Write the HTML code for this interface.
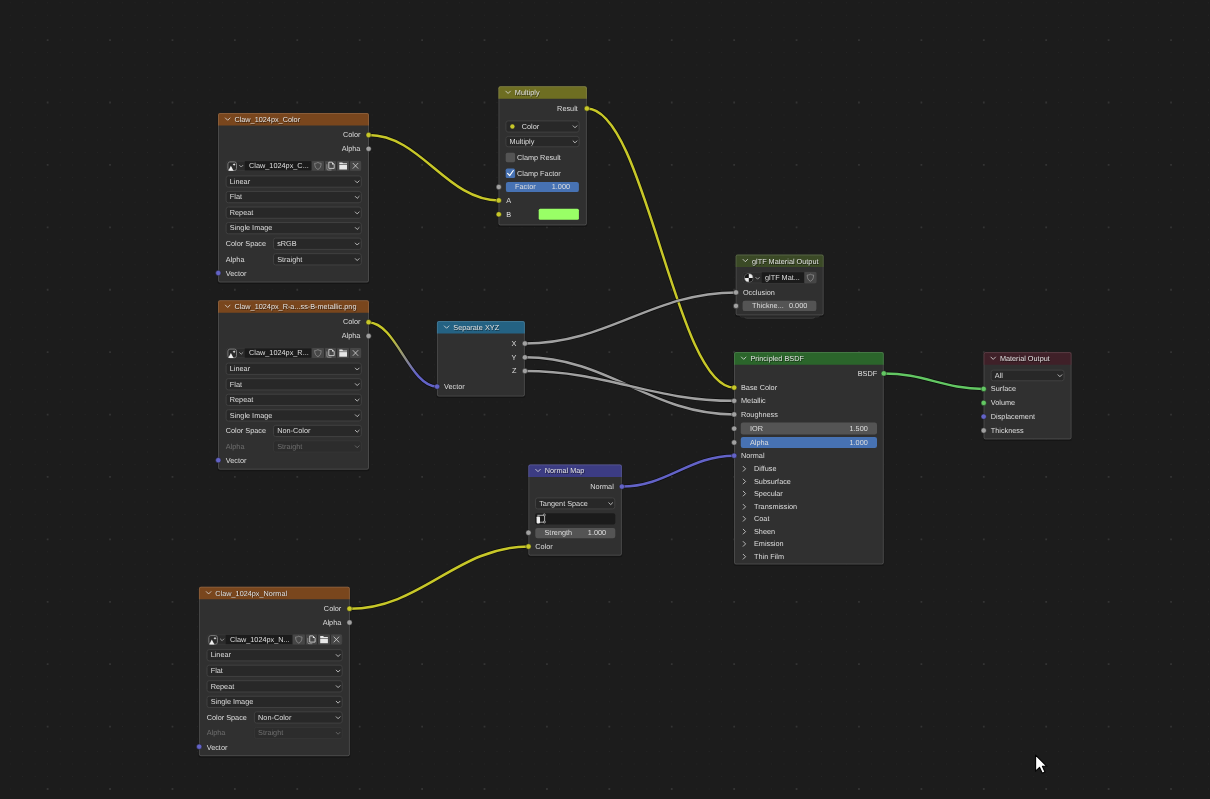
<!DOCTYPE html>
<html><head><meta charset="utf-8"><title>Blender Node Editor</title>
<style>
html,body{margin:0;padding:0;background:#1c1c1c;overflow:hidden;}
body{width:1210px;height:799px;font-family:"Liberation Sans", sans-serif;}
svg{display:block;text-rendering:geometricPrecision;will-change:transform;}
</style></head><body>
<svg width="1210" height="799" viewBox="0 0 1210 799" font-family='"Liberation Sans", sans-serif'>
<defs><linearGradient id="lg4" gradientUnits="userSpaceOnUse" x1="368.6" y1="322.5" x2="437.1" y2="386.6"><stop offset="0.25" stop-color="#c7c729"/><stop offset="0.75" stop-color="#6363c7"/></linearGradient></defs>
<rect width="1210" height="799" fill="#1c1c1c"/>
<path d="M9.70,2.15h1v1h-1zM22.18,2.15h1v1h-1zM34.66,2.15h1v1h-1zM47.15,2.15h1v1h-1zM59.63,2.15h1v1h-1zM72.11,2.15h1v1h-1zM84.59,2.15h1v1h-1zM97.07,2.15h1v1h-1zM109.56,2.15h1v1h-1zM122.04,2.15h1v1h-1zM134.52,2.15h1v1h-1zM147.00,2.15h1v1h-1zM159.48,2.15h1v1h-1zM171.97,2.15h1v1h-1zM184.45,2.15h1v1h-1zM196.93,2.15h1v1h-1zM209.41,2.15h1v1h-1zM221.89,2.15h1v1h-1zM234.38,2.15h1v1h-1zM246.86,2.15h1v1h-1zM259.34,2.15h1v1h-1zM271.82,2.15h1v1h-1zM284.30,2.15h1v1h-1zM296.79,2.15h1v1h-1zM309.27,2.15h1v1h-1zM321.75,2.15h1v1h-1zM334.23,2.15h1v1h-1zM346.71,2.15h1v1h-1zM359.20,2.15h1v1h-1zM371.68,2.15h1v1h-1zM384.16,2.15h1v1h-1zM396.64,2.15h1v1h-1zM409.12,2.15h1v1h-1zM421.61,2.15h1v1h-1zM434.09,2.15h1v1h-1zM446.57,2.15h1v1h-1zM459.05,2.15h1v1h-1zM471.53,2.15h1v1h-1zM484.02,2.15h1v1h-1zM496.50,2.15h1v1h-1zM508.98,2.15h1v1h-1zM521.46,2.15h1v1h-1zM533.94,2.15h1v1h-1zM546.43,2.15h1v1h-1zM558.91,2.15h1v1h-1zM571.39,2.15h1v1h-1zM583.87,2.15h1v1h-1zM596.35,2.15h1v1h-1zM608.84,2.15h1v1h-1zM621.32,2.15h1v1h-1zM633.80,2.15h1v1h-1zM646.28,2.15h1v1h-1zM658.76,2.15h1v1h-1zM671.25,2.15h1v1h-1zM683.73,2.15h1v1h-1zM696.21,2.15h1v1h-1zM708.69,2.15h1v1h-1zM721.17,2.15h1v1h-1zM733.66,2.15h1v1h-1zM746.14,2.15h1v1h-1zM758.62,2.15h1v1h-1zM771.10,2.15h1v1h-1zM783.58,2.15h1v1h-1zM796.07,2.15h1v1h-1zM808.55,2.15h1v1h-1zM821.03,2.15h1v1h-1zM833.51,2.15h1v1h-1zM845.99,2.15h1v1h-1zM858.48,2.15h1v1h-1zM870.96,2.15h1v1h-1zM883.44,2.15h1v1h-1zM895.92,2.15h1v1h-1zM908.40,2.15h1v1h-1zM920.89,2.15h1v1h-1zM933.37,2.15h1v1h-1zM945.85,2.15h1v1h-1zM958.33,2.15h1v1h-1zM970.81,2.15h1v1h-1zM983.30,2.15h1v1h-1zM995.78,2.15h1v1h-1zM1008.26,2.15h1v1h-1zM1020.74,2.15h1v1h-1zM1033.22,2.15h1v1h-1zM1045.71,2.15h1v1h-1zM1058.19,2.15h1v1h-1zM1070.67,2.15h1v1h-1zM1083.15,2.15h1v1h-1zM1095.63,2.15h1v1h-1zM1108.12,2.15h1v1h-1zM1120.60,2.15h1v1h-1zM1133.08,2.15h1v1h-1zM1145.56,2.15h1v1h-1zM1158.04,2.15h1v1h-1zM1170.53,2.15h1v1h-1zM1183.01,2.15h1v1h-1zM1195.49,2.15h1v1h-1zM1207.97,2.15h1v1h-1zM9.70,14.63h1v1h-1zM22.18,14.63h1v1h-1zM34.66,14.63h1v1h-1zM47.15,14.63h1v1h-1zM59.63,14.63h1v1h-1zM72.11,14.63h1v1h-1zM84.59,14.63h1v1h-1zM97.07,14.63h1v1h-1zM109.56,14.63h1v1h-1zM122.04,14.63h1v1h-1zM134.52,14.63h1v1h-1zM147.00,14.63h1v1h-1zM159.48,14.63h1v1h-1zM171.97,14.63h1v1h-1zM184.45,14.63h1v1h-1zM196.93,14.63h1v1h-1zM209.41,14.63h1v1h-1zM221.89,14.63h1v1h-1zM234.38,14.63h1v1h-1zM246.86,14.63h1v1h-1zM259.34,14.63h1v1h-1zM271.82,14.63h1v1h-1zM284.30,14.63h1v1h-1zM296.79,14.63h1v1h-1zM309.27,14.63h1v1h-1zM321.75,14.63h1v1h-1zM334.23,14.63h1v1h-1zM346.71,14.63h1v1h-1zM359.20,14.63h1v1h-1zM371.68,14.63h1v1h-1zM384.16,14.63h1v1h-1zM396.64,14.63h1v1h-1zM409.12,14.63h1v1h-1zM421.61,14.63h1v1h-1zM434.09,14.63h1v1h-1zM446.57,14.63h1v1h-1zM459.05,14.63h1v1h-1zM471.53,14.63h1v1h-1zM484.02,14.63h1v1h-1zM496.50,14.63h1v1h-1zM508.98,14.63h1v1h-1zM521.46,14.63h1v1h-1zM533.94,14.63h1v1h-1zM546.43,14.63h1v1h-1zM558.91,14.63h1v1h-1zM571.39,14.63h1v1h-1zM583.87,14.63h1v1h-1zM596.35,14.63h1v1h-1zM608.84,14.63h1v1h-1zM621.32,14.63h1v1h-1zM633.80,14.63h1v1h-1zM646.28,14.63h1v1h-1zM658.76,14.63h1v1h-1zM671.25,14.63h1v1h-1zM683.73,14.63h1v1h-1zM696.21,14.63h1v1h-1zM708.69,14.63h1v1h-1zM721.17,14.63h1v1h-1zM733.66,14.63h1v1h-1zM746.14,14.63h1v1h-1zM758.62,14.63h1v1h-1zM771.10,14.63h1v1h-1zM783.58,14.63h1v1h-1zM796.07,14.63h1v1h-1zM808.55,14.63h1v1h-1zM821.03,14.63h1v1h-1zM833.51,14.63h1v1h-1zM845.99,14.63h1v1h-1zM858.48,14.63h1v1h-1zM870.96,14.63h1v1h-1zM883.44,14.63h1v1h-1zM895.92,14.63h1v1h-1zM908.40,14.63h1v1h-1zM920.89,14.63h1v1h-1zM933.37,14.63h1v1h-1zM945.85,14.63h1v1h-1zM958.33,14.63h1v1h-1zM970.81,14.63h1v1h-1zM983.30,14.63h1v1h-1zM995.78,14.63h1v1h-1zM1008.26,14.63h1v1h-1zM1020.74,14.63h1v1h-1zM1033.22,14.63h1v1h-1zM1045.71,14.63h1v1h-1zM1058.19,14.63h1v1h-1zM1070.67,14.63h1v1h-1zM1083.15,14.63h1v1h-1zM1095.63,14.63h1v1h-1zM1108.12,14.63h1v1h-1zM1120.60,14.63h1v1h-1zM1133.08,14.63h1v1h-1zM1145.56,14.63h1v1h-1zM1158.04,14.63h1v1h-1zM1170.53,14.63h1v1h-1zM1183.01,14.63h1v1h-1zM1195.49,14.63h1v1h-1zM1207.97,14.63h1v1h-1zM9.70,27.11h1v1h-1zM22.18,27.11h1v1h-1zM34.66,27.11h1v1h-1zM47.15,27.11h1v1h-1zM59.63,27.11h1v1h-1zM72.11,27.11h1v1h-1zM84.59,27.11h1v1h-1zM97.07,27.11h1v1h-1zM109.56,27.11h1v1h-1zM122.04,27.11h1v1h-1zM134.52,27.11h1v1h-1zM147.00,27.11h1v1h-1zM159.48,27.11h1v1h-1zM171.97,27.11h1v1h-1zM184.45,27.11h1v1h-1zM196.93,27.11h1v1h-1zM209.41,27.11h1v1h-1zM221.89,27.11h1v1h-1zM234.38,27.11h1v1h-1zM246.86,27.11h1v1h-1zM259.34,27.11h1v1h-1zM271.82,27.11h1v1h-1zM284.30,27.11h1v1h-1zM296.79,27.11h1v1h-1zM309.27,27.11h1v1h-1zM321.75,27.11h1v1h-1zM334.23,27.11h1v1h-1zM346.71,27.11h1v1h-1zM359.20,27.11h1v1h-1zM371.68,27.11h1v1h-1zM384.16,27.11h1v1h-1zM396.64,27.11h1v1h-1zM409.12,27.11h1v1h-1zM421.61,27.11h1v1h-1zM434.09,27.11h1v1h-1zM446.57,27.11h1v1h-1zM459.05,27.11h1v1h-1zM471.53,27.11h1v1h-1zM484.02,27.11h1v1h-1zM496.50,27.11h1v1h-1zM508.98,27.11h1v1h-1zM521.46,27.11h1v1h-1zM533.94,27.11h1v1h-1zM546.43,27.11h1v1h-1zM558.91,27.11h1v1h-1zM571.39,27.11h1v1h-1zM583.87,27.11h1v1h-1zM596.35,27.11h1v1h-1zM608.84,27.11h1v1h-1zM621.32,27.11h1v1h-1zM633.80,27.11h1v1h-1zM646.28,27.11h1v1h-1zM658.76,27.11h1v1h-1zM671.25,27.11h1v1h-1zM683.73,27.11h1v1h-1zM696.21,27.11h1v1h-1zM708.69,27.11h1v1h-1zM721.17,27.11h1v1h-1zM733.66,27.11h1v1h-1zM746.14,27.11h1v1h-1zM758.62,27.11h1v1h-1zM771.10,27.11h1v1h-1zM783.58,27.11h1v1h-1zM796.07,27.11h1v1h-1zM808.55,27.11h1v1h-1zM821.03,27.11h1v1h-1zM833.51,27.11h1v1h-1zM845.99,27.11h1v1h-1zM858.48,27.11h1v1h-1zM870.96,27.11h1v1h-1zM883.44,27.11h1v1h-1zM895.92,27.11h1v1h-1zM908.40,27.11h1v1h-1zM920.89,27.11h1v1h-1zM933.37,27.11h1v1h-1zM945.85,27.11h1v1h-1zM958.33,27.11h1v1h-1zM970.81,27.11h1v1h-1zM983.30,27.11h1v1h-1zM995.78,27.11h1v1h-1zM1008.26,27.11h1v1h-1zM1020.74,27.11h1v1h-1zM1033.22,27.11h1v1h-1zM1045.71,27.11h1v1h-1zM1058.19,27.11h1v1h-1zM1070.67,27.11h1v1h-1zM1083.15,27.11h1v1h-1zM1095.63,27.11h1v1h-1zM1108.12,27.11h1v1h-1zM1120.60,27.11h1v1h-1zM1133.08,27.11h1v1h-1zM1145.56,27.11h1v1h-1zM1158.04,27.11h1v1h-1zM1170.53,27.11h1v1h-1zM1183.01,27.11h1v1h-1zM1195.49,27.11h1v1h-1zM1207.97,27.11h1v1h-1zM9.70,39.60h1v1h-1zM22.18,39.60h1v1h-1zM34.66,39.60h1v1h-1zM59.63,39.60h1v1h-1zM72.11,39.60h1v1h-1zM84.59,39.60h1v1h-1zM97.07,39.60h1v1h-1zM122.04,39.60h1v1h-1zM134.52,39.60h1v1h-1zM147.00,39.60h1v1h-1zM159.48,39.60h1v1h-1zM184.45,39.60h1v1h-1zM196.93,39.60h1v1h-1zM209.41,39.60h1v1h-1zM221.89,39.60h1v1h-1zM246.86,39.60h1v1h-1zM259.34,39.60h1v1h-1zM271.82,39.60h1v1h-1zM284.30,39.60h1v1h-1zM309.27,39.60h1v1h-1zM321.75,39.60h1v1h-1zM334.23,39.60h1v1h-1zM346.71,39.60h1v1h-1zM371.68,39.60h1v1h-1zM384.16,39.60h1v1h-1zM396.64,39.60h1v1h-1zM409.12,39.60h1v1h-1zM434.09,39.60h1v1h-1zM446.57,39.60h1v1h-1zM459.05,39.60h1v1h-1zM471.53,39.60h1v1h-1zM496.50,39.60h1v1h-1zM508.98,39.60h1v1h-1zM521.46,39.60h1v1h-1zM533.94,39.60h1v1h-1zM558.91,39.60h1v1h-1zM571.39,39.60h1v1h-1zM583.87,39.60h1v1h-1zM596.35,39.60h1v1h-1zM621.32,39.60h1v1h-1zM633.80,39.60h1v1h-1zM646.28,39.60h1v1h-1zM658.76,39.60h1v1h-1zM683.73,39.60h1v1h-1zM696.21,39.60h1v1h-1zM708.69,39.60h1v1h-1zM721.17,39.60h1v1h-1zM746.14,39.60h1v1h-1zM758.62,39.60h1v1h-1zM771.10,39.60h1v1h-1zM783.58,39.60h1v1h-1zM808.55,39.60h1v1h-1zM821.03,39.60h1v1h-1zM833.51,39.60h1v1h-1zM845.99,39.60h1v1h-1zM870.96,39.60h1v1h-1zM883.44,39.60h1v1h-1zM895.92,39.60h1v1h-1zM908.40,39.60h1v1h-1zM933.37,39.60h1v1h-1zM945.85,39.60h1v1h-1zM958.33,39.60h1v1h-1zM970.81,39.60h1v1h-1zM995.78,39.60h1v1h-1zM1008.26,39.60h1v1h-1zM1020.74,39.60h1v1h-1zM1033.22,39.60h1v1h-1zM1058.19,39.60h1v1h-1zM1070.67,39.60h1v1h-1zM1083.15,39.60h1v1h-1zM1095.63,39.60h1v1h-1zM1120.60,39.60h1v1h-1zM1133.08,39.60h1v1h-1zM1145.56,39.60h1v1h-1zM1158.04,39.60h1v1h-1zM1183.01,39.60h1v1h-1zM1195.49,39.60h1v1h-1zM1207.97,39.60h1v1h-1zM9.70,52.08h1v1h-1zM22.18,52.08h1v1h-1zM34.66,52.08h1v1h-1zM47.15,52.08h1v1h-1zM59.63,52.08h1v1h-1zM72.11,52.08h1v1h-1zM84.59,52.08h1v1h-1zM97.07,52.08h1v1h-1zM109.56,52.08h1v1h-1zM122.04,52.08h1v1h-1zM134.52,52.08h1v1h-1zM147.00,52.08h1v1h-1zM159.48,52.08h1v1h-1zM171.97,52.08h1v1h-1zM184.45,52.08h1v1h-1zM196.93,52.08h1v1h-1zM209.41,52.08h1v1h-1zM221.89,52.08h1v1h-1zM234.38,52.08h1v1h-1zM246.86,52.08h1v1h-1zM259.34,52.08h1v1h-1zM271.82,52.08h1v1h-1zM284.30,52.08h1v1h-1zM296.79,52.08h1v1h-1zM309.27,52.08h1v1h-1zM321.75,52.08h1v1h-1zM334.23,52.08h1v1h-1zM346.71,52.08h1v1h-1zM359.20,52.08h1v1h-1zM371.68,52.08h1v1h-1zM384.16,52.08h1v1h-1zM396.64,52.08h1v1h-1zM409.12,52.08h1v1h-1zM421.61,52.08h1v1h-1zM434.09,52.08h1v1h-1zM446.57,52.08h1v1h-1zM459.05,52.08h1v1h-1zM471.53,52.08h1v1h-1zM484.02,52.08h1v1h-1zM496.50,52.08h1v1h-1zM508.98,52.08h1v1h-1zM521.46,52.08h1v1h-1zM533.94,52.08h1v1h-1zM546.43,52.08h1v1h-1zM558.91,52.08h1v1h-1zM571.39,52.08h1v1h-1zM583.87,52.08h1v1h-1zM596.35,52.08h1v1h-1zM608.84,52.08h1v1h-1zM621.32,52.08h1v1h-1zM633.80,52.08h1v1h-1zM646.28,52.08h1v1h-1zM658.76,52.08h1v1h-1zM671.25,52.08h1v1h-1zM683.73,52.08h1v1h-1zM696.21,52.08h1v1h-1zM708.69,52.08h1v1h-1zM721.17,52.08h1v1h-1zM733.66,52.08h1v1h-1zM746.14,52.08h1v1h-1zM758.62,52.08h1v1h-1zM771.10,52.08h1v1h-1zM783.58,52.08h1v1h-1zM796.07,52.08h1v1h-1zM808.55,52.08h1v1h-1zM821.03,52.08h1v1h-1zM833.51,52.08h1v1h-1zM845.99,52.08h1v1h-1zM858.48,52.08h1v1h-1zM870.96,52.08h1v1h-1zM883.44,52.08h1v1h-1zM895.92,52.08h1v1h-1zM908.40,52.08h1v1h-1zM920.89,52.08h1v1h-1zM933.37,52.08h1v1h-1zM945.85,52.08h1v1h-1zM958.33,52.08h1v1h-1zM970.81,52.08h1v1h-1zM983.30,52.08h1v1h-1zM995.78,52.08h1v1h-1zM1008.26,52.08h1v1h-1zM1020.74,52.08h1v1h-1zM1033.22,52.08h1v1h-1zM1045.71,52.08h1v1h-1zM1058.19,52.08h1v1h-1zM1070.67,52.08h1v1h-1zM1083.15,52.08h1v1h-1zM1095.63,52.08h1v1h-1zM1108.12,52.08h1v1h-1zM1120.60,52.08h1v1h-1zM1133.08,52.08h1v1h-1zM1145.56,52.08h1v1h-1zM1158.04,52.08h1v1h-1zM1170.53,52.08h1v1h-1zM1183.01,52.08h1v1h-1zM1195.49,52.08h1v1h-1zM1207.97,52.08h1v1h-1zM9.70,64.56h1v1h-1zM22.18,64.56h1v1h-1zM34.66,64.56h1v1h-1zM47.15,64.56h1v1h-1zM59.63,64.56h1v1h-1zM72.11,64.56h1v1h-1zM84.59,64.56h1v1h-1zM97.07,64.56h1v1h-1zM109.56,64.56h1v1h-1zM122.04,64.56h1v1h-1zM134.52,64.56h1v1h-1zM147.00,64.56h1v1h-1zM159.48,64.56h1v1h-1zM171.97,64.56h1v1h-1zM184.45,64.56h1v1h-1zM196.93,64.56h1v1h-1zM209.41,64.56h1v1h-1zM221.89,64.56h1v1h-1zM234.38,64.56h1v1h-1zM246.86,64.56h1v1h-1zM259.34,64.56h1v1h-1zM271.82,64.56h1v1h-1zM284.30,64.56h1v1h-1zM296.79,64.56h1v1h-1zM309.27,64.56h1v1h-1zM321.75,64.56h1v1h-1zM334.23,64.56h1v1h-1zM346.71,64.56h1v1h-1zM359.20,64.56h1v1h-1zM371.68,64.56h1v1h-1zM384.16,64.56h1v1h-1zM396.64,64.56h1v1h-1zM409.12,64.56h1v1h-1zM421.61,64.56h1v1h-1zM434.09,64.56h1v1h-1zM446.57,64.56h1v1h-1zM459.05,64.56h1v1h-1zM471.53,64.56h1v1h-1zM484.02,64.56h1v1h-1zM496.50,64.56h1v1h-1zM508.98,64.56h1v1h-1zM521.46,64.56h1v1h-1zM533.94,64.56h1v1h-1zM546.43,64.56h1v1h-1zM558.91,64.56h1v1h-1zM571.39,64.56h1v1h-1zM583.87,64.56h1v1h-1zM596.35,64.56h1v1h-1zM608.84,64.56h1v1h-1zM621.32,64.56h1v1h-1zM633.80,64.56h1v1h-1zM646.28,64.56h1v1h-1zM658.76,64.56h1v1h-1zM671.25,64.56h1v1h-1zM683.73,64.56h1v1h-1zM696.21,64.56h1v1h-1zM708.69,64.56h1v1h-1zM721.17,64.56h1v1h-1zM733.66,64.56h1v1h-1zM746.14,64.56h1v1h-1zM758.62,64.56h1v1h-1zM771.10,64.56h1v1h-1zM783.58,64.56h1v1h-1zM796.07,64.56h1v1h-1zM808.55,64.56h1v1h-1zM821.03,64.56h1v1h-1zM833.51,64.56h1v1h-1zM845.99,64.56h1v1h-1zM858.48,64.56h1v1h-1zM870.96,64.56h1v1h-1zM883.44,64.56h1v1h-1zM895.92,64.56h1v1h-1zM908.40,64.56h1v1h-1zM920.89,64.56h1v1h-1zM933.37,64.56h1v1h-1zM945.85,64.56h1v1h-1zM958.33,64.56h1v1h-1zM970.81,64.56h1v1h-1zM983.30,64.56h1v1h-1zM995.78,64.56h1v1h-1zM1008.26,64.56h1v1h-1zM1020.74,64.56h1v1h-1zM1033.22,64.56h1v1h-1zM1045.71,64.56h1v1h-1zM1058.19,64.56h1v1h-1zM1070.67,64.56h1v1h-1zM1083.15,64.56h1v1h-1zM1095.63,64.56h1v1h-1zM1108.12,64.56h1v1h-1zM1120.60,64.56h1v1h-1zM1133.08,64.56h1v1h-1zM1145.56,64.56h1v1h-1zM1158.04,64.56h1v1h-1zM1170.53,64.56h1v1h-1zM1183.01,64.56h1v1h-1zM1195.49,64.56h1v1h-1zM1207.97,64.56h1v1h-1zM9.70,77.04h1v1h-1zM22.18,77.04h1v1h-1zM34.66,77.04h1v1h-1zM47.15,77.04h1v1h-1zM59.63,77.04h1v1h-1zM72.11,77.04h1v1h-1zM84.59,77.04h1v1h-1zM97.07,77.04h1v1h-1zM109.56,77.04h1v1h-1zM122.04,77.04h1v1h-1zM134.52,77.04h1v1h-1zM147.00,77.04h1v1h-1zM159.48,77.04h1v1h-1zM171.97,77.04h1v1h-1zM184.45,77.04h1v1h-1zM196.93,77.04h1v1h-1zM209.41,77.04h1v1h-1zM221.89,77.04h1v1h-1zM234.38,77.04h1v1h-1zM246.86,77.04h1v1h-1zM259.34,77.04h1v1h-1zM271.82,77.04h1v1h-1zM284.30,77.04h1v1h-1zM296.79,77.04h1v1h-1zM309.27,77.04h1v1h-1zM321.75,77.04h1v1h-1zM334.23,77.04h1v1h-1zM346.71,77.04h1v1h-1zM359.20,77.04h1v1h-1zM371.68,77.04h1v1h-1zM384.16,77.04h1v1h-1zM396.64,77.04h1v1h-1zM409.12,77.04h1v1h-1zM421.61,77.04h1v1h-1zM434.09,77.04h1v1h-1zM446.57,77.04h1v1h-1zM459.05,77.04h1v1h-1zM471.53,77.04h1v1h-1zM484.02,77.04h1v1h-1zM496.50,77.04h1v1h-1zM508.98,77.04h1v1h-1zM521.46,77.04h1v1h-1zM533.94,77.04h1v1h-1zM546.43,77.04h1v1h-1zM558.91,77.04h1v1h-1zM571.39,77.04h1v1h-1zM583.87,77.04h1v1h-1zM596.35,77.04h1v1h-1zM608.84,77.04h1v1h-1zM621.32,77.04h1v1h-1zM633.80,77.04h1v1h-1zM646.28,77.04h1v1h-1zM658.76,77.04h1v1h-1zM671.25,77.04h1v1h-1zM683.73,77.04h1v1h-1zM696.21,77.04h1v1h-1zM708.69,77.04h1v1h-1zM721.17,77.04h1v1h-1zM733.66,77.04h1v1h-1zM746.14,77.04h1v1h-1zM758.62,77.04h1v1h-1zM771.10,77.04h1v1h-1zM783.58,77.04h1v1h-1zM796.07,77.04h1v1h-1zM808.55,77.04h1v1h-1zM821.03,77.04h1v1h-1zM833.51,77.04h1v1h-1zM845.99,77.04h1v1h-1zM858.48,77.04h1v1h-1zM870.96,77.04h1v1h-1zM883.44,77.04h1v1h-1zM895.92,77.04h1v1h-1zM908.40,77.04h1v1h-1zM920.89,77.04h1v1h-1zM933.37,77.04h1v1h-1zM945.85,77.04h1v1h-1zM958.33,77.04h1v1h-1zM970.81,77.04h1v1h-1zM983.30,77.04h1v1h-1zM995.78,77.04h1v1h-1zM1008.26,77.04h1v1h-1zM1020.74,77.04h1v1h-1zM1033.22,77.04h1v1h-1zM1045.71,77.04h1v1h-1zM1058.19,77.04h1v1h-1zM1070.67,77.04h1v1h-1zM1083.15,77.04h1v1h-1zM1095.63,77.04h1v1h-1zM1108.12,77.04h1v1h-1zM1120.60,77.04h1v1h-1zM1133.08,77.04h1v1h-1zM1145.56,77.04h1v1h-1zM1158.04,77.04h1v1h-1zM1170.53,77.04h1v1h-1zM1183.01,77.04h1v1h-1zM1195.49,77.04h1v1h-1zM1207.97,77.04h1v1h-1zM9.70,89.52h1v1h-1zM22.18,89.52h1v1h-1zM34.66,89.52h1v1h-1zM47.15,89.52h1v1h-1zM59.63,89.52h1v1h-1zM72.11,89.52h1v1h-1zM84.59,89.52h1v1h-1zM97.07,89.52h1v1h-1zM109.56,89.52h1v1h-1zM122.04,89.52h1v1h-1zM134.52,89.52h1v1h-1zM147.00,89.52h1v1h-1zM159.48,89.52h1v1h-1zM171.97,89.52h1v1h-1zM184.45,89.52h1v1h-1zM196.93,89.52h1v1h-1zM209.41,89.52h1v1h-1zM221.89,89.52h1v1h-1zM234.38,89.52h1v1h-1zM246.86,89.52h1v1h-1zM259.34,89.52h1v1h-1zM271.82,89.52h1v1h-1zM284.30,89.52h1v1h-1zM296.79,89.52h1v1h-1zM309.27,89.52h1v1h-1zM321.75,89.52h1v1h-1zM334.23,89.52h1v1h-1zM346.71,89.52h1v1h-1zM359.20,89.52h1v1h-1zM371.68,89.52h1v1h-1zM384.16,89.52h1v1h-1zM396.64,89.52h1v1h-1zM409.12,89.52h1v1h-1zM421.61,89.52h1v1h-1zM434.09,89.52h1v1h-1zM446.57,89.52h1v1h-1zM459.05,89.52h1v1h-1zM471.53,89.52h1v1h-1zM484.02,89.52h1v1h-1zM496.50,89.52h1v1h-1zM508.98,89.52h1v1h-1zM521.46,89.52h1v1h-1zM533.94,89.52h1v1h-1zM546.43,89.52h1v1h-1zM558.91,89.52h1v1h-1zM571.39,89.52h1v1h-1zM583.87,89.52h1v1h-1zM596.35,89.52h1v1h-1zM608.84,89.52h1v1h-1zM621.32,89.52h1v1h-1zM633.80,89.52h1v1h-1zM646.28,89.52h1v1h-1zM658.76,89.52h1v1h-1zM671.25,89.52h1v1h-1zM683.73,89.52h1v1h-1zM696.21,89.52h1v1h-1zM708.69,89.52h1v1h-1zM721.17,89.52h1v1h-1zM733.66,89.52h1v1h-1zM746.14,89.52h1v1h-1zM758.62,89.52h1v1h-1zM771.10,89.52h1v1h-1zM783.58,89.52h1v1h-1zM796.07,89.52h1v1h-1zM808.55,89.52h1v1h-1zM821.03,89.52h1v1h-1zM833.51,89.52h1v1h-1zM845.99,89.52h1v1h-1zM858.48,89.52h1v1h-1zM870.96,89.52h1v1h-1zM883.44,89.52h1v1h-1zM895.92,89.52h1v1h-1zM908.40,89.52h1v1h-1zM920.89,89.52h1v1h-1zM933.37,89.52h1v1h-1zM945.85,89.52h1v1h-1zM958.33,89.52h1v1h-1zM970.81,89.52h1v1h-1zM983.30,89.52h1v1h-1zM995.78,89.52h1v1h-1zM1008.26,89.52h1v1h-1zM1020.74,89.52h1v1h-1zM1033.22,89.52h1v1h-1zM1045.71,89.52h1v1h-1zM1058.19,89.52h1v1h-1zM1070.67,89.52h1v1h-1zM1083.15,89.52h1v1h-1zM1095.63,89.52h1v1h-1zM1108.12,89.52h1v1h-1zM1120.60,89.52h1v1h-1zM1133.08,89.52h1v1h-1zM1145.56,89.52h1v1h-1zM1158.04,89.52h1v1h-1zM1170.53,89.52h1v1h-1zM1183.01,89.52h1v1h-1zM1195.49,89.52h1v1h-1zM1207.97,89.52h1v1h-1zM9.70,102.01h1v1h-1zM22.18,102.01h1v1h-1zM34.66,102.01h1v1h-1zM59.63,102.01h1v1h-1zM72.11,102.01h1v1h-1zM84.59,102.01h1v1h-1zM97.07,102.01h1v1h-1zM122.04,102.01h1v1h-1zM134.52,102.01h1v1h-1zM147.00,102.01h1v1h-1zM159.48,102.01h1v1h-1zM184.45,102.01h1v1h-1zM196.93,102.01h1v1h-1zM209.41,102.01h1v1h-1zM221.89,102.01h1v1h-1zM246.86,102.01h1v1h-1zM259.34,102.01h1v1h-1zM271.82,102.01h1v1h-1zM284.30,102.01h1v1h-1zM309.27,102.01h1v1h-1zM321.75,102.01h1v1h-1zM334.23,102.01h1v1h-1zM346.71,102.01h1v1h-1zM371.68,102.01h1v1h-1zM384.16,102.01h1v1h-1zM396.64,102.01h1v1h-1zM409.12,102.01h1v1h-1zM434.09,102.01h1v1h-1zM446.57,102.01h1v1h-1zM459.05,102.01h1v1h-1zM471.53,102.01h1v1h-1zM496.50,102.01h1v1h-1zM508.98,102.01h1v1h-1zM521.46,102.01h1v1h-1zM533.94,102.01h1v1h-1zM558.91,102.01h1v1h-1zM571.39,102.01h1v1h-1zM583.87,102.01h1v1h-1zM596.35,102.01h1v1h-1zM621.32,102.01h1v1h-1zM633.80,102.01h1v1h-1zM646.28,102.01h1v1h-1zM658.76,102.01h1v1h-1zM683.73,102.01h1v1h-1zM696.21,102.01h1v1h-1zM708.69,102.01h1v1h-1zM721.17,102.01h1v1h-1zM746.14,102.01h1v1h-1zM758.62,102.01h1v1h-1zM771.10,102.01h1v1h-1zM783.58,102.01h1v1h-1zM808.55,102.01h1v1h-1zM821.03,102.01h1v1h-1zM833.51,102.01h1v1h-1zM845.99,102.01h1v1h-1zM870.96,102.01h1v1h-1zM883.44,102.01h1v1h-1zM895.92,102.01h1v1h-1zM908.40,102.01h1v1h-1zM933.37,102.01h1v1h-1zM945.85,102.01h1v1h-1zM958.33,102.01h1v1h-1zM970.81,102.01h1v1h-1zM995.78,102.01h1v1h-1zM1008.26,102.01h1v1h-1zM1020.74,102.01h1v1h-1zM1033.22,102.01h1v1h-1zM1058.19,102.01h1v1h-1zM1070.67,102.01h1v1h-1zM1083.15,102.01h1v1h-1zM1095.63,102.01h1v1h-1zM1120.60,102.01h1v1h-1zM1133.08,102.01h1v1h-1zM1145.56,102.01h1v1h-1zM1158.04,102.01h1v1h-1zM1183.01,102.01h1v1h-1zM1195.49,102.01h1v1h-1zM1207.97,102.01h1v1h-1zM9.70,114.49h1v1h-1zM22.18,114.49h1v1h-1zM34.66,114.49h1v1h-1zM47.15,114.49h1v1h-1zM59.63,114.49h1v1h-1zM72.11,114.49h1v1h-1zM84.59,114.49h1v1h-1zM97.07,114.49h1v1h-1zM109.56,114.49h1v1h-1zM122.04,114.49h1v1h-1zM134.52,114.49h1v1h-1zM147.00,114.49h1v1h-1zM159.48,114.49h1v1h-1zM171.97,114.49h1v1h-1zM184.45,114.49h1v1h-1zM196.93,114.49h1v1h-1zM209.41,114.49h1v1h-1zM221.89,114.49h1v1h-1zM234.38,114.49h1v1h-1zM246.86,114.49h1v1h-1zM259.34,114.49h1v1h-1zM271.82,114.49h1v1h-1zM284.30,114.49h1v1h-1zM296.79,114.49h1v1h-1zM309.27,114.49h1v1h-1zM321.75,114.49h1v1h-1zM334.23,114.49h1v1h-1zM346.71,114.49h1v1h-1zM359.20,114.49h1v1h-1zM371.68,114.49h1v1h-1zM384.16,114.49h1v1h-1zM396.64,114.49h1v1h-1zM409.12,114.49h1v1h-1zM421.61,114.49h1v1h-1zM434.09,114.49h1v1h-1zM446.57,114.49h1v1h-1zM459.05,114.49h1v1h-1zM471.53,114.49h1v1h-1zM484.02,114.49h1v1h-1zM496.50,114.49h1v1h-1zM508.98,114.49h1v1h-1zM521.46,114.49h1v1h-1zM533.94,114.49h1v1h-1zM546.43,114.49h1v1h-1zM558.91,114.49h1v1h-1zM571.39,114.49h1v1h-1zM583.87,114.49h1v1h-1zM596.35,114.49h1v1h-1zM608.84,114.49h1v1h-1zM621.32,114.49h1v1h-1zM633.80,114.49h1v1h-1zM646.28,114.49h1v1h-1zM658.76,114.49h1v1h-1zM671.25,114.49h1v1h-1zM683.73,114.49h1v1h-1zM696.21,114.49h1v1h-1zM708.69,114.49h1v1h-1zM721.17,114.49h1v1h-1zM733.66,114.49h1v1h-1zM746.14,114.49h1v1h-1zM758.62,114.49h1v1h-1zM771.10,114.49h1v1h-1zM783.58,114.49h1v1h-1zM796.07,114.49h1v1h-1zM808.55,114.49h1v1h-1zM821.03,114.49h1v1h-1zM833.51,114.49h1v1h-1zM845.99,114.49h1v1h-1zM858.48,114.49h1v1h-1zM870.96,114.49h1v1h-1zM883.44,114.49h1v1h-1zM895.92,114.49h1v1h-1zM908.40,114.49h1v1h-1zM920.89,114.49h1v1h-1zM933.37,114.49h1v1h-1zM945.85,114.49h1v1h-1zM958.33,114.49h1v1h-1zM970.81,114.49h1v1h-1zM983.30,114.49h1v1h-1zM995.78,114.49h1v1h-1zM1008.26,114.49h1v1h-1zM1020.74,114.49h1v1h-1zM1033.22,114.49h1v1h-1zM1045.71,114.49h1v1h-1zM1058.19,114.49h1v1h-1zM1070.67,114.49h1v1h-1zM1083.15,114.49h1v1h-1zM1095.63,114.49h1v1h-1zM1108.12,114.49h1v1h-1zM1120.60,114.49h1v1h-1zM1133.08,114.49h1v1h-1zM1145.56,114.49h1v1h-1zM1158.04,114.49h1v1h-1zM1170.53,114.49h1v1h-1zM1183.01,114.49h1v1h-1zM1195.49,114.49h1v1h-1zM1207.97,114.49h1v1h-1zM9.70,126.97h1v1h-1zM22.18,126.97h1v1h-1zM34.66,126.97h1v1h-1zM47.15,126.97h1v1h-1zM59.63,126.97h1v1h-1zM72.11,126.97h1v1h-1zM84.59,126.97h1v1h-1zM97.07,126.97h1v1h-1zM109.56,126.97h1v1h-1zM122.04,126.97h1v1h-1zM134.52,126.97h1v1h-1zM147.00,126.97h1v1h-1zM159.48,126.97h1v1h-1zM171.97,126.97h1v1h-1zM184.45,126.97h1v1h-1zM196.93,126.97h1v1h-1zM209.41,126.97h1v1h-1zM221.89,126.97h1v1h-1zM234.38,126.97h1v1h-1zM246.86,126.97h1v1h-1zM259.34,126.97h1v1h-1zM271.82,126.97h1v1h-1zM284.30,126.97h1v1h-1zM296.79,126.97h1v1h-1zM309.27,126.97h1v1h-1zM321.75,126.97h1v1h-1zM334.23,126.97h1v1h-1zM346.71,126.97h1v1h-1zM359.20,126.97h1v1h-1zM371.68,126.97h1v1h-1zM384.16,126.97h1v1h-1zM396.64,126.97h1v1h-1zM409.12,126.97h1v1h-1zM421.61,126.97h1v1h-1zM434.09,126.97h1v1h-1zM446.57,126.97h1v1h-1zM459.05,126.97h1v1h-1zM471.53,126.97h1v1h-1zM484.02,126.97h1v1h-1zM496.50,126.97h1v1h-1zM508.98,126.97h1v1h-1zM521.46,126.97h1v1h-1zM533.94,126.97h1v1h-1zM546.43,126.97h1v1h-1zM558.91,126.97h1v1h-1zM571.39,126.97h1v1h-1zM583.87,126.97h1v1h-1zM596.35,126.97h1v1h-1zM608.84,126.97h1v1h-1zM621.32,126.97h1v1h-1zM633.80,126.97h1v1h-1zM646.28,126.97h1v1h-1zM658.76,126.97h1v1h-1zM671.25,126.97h1v1h-1zM683.73,126.97h1v1h-1zM696.21,126.97h1v1h-1zM708.69,126.97h1v1h-1zM721.17,126.97h1v1h-1zM733.66,126.97h1v1h-1zM746.14,126.97h1v1h-1zM758.62,126.97h1v1h-1zM771.10,126.97h1v1h-1zM783.58,126.97h1v1h-1zM796.07,126.97h1v1h-1zM808.55,126.97h1v1h-1zM821.03,126.97h1v1h-1zM833.51,126.97h1v1h-1zM845.99,126.97h1v1h-1zM858.48,126.97h1v1h-1zM870.96,126.97h1v1h-1zM883.44,126.97h1v1h-1zM895.92,126.97h1v1h-1zM908.40,126.97h1v1h-1zM920.89,126.97h1v1h-1zM933.37,126.97h1v1h-1zM945.85,126.97h1v1h-1zM958.33,126.97h1v1h-1zM970.81,126.97h1v1h-1zM983.30,126.97h1v1h-1zM995.78,126.97h1v1h-1zM1008.26,126.97h1v1h-1zM1020.74,126.97h1v1h-1zM1033.22,126.97h1v1h-1zM1045.71,126.97h1v1h-1zM1058.19,126.97h1v1h-1zM1070.67,126.97h1v1h-1zM1083.15,126.97h1v1h-1zM1095.63,126.97h1v1h-1zM1108.12,126.97h1v1h-1zM1120.60,126.97h1v1h-1zM1133.08,126.97h1v1h-1zM1145.56,126.97h1v1h-1zM1158.04,126.97h1v1h-1zM1170.53,126.97h1v1h-1zM1183.01,126.97h1v1h-1zM1195.49,126.97h1v1h-1zM1207.97,126.97h1v1h-1zM9.70,139.45h1v1h-1zM22.18,139.45h1v1h-1zM34.66,139.45h1v1h-1zM47.15,139.45h1v1h-1zM59.63,139.45h1v1h-1zM72.11,139.45h1v1h-1zM84.59,139.45h1v1h-1zM97.07,139.45h1v1h-1zM109.56,139.45h1v1h-1zM122.04,139.45h1v1h-1zM134.52,139.45h1v1h-1zM147.00,139.45h1v1h-1zM159.48,139.45h1v1h-1zM171.97,139.45h1v1h-1zM184.45,139.45h1v1h-1zM196.93,139.45h1v1h-1zM209.41,139.45h1v1h-1zM221.89,139.45h1v1h-1zM234.38,139.45h1v1h-1zM246.86,139.45h1v1h-1zM259.34,139.45h1v1h-1zM271.82,139.45h1v1h-1zM284.30,139.45h1v1h-1zM296.79,139.45h1v1h-1zM309.27,139.45h1v1h-1zM321.75,139.45h1v1h-1zM334.23,139.45h1v1h-1zM346.71,139.45h1v1h-1zM359.20,139.45h1v1h-1zM371.68,139.45h1v1h-1zM384.16,139.45h1v1h-1zM396.64,139.45h1v1h-1zM409.12,139.45h1v1h-1zM421.61,139.45h1v1h-1zM434.09,139.45h1v1h-1zM446.57,139.45h1v1h-1zM459.05,139.45h1v1h-1zM471.53,139.45h1v1h-1zM484.02,139.45h1v1h-1zM496.50,139.45h1v1h-1zM508.98,139.45h1v1h-1zM521.46,139.45h1v1h-1zM533.94,139.45h1v1h-1zM546.43,139.45h1v1h-1zM558.91,139.45h1v1h-1zM571.39,139.45h1v1h-1zM583.87,139.45h1v1h-1zM596.35,139.45h1v1h-1zM608.84,139.45h1v1h-1zM621.32,139.45h1v1h-1zM633.80,139.45h1v1h-1zM646.28,139.45h1v1h-1zM658.76,139.45h1v1h-1zM671.25,139.45h1v1h-1zM683.73,139.45h1v1h-1zM696.21,139.45h1v1h-1zM708.69,139.45h1v1h-1zM721.17,139.45h1v1h-1zM733.66,139.45h1v1h-1zM746.14,139.45h1v1h-1zM758.62,139.45h1v1h-1zM771.10,139.45h1v1h-1zM783.58,139.45h1v1h-1zM796.07,139.45h1v1h-1zM808.55,139.45h1v1h-1zM821.03,139.45h1v1h-1zM833.51,139.45h1v1h-1zM845.99,139.45h1v1h-1zM858.48,139.45h1v1h-1zM870.96,139.45h1v1h-1zM883.44,139.45h1v1h-1zM895.92,139.45h1v1h-1zM908.40,139.45h1v1h-1zM920.89,139.45h1v1h-1zM933.37,139.45h1v1h-1zM945.85,139.45h1v1h-1zM958.33,139.45h1v1h-1zM970.81,139.45h1v1h-1zM983.30,139.45h1v1h-1zM995.78,139.45h1v1h-1zM1008.26,139.45h1v1h-1zM1020.74,139.45h1v1h-1zM1033.22,139.45h1v1h-1zM1045.71,139.45h1v1h-1zM1058.19,139.45h1v1h-1zM1070.67,139.45h1v1h-1zM1083.15,139.45h1v1h-1zM1095.63,139.45h1v1h-1zM1108.12,139.45h1v1h-1zM1120.60,139.45h1v1h-1zM1133.08,139.45h1v1h-1zM1145.56,139.45h1v1h-1zM1158.04,139.45h1v1h-1zM1170.53,139.45h1v1h-1zM1183.01,139.45h1v1h-1zM1195.49,139.45h1v1h-1zM1207.97,139.45h1v1h-1zM9.70,151.93h1v1h-1zM22.18,151.93h1v1h-1zM34.66,151.93h1v1h-1zM47.15,151.93h1v1h-1zM59.63,151.93h1v1h-1zM72.11,151.93h1v1h-1zM84.59,151.93h1v1h-1zM97.07,151.93h1v1h-1zM109.56,151.93h1v1h-1zM122.04,151.93h1v1h-1zM134.52,151.93h1v1h-1zM147.00,151.93h1v1h-1zM159.48,151.93h1v1h-1zM171.97,151.93h1v1h-1zM184.45,151.93h1v1h-1zM196.93,151.93h1v1h-1zM209.41,151.93h1v1h-1zM221.89,151.93h1v1h-1zM234.38,151.93h1v1h-1zM246.86,151.93h1v1h-1zM259.34,151.93h1v1h-1zM271.82,151.93h1v1h-1zM284.30,151.93h1v1h-1zM296.79,151.93h1v1h-1zM309.27,151.93h1v1h-1zM321.75,151.93h1v1h-1zM334.23,151.93h1v1h-1zM346.71,151.93h1v1h-1zM359.20,151.93h1v1h-1zM371.68,151.93h1v1h-1zM384.16,151.93h1v1h-1zM396.64,151.93h1v1h-1zM409.12,151.93h1v1h-1zM421.61,151.93h1v1h-1zM434.09,151.93h1v1h-1zM446.57,151.93h1v1h-1zM459.05,151.93h1v1h-1zM471.53,151.93h1v1h-1zM484.02,151.93h1v1h-1zM496.50,151.93h1v1h-1zM508.98,151.93h1v1h-1zM521.46,151.93h1v1h-1zM533.94,151.93h1v1h-1zM546.43,151.93h1v1h-1zM558.91,151.93h1v1h-1zM571.39,151.93h1v1h-1zM583.87,151.93h1v1h-1zM596.35,151.93h1v1h-1zM608.84,151.93h1v1h-1zM621.32,151.93h1v1h-1zM633.80,151.93h1v1h-1zM646.28,151.93h1v1h-1zM658.76,151.93h1v1h-1zM671.25,151.93h1v1h-1zM683.73,151.93h1v1h-1zM696.21,151.93h1v1h-1zM708.69,151.93h1v1h-1zM721.17,151.93h1v1h-1zM733.66,151.93h1v1h-1zM746.14,151.93h1v1h-1zM758.62,151.93h1v1h-1zM771.10,151.93h1v1h-1zM783.58,151.93h1v1h-1zM796.07,151.93h1v1h-1zM808.55,151.93h1v1h-1zM821.03,151.93h1v1h-1zM833.51,151.93h1v1h-1zM845.99,151.93h1v1h-1zM858.48,151.93h1v1h-1zM870.96,151.93h1v1h-1zM883.44,151.93h1v1h-1zM895.92,151.93h1v1h-1zM908.40,151.93h1v1h-1zM920.89,151.93h1v1h-1zM933.37,151.93h1v1h-1zM945.85,151.93h1v1h-1zM958.33,151.93h1v1h-1zM970.81,151.93h1v1h-1zM983.30,151.93h1v1h-1zM995.78,151.93h1v1h-1zM1008.26,151.93h1v1h-1zM1020.74,151.93h1v1h-1zM1033.22,151.93h1v1h-1zM1045.71,151.93h1v1h-1zM1058.19,151.93h1v1h-1zM1070.67,151.93h1v1h-1zM1083.15,151.93h1v1h-1zM1095.63,151.93h1v1h-1zM1108.12,151.93h1v1h-1zM1120.60,151.93h1v1h-1zM1133.08,151.93h1v1h-1zM1145.56,151.93h1v1h-1zM1158.04,151.93h1v1h-1zM1170.53,151.93h1v1h-1zM1183.01,151.93h1v1h-1zM1195.49,151.93h1v1h-1zM1207.97,151.93h1v1h-1zM9.70,164.42h1v1h-1zM22.18,164.42h1v1h-1zM34.66,164.42h1v1h-1zM59.63,164.42h1v1h-1zM72.11,164.42h1v1h-1zM84.59,164.42h1v1h-1zM97.07,164.42h1v1h-1zM122.04,164.42h1v1h-1zM134.52,164.42h1v1h-1zM147.00,164.42h1v1h-1zM159.48,164.42h1v1h-1zM184.45,164.42h1v1h-1zM196.93,164.42h1v1h-1zM209.41,164.42h1v1h-1zM221.89,164.42h1v1h-1zM246.86,164.42h1v1h-1zM259.34,164.42h1v1h-1zM271.82,164.42h1v1h-1zM284.30,164.42h1v1h-1zM309.27,164.42h1v1h-1zM321.75,164.42h1v1h-1zM334.23,164.42h1v1h-1zM346.71,164.42h1v1h-1zM371.68,164.42h1v1h-1zM384.16,164.42h1v1h-1zM396.64,164.42h1v1h-1zM409.12,164.42h1v1h-1zM434.09,164.42h1v1h-1zM446.57,164.42h1v1h-1zM459.05,164.42h1v1h-1zM471.53,164.42h1v1h-1zM496.50,164.42h1v1h-1zM508.98,164.42h1v1h-1zM521.46,164.42h1v1h-1zM533.94,164.42h1v1h-1zM558.91,164.42h1v1h-1zM571.39,164.42h1v1h-1zM583.87,164.42h1v1h-1zM596.35,164.42h1v1h-1zM621.32,164.42h1v1h-1zM633.80,164.42h1v1h-1zM646.28,164.42h1v1h-1zM658.76,164.42h1v1h-1zM683.73,164.42h1v1h-1zM696.21,164.42h1v1h-1zM708.69,164.42h1v1h-1zM721.17,164.42h1v1h-1zM746.14,164.42h1v1h-1zM758.62,164.42h1v1h-1zM771.10,164.42h1v1h-1zM783.58,164.42h1v1h-1zM808.55,164.42h1v1h-1zM821.03,164.42h1v1h-1zM833.51,164.42h1v1h-1zM845.99,164.42h1v1h-1zM870.96,164.42h1v1h-1zM883.44,164.42h1v1h-1zM895.92,164.42h1v1h-1zM908.40,164.42h1v1h-1zM933.37,164.42h1v1h-1zM945.85,164.42h1v1h-1zM958.33,164.42h1v1h-1zM970.81,164.42h1v1h-1zM995.78,164.42h1v1h-1zM1008.26,164.42h1v1h-1zM1020.74,164.42h1v1h-1zM1033.22,164.42h1v1h-1zM1058.19,164.42h1v1h-1zM1070.67,164.42h1v1h-1zM1083.15,164.42h1v1h-1zM1095.63,164.42h1v1h-1zM1120.60,164.42h1v1h-1zM1133.08,164.42h1v1h-1zM1145.56,164.42h1v1h-1zM1158.04,164.42h1v1h-1zM1183.01,164.42h1v1h-1zM1195.49,164.42h1v1h-1zM1207.97,164.42h1v1h-1zM9.70,176.90h1v1h-1zM22.18,176.90h1v1h-1zM34.66,176.90h1v1h-1zM47.15,176.90h1v1h-1zM59.63,176.90h1v1h-1zM72.11,176.90h1v1h-1zM84.59,176.90h1v1h-1zM97.07,176.90h1v1h-1zM109.56,176.90h1v1h-1zM122.04,176.90h1v1h-1zM134.52,176.90h1v1h-1zM147.00,176.90h1v1h-1zM159.48,176.90h1v1h-1zM171.97,176.90h1v1h-1zM184.45,176.90h1v1h-1zM196.93,176.90h1v1h-1zM209.41,176.90h1v1h-1zM221.89,176.90h1v1h-1zM234.38,176.90h1v1h-1zM246.86,176.90h1v1h-1zM259.34,176.90h1v1h-1zM271.82,176.90h1v1h-1zM284.30,176.90h1v1h-1zM296.79,176.90h1v1h-1zM309.27,176.90h1v1h-1zM321.75,176.90h1v1h-1zM334.23,176.90h1v1h-1zM346.71,176.90h1v1h-1zM359.20,176.90h1v1h-1zM371.68,176.90h1v1h-1zM384.16,176.90h1v1h-1zM396.64,176.90h1v1h-1zM409.12,176.90h1v1h-1zM421.61,176.90h1v1h-1zM434.09,176.90h1v1h-1zM446.57,176.90h1v1h-1zM459.05,176.90h1v1h-1zM471.53,176.90h1v1h-1zM484.02,176.90h1v1h-1zM496.50,176.90h1v1h-1zM508.98,176.90h1v1h-1zM521.46,176.90h1v1h-1zM533.94,176.90h1v1h-1zM546.43,176.90h1v1h-1zM558.91,176.90h1v1h-1zM571.39,176.90h1v1h-1zM583.87,176.90h1v1h-1zM596.35,176.90h1v1h-1zM608.84,176.90h1v1h-1zM621.32,176.90h1v1h-1zM633.80,176.90h1v1h-1zM646.28,176.90h1v1h-1zM658.76,176.90h1v1h-1zM671.25,176.90h1v1h-1zM683.73,176.90h1v1h-1zM696.21,176.90h1v1h-1zM708.69,176.90h1v1h-1zM721.17,176.90h1v1h-1zM733.66,176.90h1v1h-1zM746.14,176.90h1v1h-1zM758.62,176.90h1v1h-1zM771.10,176.90h1v1h-1zM783.58,176.90h1v1h-1zM796.07,176.90h1v1h-1zM808.55,176.90h1v1h-1zM821.03,176.90h1v1h-1zM833.51,176.90h1v1h-1zM845.99,176.90h1v1h-1zM858.48,176.90h1v1h-1zM870.96,176.90h1v1h-1zM883.44,176.90h1v1h-1zM895.92,176.90h1v1h-1zM908.40,176.90h1v1h-1zM920.89,176.90h1v1h-1zM933.37,176.90h1v1h-1zM945.85,176.90h1v1h-1zM958.33,176.90h1v1h-1zM970.81,176.90h1v1h-1zM983.30,176.90h1v1h-1zM995.78,176.90h1v1h-1zM1008.26,176.90h1v1h-1zM1020.74,176.90h1v1h-1zM1033.22,176.90h1v1h-1zM1045.71,176.90h1v1h-1zM1058.19,176.90h1v1h-1zM1070.67,176.90h1v1h-1zM1083.15,176.90h1v1h-1zM1095.63,176.90h1v1h-1zM1108.12,176.90h1v1h-1zM1120.60,176.90h1v1h-1zM1133.08,176.90h1v1h-1zM1145.56,176.90h1v1h-1zM1158.04,176.90h1v1h-1zM1170.53,176.90h1v1h-1zM1183.01,176.90h1v1h-1zM1195.49,176.90h1v1h-1zM1207.97,176.90h1v1h-1zM9.70,189.38h1v1h-1zM22.18,189.38h1v1h-1zM34.66,189.38h1v1h-1zM47.15,189.38h1v1h-1zM59.63,189.38h1v1h-1zM72.11,189.38h1v1h-1zM84.59,189.38h1v1h-1zM97.07,189.38h1v1h-1zM109.56,189.38h1v1h-1zM122.04,189.38h1v1h-1zM134.52,189.38h1v1h-1zM147.00,189.38h1v1h-1zM159.48,189.38h1v1h-1zM171.97,189.38h1v1h-1zM184.45,189.38h1v1h-1zM196.93,189.38h1v1h-1zM209.41,189.38h1v1h-1zM221.89,189.38h1v1h-1zM234.38,189.38h1v1h-1zM246.86,189.38h1v1h-1zM259.34,189.38h1v1h-1zM271.82,189.38h1v1h-1zM284.30,189.38h1v1h-1zM296.79,189.38h1v1h-1zM309.27,189.38h1v1h-1zM321.75,189.38h1v1h-1zM334.23,189.38h1v1h-1zM346.71,189.38h1v1h-1zM359.20,189.38h1v1h-1zM371.68,189.38h1v1h-1zM384.16,189.38h1v1h-1zM396.64,189.38h1v1h-1zM409.12,189.38h1v1h-1zM421.61,189.38h1v1h-1zM434.09,189.38h1v1h-1zM446.57,189.38h1v1h-1zM459.05,189.38h1v1h-1zM471.53,189.38h1v1h-1zM484.02,189.38h1v1h-1zM496.50,189.38h1v1h-1zM508.98,189.38h1v1h-1zM521.46,189.38h1v1h-1zM533.94,189.38h1v1h-1zM546.43,189.38h1v1h-1zM558.91,189.38h1v1h-1zM571.39,189.38h1v1h-1zM583.87,189.38h1v1h-1zM596.35,189.38h1v1h-1zM608.84,189.38h1v1h-1zM621.32,189.38h1v1h-1zM633.80,189.38h1v1h-1zM646.28,189.38h1v1h-1zM658.76,189.38h1v1h-1zM671.25,189.38h1v1h-1zM683.73,189.38h1v1h-1zM696.21,189.38h1v1h-1zM708.69,189.38h1v1h-1zM721.17,189.38h1v1h-1zM733.66,189.38h1v1h-1zM746.14,189.38h1v1h-1zM758.62,189.38h1v1h-1zM771.10,189.38h1v1h-1zM783.58,189.38h1v1h-1zM796.07,189.38h1v1h-1zM808.55,189.38h1v1h-1zM821.03,189.38h1v1h-1zM833.51,189.38h1v1h-1zM845.99,189.38h1v1h-1zM858.48,189.38h1v1h-1zM870.96,189.38h1v1h-1zM883.44,189.38h1v1h-1zM895.92,189.38h1v1h-1zM908.40,189.38h1v1h-1zM920.89,189.38h1v1h-1zM933.37,189.38h1v1h-1zM945.85,189.38h1v1h-1zM958.33,189.38h1v1h-1zM970.81,189.38h1v1h-1zM983.30,189.38h1v1h-1zM995.78,189.38h1v1h-1zM1008.26,189.38h1v1h-1zM1020.74,189.38h1v1h-1zM1033.22,189.38h1v1h-1zM1045.71,189.38h1v1h-1zM1058.19,189.38h1v1h-1zM1070.67,189.38h1v1h-1zM1083.15,189.38h1v1h-1zM1095.63,189.38h1v1h-1zM1108.12,189.38h1v1h-1zM1120.60,189.38h1v1h-1zM1133.08,189.38h1v1h-1zM1145.56,189.38h1v1h-1zM1158.04,189.38h1v1h-1zM1170.53,189.38h1v1h-1zM1183.01,189.38h1v1h-1zM1195.49,189.38h1v1h-1zM1207.97,189.38h1v1h-1zM9.70,201.86h1v1h-1zM22.18,201.86h1v1h-1zM34.66,201.86h1v1h-1zM47.15,201.86h1v1h-1zM59.63,201.86h1v1h-1zM72.11,201.86h1v1h-1zM84.59,201.86h1v1h-1zM97.07,201.86h1v1h-1zM109.56,201.86h1v1h-1zM122.04,201.86h1v1h-1zM134.52,201.86h1v1h-1zM147.00,201.86h1v1h-1zM159.48,201.86h1v1h-1zM171.97,201.86h1v1h-1zM184.45,201.86h1v1h-1zM196.93,201.86h1v1h-1zM209.41,201.86h1v1h-1zM221.89,201.86h1v1h-1zM234.38,201.86h1v1h-1zM246.86,201.86h1v1h-1zM259.34,201.86h1v1h-1zM271.82,201.86h1v1h-1zM284.30,201.86h1v1h-1zM296.79,201.86h1v1h-1zM309.27,201.86h1v1h-1zM321.75,201.86h1v1h-1zM334.23,201.86h1v1h-1zM346.71,201.86h1v1h-1zM359.20,201.86h1v1h-1zM371.68,201.86h1v1h-1zM384.16,201.86h1v1h-1zM396.64,201.86h1v1h-1zM409.12,201.86h1v1h-1zM421.61,201.86h1v1h-1zM434.09,201.86h1v1h-1zM446.57,201.86h1v1h-1zM459.05,201.86h1v1h-1zM471.53,201.86h1v1h-1zM484.02,201.86h1v1h-1zM496.50,201.86h1v1h-1zM508.98,201.86h1v1h-1zM521.46,201.86h1v1h-1zM533.94,201.86h1v1h-1zM546.43,201.86h1v1h-1zM558.91,201.86h1v1h-1zM571.39,201.86h1v1h-1zM583.87,201.86h1v1h-1zM596.35,201.86h1v1h-1zM608.84,201.86h1v1h-1zM621.32,201.86h1v1h-1zM633.80,201.86h1v1h-1zM646.28,201.86h1v1h-1zM658.76,201.86h1v1h-1zM671.25,201.86h1v1h-1zM683.73,201.86h1v1h-1zM696.21,201.86h1v1h-1zM708.69,201.86h1v1h-1zM721.17,201.86h1v1h-1zM733.66,201.86h1v1h-1zM746.14,201.86h1v1h-1zM758.62,201.86h1v1h-1zM771.10,201.86h1v1h-1zM783.58,201.86h1v1h-1zM796.07,201.86h1v1h-1zM808.55,201.86h1v1h-1zM821.03,201.86h1v1h-1zM833.51,201.86h1v1h-1zM845.99,201.86h1v1h-1zM858.48,201.86h1v1h-1zM870.96,201.86h1v1h-1zM883.44,201.86h1v1h-1zM895.92,201.86h1v1h-1zM908.40,201.86h1v1h-1zM920.89,201.86h1v1h-1zM933.37,201.86h1v1h-1zM945.85,201.86h1v1h-1zM958.33,201.86h1v1h-1zM970.81,201.86h1v1h-1zM983.30,201.86h1v1h-1zM995.78,201.86h1v1h-1zM1008.26,201.86h1v1h-1zM1020.74,201.86h1v1h-1zM1033.22,201.86h1v1h-1zM1045.71,201.86h1v1h-1zM1058.19,201.86h1v1h-1zM1070.67,201.86h1v1h-1zM1083.15,201.86h1v1h-1zM1095.63,201.86h1v1h-1zM1108.12,201.86h1v1h-1zM1120.60,201.86h1v1h-1zM1133.08,201.86h1v1h-1zM1145.56,201.86h1v1h-1zM1158.04,201.86h1v1h-1zM1170.53,201.86h1v1h-1zM1183.01,201.86h1v1h-1zM1195.49,201.86h1v1h-1zM1207.97,201.86h1v1h-1zM9.70,214.34h1v1h-1zM22.18,214.34h1v1h-1zM34.66,214.34h1v1h-1zM47.15,214.34h1v1h-1zM59.63,214.34h1v1h-1zM72.11,214.34h1v1h-1zM84.59,214.34h1v1h-1zM97.07,214.34h1v1h-1zM109.56,214.34h1v1h-1zM122.04,214.34h1v1h-1zM134.52,214.34h1v1h-1zM147.00,214.34h1v1h-1zM159.48,214.34h1v1h-1zM171.97,214.34h1v1h-1zM184.45,214.34h1v1h-1zM196.93,214.34h1v1h-1zM209.41,214.34h1v1h-1zM221.89,214.34h1v1h-1zM234.38,214.34h1v1h-1zM246.86,214.34h1v1h-1zM259.34,214.34h1v1h-1zM271.82,214.34h1v1h-1zM284.30,214.34h1v1h-1zM296.79,214.34h1v1h-1zM309.27,214.34h1v1h-1zM321.75,214.34h1v1h-1zM334.23,214.34h1v1h-1zM346.71,214.34h1v1h-1zM359.20,214.34h1v1h-1zM371.68,214.34h1v1h-1zM384.16,214.34h1v1h-1zM396.64,214.34h1v1h-1zM409.12,214.34h1v1h-1zM421.61,214.34h1v1h-1zM434.09,214.34h1v1h-1zM446.57,214.34h1v1h-1zM459.05,214.34h1v1h-1zM471.53,214.34h1v1h-1zM484.02,214.34h1v1h-1zM496.50,214.34h1v1h-1zM508.98,214.34h1v1h-1zM521.46,214.34h1v1h-1zM533.94,214.34h1v1h-1zM546.43,214.34h1v1h-1zM558.91,214.34h1v1h-1zM571.39,214.34h1v1h-1zM583.87,214.34h1v1h-1zM596.35,214.34h1v1h-1zM608.84,214.34h1v1h-1zM621.32,214.34h1v1h-1zM633.80,214.34h1v1h-1zM646.28,214.34h1v1h-1zM658.76,214.34h1v1h-1zM671.25,214.34h1v1h-1zM683.73,214.34h1v1h-1zM696.21,214.34h1v1h-1zM708.69,214.34h1v1h-1zM721.17,214.34h1v1h-1zM733.66,214.34h1v1h-1zM746.14,214.34h1v1h-1zM758.62,214.34h1v1h-1zM771.10,214.34h1v1h-1zM783.58,214.34h1v1h-1zM796.07,214.34h1v1h-1zM808.55,214.34h1v1h-1zM821.03,214.34h1v1h-1zM833.51,214.34h1v1h-1zM845.99,214.34h1v1h-1zM858.48,214.34h1v1h-1zM870.96,214.34h1v1h-1zM883.44,214.34h1v1h-1zM895.92,214.34h1v1h-1zM908.40,214.34h1v1h-1zM920.89,214.34h1v1h-1zM933.37,214.34h1v1h-1zM945.85,214.34h1v1h-1zM958.33,214.34h1v1h-1zM970.81,214.34h1v1h-1zM983.30,214.34h1v1h-1zM995.78,214.34h1v1h-1zM1008.26,214.34h1v1h-1zM1020.74,214.34h1v1h-1zM1033.22,214.34h1v1h-1zM1045.71,214.34h1v1h-1zM1058.19,214.34h1v1h-1zM1070.67,214.34h1v1h-1zM1083.15,214.34h1v1h-1zM1095.63,214.34h1v1h-1zM1108.12,214.34h1v1h-1zM1120.60,214.34h1v1h-1zM1133.08,214.34h1v1h-1zM1145.56,214.34h1v1h-1zM1158.04,214.34h1v1h-1zM1170.53,214.34h1v1h-1zM1183.01,214.34h1v1h-1zM1195.49,214.34h1v1h-1zM1207.97,214.34h1v1h-1zM9.70,226.83h1v1h-1zM22.18,226.83h1v1h-1zM34.66,226.83h1v1h-1zM59.63,226.83h1v1h-1zM72.11,226.83h1v1h-1zM84.59,226.83h1v1h-1zM97.07,226.83h1v1h-1zM122.04,226.83h1v1h-1zM134.52,226.83h1v1h-1zM147.00,226.83h1v1h-1zM159.48,226.83h1v1h-1zM184.45,226.83h1v1h-1zM196.93,226.83h1v1h-1zM209.41,226.83h1v1h-1zM221.89,226.83h1v1h-1zM246.86,226.83h1v1h-1zM259.34,226.83h1v1h-1zM271.82,226.83h1v1h-1zM284.30,226.83h1v1h-1zM309.27,226.83h1v1h-1zM321.75,226.83h1v1h-1zM334.23,226.83h1v1h-1zM346.71,226.83h1v1h-1zM371.68,226.83h1v1h-1zM384.16,226.83h1v1h-1zM396.64,226.83h1v1h-1zM409.12,226.83h1v1h-1zM434.09,226.83h1v1h-1zM446.57,226.83h1v1h-1zM459.05,226.83h1v1h-1zM471.53,226.83h1v1h-1zM496.50,226.83h1v1h-1zM508.98,226.83h1v1h-1zM521.46,226.83h1v1h-1zM533.94,226.83h1v1h-1zM558.91,226.83h1v1h-1zM571.39,226.83h1v1h-1zM583.87,226.83h1v1h-1zM596.35,226.83h1v1h-1zM621.32,226.83h1v1h-1zM633.80,226.83h1v1h-1zM646.28,226.83h1v1h-1zM658.76,226.83h1v1h-1zM683.73,226.83h1v1h-1zM696.21,226.83h1v1h-1zM708.69,226.83h1v1h-1zM721.17,226.83h1v1h-1zM746.14,226.83h1v1h-1zM758.62,226.83h1v1h-1zM771.10,226.83h1v1h-1zM783.58,226.83h1v1h-1zM808.55,226.83h1v1h-1zM821.03,226.83h1v1h-1zM833.51,226.83h1v1h-1zM845.99,226.83h1v1h-1zM870.96,226.83h1v1h-1zM883.44,226.83h1v1h-1zM895.92,226.83h1v1h-1zM908.40,226.83h1v1h-1zM933.37,226.83h1v1h-1zM945.85,226.83h1v1h-1zM958.33,226.83h1v1h-1zM970.81,226.83h1v1h-1zM995.78,226.83h1v1h-1zM1008.26,226.83h1v1h-1zM1020.74,226.83h1v1h-1zM1033.22,226.83h1v1h-1zM1058.19,226.83h1v1h-1zM1070.67,226.83h1v1h-1zM1083.15,226.83h1v1h-1zM1095.63,226.83h1v1h-1zM1120.60,226.83h1v1h-1zM1133.08,226.83h1v1h-1zM1145.56,226.83h1v1h-1zM1158.04,226.83h1v1h-1zM1183.01,226.83h1v1h-1zM1195.49,226.83h1v1h-1zM1207.97,226.83h1v1h-1zM9.70,239.31h1v1h-1zM22.18,239.31h1v1h-1zM34.66,239.31h1v1h-1zM47.15,239.31h1v1h-1zM59.63,239.31h1v1h-1zM72.11,239.31h1v1h-1zM84.59,239.31h1v1h-1zM97.07,239.31h1v1h-1zM109.56,239.31h1v1h-1zM122.04,239.31h1v1h-1zM134.52,239.31h1v1h-1zM147.00,239.31h1v1h-1zM159.48,239.31h1v1h-1zM171.97,239.31h1v1h-1zM184.45,239.31h1v1h-1zM196.93,239.31h1v1h-1zM209.41,239.31h1v1h-1zM221.89,239.31h1v1h-1zM234.38,239.31h1v1h-1zM246.86,239.31h1v1h-1zM259.34,239.31h1v1h-1zM271.82,239.31h1v1h-1zM284.30,239.31h1v1h-1zM296.79,239.31h1v1h-1zM309.27,239.31h1v1h-1zM321.75,239.31h1v1h-1zM334.23,239.31h1v1h-1zM346.71,239.31h1v1h-1zM359.20,239.31h1v1h-1zM371.68,239.31h1v1h-1zM384.16,239.31h1v1h-1zM396.64,239.31h1v1h-1zM409.12,239.31h1v1h-1zM421.61,239.31h1v1h-1zM434.09,239.31h1v1h-1zM446.57,239.31h1v1h-1zM459.05,239.31h1v1h-1zM471.53,239.31h1v1h-1zM484.02,239.31h1v1h-1zM496.50,239.31h1v1h-1zM508.98,239.31h1v1h-1zM521.46,239.31h1v1h-1zM533.94,239.31h1v1h-1zM546.43,239.31h1v1h-1zM558.91,239.31h1v1h-1zM571.39,239.31h1v1h-1zM583.87,239.31h1v1h-1zM596.35,239.31h1v1h-1zM608.84,239.31h1v1h-1zM621.32,239.31h1v1h-1zM633.80,239.31h1v1h-1zM646.28,239.31h1v1h-1zM658.76,239.31h1v1h-1zM671.25,239.31h1v1h-1zM683.73,239.31h1v1h-1zM696.21,239.31h1v1h-1zM708.69,239.31h1v1h-1zM721.17,239.31h1v1h-1zM733.66,239.31h1v1h-1zM746.14,239.31h1v1h-1zM758.62,239.31h1v1h-1zM771.10,239.31h1v1h-1zM783.58,239.31h1v1h-1zM796.07,239.31h1v1h-1zM808.55,239.31h1v1h-1zM821.03,239.31h1v1h-1zM833.51,239.31h1v1h-1zM845.99,239.31h1v1h-1zM858.48,239.31h1v1h-1zM870.96,239.31h1v1h-1zM883.44,239.31h1v1h-1zM895.92,239.31h1v1h-1zM908.40,239.31h1v1h-1zM920.89,239.31h1v1h-1zM933.37,239.31h1v1h-1zM945.85,239.31h1v1h-1zM958.33,239.31h1v1h-1zM970.81,239.31h1v1h-1zM983.30,239.31h1v1h-1zM995.78,239.31h1v1h-1zM1008.26,239.31h1v1h-1zM1020.74,239.31h1v1h-1zM1033.22,239.31h1v1h-1zM1045.71,239.31h1v1h-1zM1058.19,239.31h1v1h-1zM1070.67,239.31h1v1h-1zM1083.15,239.31h1v1h-1zM1095.63,239.31h1v1h-1zM1108.12,239.31h1v1h-1zM1120.60,239.31h1v1h-1zM1133.08,239.31h1v1h-1zM1145.56,239.31h1v1h-1zM1158.04,239.31h1v1h-1zM1170.53,239.31h1v1h-1zM1183.01,239.31h1v1h-1zM1195.49,239.31h1v1h-1zM1207.97,239.31h1v1h-1zM9.70,251.79h1v1h-1zM22.18,251.79h1v1h-1zM34.66,251.79h1v1h-1zM47.15,251.79h1v1h-1zM59.63,251.79h1v1h-1zM72.11,251.79h1v1h-1zM84.59,251.79h1v1h-1zM97.07,251.79h1v1h-1zM109.56,251.79h1v1h-1zM122.04,251.79h1v1h-1zM134.52,251.79h1v1h-1zM147.00,251.79h1v1h-1zM159.48,251.79h1v1h-1zM171.97,251.79h1v1h-1zM184.45,251.79h1v1h-1zM196.93,251.79h1v1h-1zM209.41,251.79h1v1h-1zM221.89,251.79h1v1h-1zM234.38,251.79h1v1h-1zM246.86,251.79h1v1h-1zM259.34,251.79h1v1h-1zM271.82,251.79h1v1h-1zM284.30,251.79h1v1h-1zM296.79,251.79h1v1h-1zM309.27,251.79h1v1h-1zM321.75,251.79h1v1h-1zM334.23,251.79h1v1h-1zM346.71,251.79h1v1h-1zM359.20,251.79h1v1h-1zM371.68,251.79h1v1h-1zM384.16,251.79h1v1h-1zM396.64,251.79h1v1h-1zM409.12,251.79h1v1h-1zM421.61,251.79h1v1h-1zM434.09,251.79h1v1h-1zM446.57,251.79h1v1h-1zM459.05,251.79h1v1h-1zM471.53,251.79h1v1h-1zM484.02,251.79h1v1h-1zM496.50,251.79h1v1h-1zM508.98,251.79h1v1h-1zM521.46,251.79h1v1h-1zM533.94,251.79h1v1h-1zM546.43,251.79h1v1h-1zM558.91,251.79h1v1h-1zM571.39,251.79h1v1h-1zM583.87,251.79h1v1h-1zM596.35,251.79h1v1h-1zM608.84,251.79h1v1h-1zM621.32,251.79h1v1h-1zM633.80,251.79h1v1h-1zM646.28,251.79h1v1h-1zM658.76,251.79h1v1h-1zM671.25,251.79h1v1h-1zM683.73,251.79h1v1h-1zM696.21,251.79h1v1h-1zM708.69,251.79h1v1h-1zM721.17,251.79h1v1h-1zM733.66,251.79h1v1h-1zM746.14,251.79h1v1h-1zM758.62,251.79h1v1h-1zM771.10,251.79h1v1h-1zM783.58,251.79h1v1h-1zM796.07,251.79h1v1h-1zM808.55,251.79h1v1h-1zM821.03,251.79h1v1h-1zM833.51,251.79h1v1h-1zM845.99,251.79h1v1h-1zM858.48,251.79h1v1h-1zM870.96,251.79h1v1h-1zM883.44,251.79h1v1h-1zM895.92,251.79h1v1h-1zM908.40,251.79h1v1h-1zM920.89,251.79h1v1h-1zM933.37,251.79h1v1h-1zM945.85,251.79h1v1h-1zM958.33,251.79h1v1h-1zM970.81,251.79h1v1h-1zM983.30,251.79h1v1h-1zM995.78,251.79h1v1h-1zM1008.26,251.79h1v1h-1zM1020.74,251.79h1v1h-1zM1033.22,251.79h1v1h-1zM1045.71,251.79h1v1h-1zM1058.19,251.79h1v1h-1zM1070.67,251.79h1v1h-1zM1083.15,251.79h1v1h-1zM1095.63,251.79h1v1h-1zM1108.12,251.79h1v1h-1zM1120.60,251.79h1v1h-1zM1133.08,251.79h1v1h-1zM1145.56,251.79h1v1h-1zM1158.04,251.79h1v1h-1zM1170.53,251.79h1v1h-1zM1183.01,251.79h1v1h-1zM1195.49,251.79h1v1h-1zM1207.97,251.79h1v1h-1zM9.70,264.27h1v1h-1zM22.18,264.27h1v1h-1zM34.66,264.27h1v1h-1zM47.15,264.27h1v1h-1zM59.63,264.27h1v1h-1zM72.11,264.27h1v1h-1zM84.59,264.27h1v1h-1zM97.07,264.27h1v1h-1zM109.56,264.27h1v1h-1zM122.04,264.27h1v1h-1zM134.52,264.27h1v1h-1zM147.00,264.27h1v1h-1zM159.48,264.27h1v1h-1zM171.97,264.27h1v1h-1zM184.45,264.27h1v1h-1zM196.93,264.27h1v1h-1zM209.41,264.27h1v1h-1zM221.89,264.27h1v1h-1zM234.38,264.27h1v1h-1zM246.86,264.27h1v1h-1zM259.34,264.27h1v1h-1zM271.82,264.27h1v1h-1zM284.30,264.27h1v1h-1zM296.79,264.27h1v1h-1zM309.27,264.27h1v1h-1zM321.75,264.27h1v1h-1zM334.23,264.27h1v1h-1zM346.71,264.27h1v1h-1zM359.20,264.27h1v1h-1zM371.68,264.27h1v1h-1zM384.16,264.27h1v1h-1zM396.64,264.27h1v1h-1zM409.12,264.27h1v1h-1zM421.61,264.27h1v1h-1zM434.09,264.27h1v1h-1zM446.57,264.27h1v1h-1zM459.05,264.27h1v1h-1zM471.53,264.27h1v1h-1zM484.02,264.27h1v1h-1zM496.50,264.27h1v1h-1zM508.98,264.27h1v1h-1zM521.46,264.27h1v1h-1zM533.94,264.27h1v1h-1zM546.43,264.27h1v1h-1zM558.91,264.27h1v1h-1zM571.39,264.27h1v1h-1zM583.87,264.27h1v1h-1zM596.35,264.27h1v1h-1zM608.84,264.27h1v1h-1zM621.32,264.27h1v1h-1zM633.80,264.27h1v1h-1zM646.28,264.27h1v1h-1zM658.76,264.27h1v1h-1zM671.25,264.27h1v1h-1zM683.73,264.27h1v1h-1zM696.21,264.27h1v1h-1zM708.69,264.27h1v1h-1zM721.17,264.27h1v1h-1zM733.66,264.27h1v1h-1zM746.14,264.27h1v1h-1zM758.62,264.27h1v1h-1zM771.10,264.27h1v1h-1zM783.58,264.27h1v1h-1zM796.07,264.27h1v1h-1zM808.55,264.27h1v1h-1zM821.03,264.27h1v1h-1zM833.51,264.27h1v1h-1zM845.99,264.27h1v1h-1zM858.48,264.27h1v1h-1zM870.96,264.27h1v1h-1zM883.44,264.27h1v1h-1zM895.92,264.27h1v1h-1zM908.40,264.27h1v1h-1zM920.89,264.27h1v1h-1zM933.37,264.27h1v1h-1zM945.85,264.27h1v1h-1zM958.33,264.27h1v1h-1zM970.81,264.27h1v1h-1zM983.30,264.27h1v1h-1zM995.78,264.27h1v1h-1zM1008.26,264.27h1v1h-1zM1020.74,264.27h1v1h-1zM1033.22,264.27h1v1h-1zM1045.71,264.27h1v1h-1zM1058.19,264.27h1v1h-1zM1070.67,264.27h1v1h-1zM1083.15,264.27h1v1h-1zM1095.63,264.27h1v1h-1zM1108.12,264.27h1v1h-1zM1120.60,264.27h1v1h-1zM1133.08,264.27h1v1h-1zM1145.56,264.27h1v1h-1zM1158.04,264.27h1v1h-1zM1170.53,264.27h1v1h-1zM1183.01,264.27h1v1h-1zM1195.49,264.27h1v1h-1zM1207.97,264.27h1v1h-1zM9.70,276.75h1v1h-1zM22.18,276.75h1v1h-1zM34.66,276.75h1v1h-1zM47.15,276.75h1v1h-1zM59.63,276.75h1v1h-1zM72.11,276.75h1v1h-1zM84.59,276.75h1v1h-1zM97.07,276.75h1v1h-1zM109.56,276.75h1v1h-1zM122.04,276.75h1v1h-1zM134.52,276.75h1v1h-1zM147.00,276.75h1v1h-1zM159.48,276.75h1v1h-1zM171.97,276.75h1v1h-1zM184.45,276.75h1v1h-1zM196.93,276.75h1v1h-1zM209.41,276.75h1v1h-1zM221.89,276.75h1v1h-1zM234.38,276.75h1v1h-1zM246.86,276.75h1v1h-1zM259.34,276.75h1v1h-1zM271.82,276.75h1v1h-1zM284.30,276.75h1v1h-1zM296.79,276.75h1v1h-1zM309.27,276.75h1v1h-1zM321.75,276.75h1v1h-1zM334.23,276.75h1v1h-1zM346.71,276.75h1v1h-1zM359.20,276.75h1v1h-1zM371.68,276.75h1v1h-1zM384.16,276.75h1v1h-1zM396.64,276.75h1v1h-1zM409.12,276.75h1v1h-1zM421.61,276.75h1v1h-1zM434.09,276.75h1v1h-1zM446.57,276.75h1v1h-1zM459.05,276.75h1v1h-1zM471.53,276.75h1v1h-1zM484.02,276.75h1v1h-1zM496.50,276.75h1v1h-1zM508.98,276.75h1v1h-1zM521.46,276.75h1v1h-1zM533.94,276.75h1v1h-1zM546.43,276.75h1v1h-1zM558.91,276.75h1v1h-1zM571.39,276.75h1v1h-1zM583.87,276.75h1v1h-1zM596.35,276.75h1v1h-1zM608.84,276.75h1v1h-1zM621.32,276.75h1v1h-1zM633.80,276.75h1v1h-1zM646.28,276.75h1v1h-1zM658.76,276.75h1v1h-1zM671.25,276.75h1v1h-1zM683.73,276.75h1v1h-1zM696.21,276.75h1v1h-1zM708.69,276.75h1v1h-1zM721.17,276.75h1v1h-1zM733.66,276.75h1v1h-1zM746.14,276.75h1v1h-1zM758.62,276.75h1v1h-1zM771.10,276.75h1v1h-1zM783.58,276.75h1v1h-1zM796.07,276.75h1v1h-1zM808.55,276.75h1v1h-1zM821.03,276.75h1v1h-1zM833.51,276.75h1v1h-1zM845.99,276.75h1v1h-1zM858.48,276.75h1v1h-1zM870.96,276.75h1v1h-1zM883.44,276.75h1v1h-1zM895.92,276.75h1v1h-1zM908.40,276.75h1v1h-1zM920.89,276.75h1v1h-1zM933.37,276.75h1v1h-1zM945.85,276.75h1v1h-1zM958.33,276.75h1v1h-1zM970.81,276.75h1v1h-1zM983.30,276.75h1v1h-1zM995.78,276.75h1v1h-1zM1008.26,276.75h1v1h-1zM1020.74,276.75h1v1h-1zM1033.22,276.75h1v1h-1zM1045.71,276.75h1v1h-1zM1058.19,276.75h1v1h-1zM1070.67,276.75h1v1h-1zM1083.15,276.75h1v1h-1zM1095.63,276.75h1v1h-1zM1108.12,276.75h1v1h-1zM1120.60,276.75h1v1h-1zM1133.08,276.75h1v1h-1zM1145.56,276.75h1v1h-1zM1158.04,276.75h1v1h-1zM1170.53,276.75h1v1h-1zM1183.01,276.75h1v1h-1zM1195.49,276.75h1v1h-1zM1207.97,276.75h1v1h-1zM9.70,289.24h1v1h-1zM22.18,289.24h1v1h-1zM34.66,289.24h1v1h-1zM59.63,289.24h1v1h-1zM72.11,289.24h1v1h-1zM84.59,289.24h1v1h-1zM97.07,289.24h1v1h-1zM122.04,289.24h1v1h-1zM134.52,289.24h1v1h-1zM147.00,289.24h1v1h-1zM159.48,289.24h1v1h-1zM184.45,289.24h1v1h-1zM196.93,289.24h1v1h-1zM209.41,289.24h1v1h-1zM221.89,289.24h1v1h-1zM246.86,289.24h1v1h-1zM259.34,289.24h1v1h-1zM271.82,289.24h1v1h-1zM284.30,289.24h1v1h-1zM309.27,289.24h1v1h-1zM321.75,289.24h1v1h-1zM334.23,289.24h1v1h-1zM346.71,289.24h1v1h-1zM371.68,289.24h1v1h-1zM384.16,289.24h1v1h-1zM396.64,289.24h1v1h-1zM409.12,289.24h1v1h-1zM434.09,289.24h1v1h-1zM446.57,289.24h1v1h-1zM459.05,289.24h1v1h-1zM471.53,289.24h1v1h-1zM496.50,289.24h1v1h-1zM508.98,289.24h1v1h-1zM521.46,289.24h1v1h-1zM533.94,289.24h1v1h-1zM558.91,289.24h1v1h-1zM571.39,289.24h1v1h-1zM583.87,289.24h1v1h-1zM596.35,289.24h1v1h-1zM621.32,289.24h1v1h-1zM633.80,289.24h1v1h-1zM646.28,289.24h1v1h-1zM658.76,289.24h1v1h-1zM683.73,289.24h1v1h-1zM696.21,289.24h1v1h-1zM708.69,289.24h1v1h-1zM721.17,289.24h1v1h-1zM746.14,289.24h1v1h-1zM758.62,289.24h1v1h-1zM771.10,289.24h1v1h-1zM783.58,289.24h1v1h-1zM808.55,289.24h1v1h-1zM821.03,289.24h1v1h-1zM833.51,289.24h1v1h-1zM845.99,289.24h1v1h-1zM870.96,289.24h1v1h-1zM883.44,289.24h1v1h-1zM895.92,289.24h1v1h-1zM908.40,289.24h1v1h-1zM933.37,289.24h1v1h-1zM945.85,289.24h1v1h-1zM958.33,289.24h1v1h-1zM970.81,289.24h1v1h-1zM995.78,289.24h1v1h-1zM1008.26,289.24h1v1h-1zM1020.74,289.24h1v1h-1zM1033.22,289.24h1v1h-1zM1058.19,289.24h1v1h-1zM1070.67,289.24h1v1h-1zM1083.15,289.24h1v1h-1zM1095.63,289.24h1v1h-1zM1120.60,289.24h1v1h-1zM1133.08,289.24h1v1h-1zM1145.56,289.24h1v1h-1zM1158.04,289.24h1v1h-1zM1183.01,289.24h1v1h-1zM1195.49,289.24h1v1h-1zM1207.97,289.24h1v1h-1zM9.70,301.72h1v1h-1zM22.18,301.72h1v1h-1zM34.66,301.72h1v1h-1zM47.15,301.72h1v1h-1zM59.63,301.72h1v1h-1zM72.11,301.72h1v1h-1zM84.59,301.72h1v1h-1zM97.07,301.72h1v1h-1zM109.56,301.72h1v1h-1zM122.04,301.72h1v1h-1zM134.52,301.72h1v1h-1zM147.00,301.72h1v1h-1zM159.48,301.72h1v1h-1zM171.97,301.72h1v1h-1zM184.45,301.72h1v1h-1zM196.93,301.72h1v1h-1zM209.41,301.72h1v1h-1zM221.89,301.72h1v1h-1zM234.38,301.72h1v1h-1zM246.86,301.72h1v1h-1zM259.34,301.72h1v1h-1zM271.82,301.72h1v1h-1zM284.30,301.72h1v1h-1zM296.79,301.72h1v1h-1zM309.27,301.72h1v1h-1zM321.75,301.72h1v1h-1zM334.23,301.72h1v1h-1zM346.71,301.72h1v1h-1zM359.20,301.72h1v1h-1zM371.68,301.72h1v1h-1zM384.16,301.72h1v1h-1zM396.64,301.72h1v1h-1zM409.12,301.72h1v1h-1zM421.61,301.72h1v1h-1zM434.09,301.72h1v1h-1zM446.57,301.72h1v1h-1zM459.05,301.72h1v1h-1zM471.53,301.72h1v1h-1zM484.02,301.72h1v1h-1zM496.50,301.72h1v1h-1zM508.98,301.72h1v1h-1zM521.46,301.72h1v1h-1zM533.94,301.72h1v1h-1zM546.43,301.72h1v1h-1zM558.91,301.72h1v1h-1zM571.39,301.72h1v1h-1zM583.87,301.72h1v1h-1zM596.35,301.72h1v1h-1zM608.84,301.72h1v1h-1zM621.32,301.72h1v1h-1zM633.80,301.72h1v1h-1zM646.28,301.72h1v1h-1zM658.76,301.72h1v1h-1zM671.25,301.72h1v1h-1zM683.73,301.72h1v1h-1zM696.21,301.72h1v1h-1zM708.69,301.72h1v1h-1zM721.17,301.72h1v1h-1zM733.66,301.72h1v1h-1zM746.14,301.72h1v1h-1zM758.62,301.72h1v1h-1zM771.10,301.72h1v1h-1zM783.58,301.72h1v1h-1zM796.07,301.72h1v1h-1zM808.55,301.72h1v1h-1zM821.03,301.72h1v1h-1zM833.51,301.72h1v1h-1zM845.99,301.72h1v1h-1zM858.48,301.72h1v1h-1zM870.96,301.72h1v1h-1zM883.44,301.72h1v1h-1zM895.92,301.72h1v1h-1zM908.40,301.72h1v1h-1zM920.89,301.72h1v1h-1zM933.37,301.72h1v1h-1zM945.85,301.72h1v1h-1zM958.33,301.72h1v1h-1zM970.81,301.72h1v1h-1zM983.30,301.72h1v1h-1zM995.78,301.72h1v1h-1zM1008.26,301.72h1v1h-1zM1020.74,301.72h1v1h-1zM1033.22,301.72h1v1h-1zM1045.71,301.72h1v1h-1zM1058.19,301.72h1v1h-1zM1070.67,301.72h1v1h-1zM1083.15,301.72h1v1h-1zM1095.63,301.72h1v1h-1zM1108.12,301.72h1v1h-1zM1120.60,301.72h1v1h-1zM1133.08,301.72h1v1h-1zM1145.56,301.72h1v1h-1zM1158.04,301.72h1v1h-1zM1170.53,301.72h1v1h-1zM1183.01,301.72h1v1h-1zM1195.49,301.72h1v1h-1zM1207.97,301.72h1v1h-1zM9.70,314.20h1v1h-1zM22.18,314.20h1v1h-1zM34.66,314.20h1v1h-1zM47.15,314.20h1v1h-1zM59.63,314.20h1v1h-1zM72.11,314.20h1v1h-1zM84.59,314.20h1v1h-1zM97.07,314.20h1v1h-1zM109.56,314.20h1v1h-1zM122.04,314.20h1v1h-1zM134.52,314.20h1v1h-1zM147.00,314.20h1v1h-1zM159.48,314.20h1v1h-1zM171.97,314.20h1v1h-1zM184.45,314.20h1v1h-1zM196.93,314.20h1v1h-1zM209.41,314.20h1v1h-1zM221.89,314.20h1v1h-1zM234.38,314.20h1v1h-1zM246.86,314.20h1v1h-1zM259.34,314.20h1v1h-1zM271.82,314.20h1v1h-1zM284.30,314.20h1v1h-1zM296.79,314.20h1v1h-1zM309.27,314.20h1v1h-1zM321.75,314.20h1v1h-1zM334.23,314.20h1v1h-1zM346.71,314.20h1v1h-1zM359.20,314.20h1v1h-1zM371.68,314.20h1v1h-1zM384.16,314.20h1v1h-1zM396.64,314.20h1v1h-1zM409.12,314.20h1v1h-1zM421.61,314.20h1v1h-1zM434.09,314.20h1v1h-1zM446.57,314.20h1v1h-1zM459.05,314.20h1v1h-1zM471.53,314.20h1v1h-1zM484.02,314.20h1v1h-1zM496.50,314.20h1v1h-1zM508.98,314.20h1v1h-1zM521.46,314.20h1v1h-1zM533.94,314.20h1v1h-1zM546.43,314.20h1v1h-1zM558.91,314.20h1v1h-1zM571.39,314.20h1v1h-1zM583.87,314.20h1v1h-1zM596.35,314.20h1v1h-1zM608.84,314.20h1v1h-1zM621.32,314.20h1v1h-1zM633.80,314.20h1v1h-1zM646.28,314.20h1v1h-1zM658.76,314.20h1v1h-1zM671.25,314.20h1v1h-1zM683.73,314.20h1v1h-1zM696.21,314.20h1v1h-1zM708.69,314.20h1v1h-1zM721.17,314.20h1v1h-1zM733.66,314.20h1v1h-1zM746.14,314.20h1v1h-1zM758.62,314.20h1v1h-1zM771.10,314.20h1v1h-1zM783.58,314.20h1v1h-1zM796.07,314.20h1v1h-1zM808.55,314.20h1v1h-1zM821.03,314.20h1v1h-1zM833.51,314.20h1v1h-1zM845.99,314.20h1v1h-1zM858.48,314.20h1v1h-1zM870.96,314.20h1v1h-1zM883.44,314.20h1v1h-1zM895.92,314.20h1v1h-1zM908.40,314.20h1v1h-1zM920.89,314.20h1v1h-1zM933.37,314.20h1v1h-1zM945.85,314.20h1v1h-1zM958.33,314.20h1v1h-1zM970.81,314.20h1v1h-1zM983.30,314.20h1v1h-1zM995.78,314.20h1v1h-1zM1008.26,314.20h1v1h-1zM1020.74,314.20h1v1h-1zM1033.22,314.20h1v1h-1zM1045.71,314.20h1v1h-1zM1058.19,314.20h1v1h-1zM1070.67,314.20h1v1h-1zM1083.15,314.20h1v1h-1zM1095.63,314.20h1v1h-1zM1108.12,314.20h1v1h-1zM1120.60,314.20h1v1h-1zM1133.08,314.20h1v1h-1zM1145.56,314.20h1v1h-1zM1158.04,314.20h1v1h-1zM1170.53,314.20h1v1h-1zM1183.01,314.20h1v1h-1zM1195.49,314.20h1v1h-1zM1207.97,314.20h1v1h-1zM9.70,326.68h1v1h-1zM22.18,326.68h1v1h-1zM34.66,326.68h1v1h-1zM47.15,326.68h1v1h-1zM59.63,326.68h1v1h-1zM72.11,326.68h1v1h-1zM84.59,326.68h1v1h-1zM97.07,326.68h1v1h-1zM109.56,326.68h1v1h-1zM122.04,326.68h1v1h-1zM134.52,326.68h1v1h-1zM147.00,326.68h1v1h-1zM159.48,326.68h1v1h-1zM171.97,326.68h1v1h-1zM184.45,326.68h1v1h-1zM196.93,326.68h1v1h-1zM209.41,326.68h1v1h-1zM221.89,326.68h1v1h-1zM234.38,326.68h1v1h-1zM246.86,326.68h1v1h-1zM259.34,326.68h1v1h-1zM271.82,326.68h1v1h-1zM284.30,326.68h1v1h-1zM296.79,326.68h1v1h-1zM309.27,326.68h1v1h-1zM321.75,326.68h1v1h-1zM334.23,326.68h1v1h-1zM346.71,326.68h1v1h-1zM359.20,326.68h1v1h-1zM371.68,326.68h1v1h-1zM384.16,326.68h1v1h-1zM396.64,326.68h1v1h-1zM409.12,326.68h1v1h-1zM421.61,326.68h1v1h-1zM434.09,326.68h1v1h-1zM446.57,326.68h1v1h-1zM459.05,326.68h1v1h-1zM471.53,326.68h1v1h-1zM484.02,326.68h1v1h-1zM496.50,326.68h1v1h-1zM508.98,326.68h1v1h-1zM521.46,326.68h1v1h-1zM533.94,326.68h1v1h-1zM546.43,326.68h1v1h-1zM558.91,326.68h1v1h-1zM571.39,326.68h1v1h-1zM583.87,326.68h1v1h-1zM596.35,326.68h1v1h-1zM608.84,326.68h1v1h-1zM621.32,326.68h1v1h-1zM633.80,326.68h1v1h-1zM646.28,326.68h1v1h-1zM658.76,326.68h1v1h-1zM671.25,326.68h1v1h-1zM683.73,326.68h1v1h-1zM696.21,326.68h1v1h-1zM708.69,326.68h1v1h-1zM721.17,326.68h1v1h-1zM733.66,326.68h1v1h-1zM746.14,326.68h1v1h-1zM758.62,326.68h1v1h-1zM771.10,326.68h1v1h-1zM783.58,326.68h1v1h-1zM796.07,326.68h1v1h-1zM808.55,326.68h1v1h-1zM821.03,326.68h1v1h-1zM833.51,326.68h1v1h-1zM845.99,326.68h1v1h-1zM858.48,326.68h1v1h-1zM870.96,326.68h1v1h-1zM883.44,326.68h1v1h-1zM895.92,326.68h1v1h-1zM908.40,326.68h1v1h-1zM920.89,326.68h1v1h-1zM933.37,326.68h1v1h-1zM945.85,326.68h1v1h-1zM958.33,326.68h1v1h-1zM970.81,326.68h1v1h-1zM983.30,326.68h1v1h-1zM995.78,326.68h1v1h-1zM1008.26,326.68h1v1h-1zM1020.74,326.68h1v1h-1zM1033.22,326.68h1v1h-1zM1045.71,326.68h1v1h-1zM1058.19,326.68h1v1h-1zM1070.67,326.68h1v1h-1zM1083.15,326.68h1v1h-1zM1095.63,326.68h1v1h-1zM1108.12,326.68h1v1h-1zM1120.60,326.68h1v1h-1zM1133.08,326.68h1v1h-1zM1145.56,326.68h1v1h-1zM1158.04,326.68h1v1h-1zM1170.53,326.68h1v1h-1zM1183.01,326.68h1v1h-1zM1195.49,326.68h1v1h-1zM1207.97,326.68h1v1h-1zM9.70,339.16h1v1h-1zM22.18,339.16h1v1h-1zM34.66,339.16h1v1h-1zM47.15,339.16h1v1h-1zM59.63,339.16h1v1h-1zM72.11,339.16h1v1h-1zM84.59,339.16h1v1h-1zM97.07,339.16h1v1h-1zM109.56,339.16h1v1h-1zM122.04,339.16h1v1h-1zM134.52,339.16h1v1h-1zM147.00,339.16h1v1h-1zM159.48,339.16h1v1h-1zM171.97,339.16h1v1h-1zM184.45,339.16h1v1h-1zM196.93,339.16h1v1h-1zM209.41,339.16h1v1h-1zM221.89,339.16h1v1h-1zM234.38,339.16h1v1h-1zM246.86,339.16h1v1h-1zM259.34,339.16h1v1h-1zM271.82,339.16h1v1h-1zM284.30,339.16h1v1h-1zM296.79,339.16h1v1h-1zM309.27,339.16h1v1h-1zM321.75,339.16h1v1h-1zM334.23,339.16h1v1h-1zM346.71,339.16h1v1h-1zM359.20,339.16h1v1h-1zM371.68,339.16h1v1h-1zM384.16,339.16h1v1h-1zM396.64,339.16h1v1h-1zM409.12,339.16h1v1h-1zM421.61,339.16h1v1h-1zM434.09,339.16h1v1h-1zM446.57,339.16h1v1h-1zM459.05,339.16h1v1h-1zM471.53,339.16h1v1h-1zM484.02,339.16h1v1h-1zM496.50,339.16h1v1h-1zM508.98,339.16h1v1h-1zM521.46,339.16h1v1h-1zM533.94,339.16h1v1h-1zM546.43,339.16h1v1h-1zM558.91,339.16h1v1h-1zM571.39,339.16h1v1h-1zM583.87,339.16h1v1h-1zM596.35,339.16h1v1h-1zM608.84,339.16h1v1h-1zM621.32,339.16h1v1h-1zM633.80,339.16h1v1h-1zM646.28,339.16h1v1h-1zM658.76,339.16h1v1h-1zM671.25,339.16h1v1h-1zM683.73,339.16h1v1h-1zM696.21,339.16h1v1h-1zM708.69,339.16h1v1h-1zM721.17,339.16h1v1h-1zM733.66,339.16h1v1h-1zM746.14,339.16h1v1h-1zM758.62,339.16h1v1h-1zM771.10,339.16h1v1h-1zM783.58,339.16h1v1h-1zM796.07,339.16h1v1h-1zM808.55,339.16h1v1h-1zM821.03,339.16h1v1h-1zM833.51,339.16h1v1h-1zM845.99,339.16h1v1h-1zM858.48,339.16h1v1h-1zM870.96,339.16h1v1h-1zM883.44,339.16h1v1h-1zM895.92,339.16h1v1h-1zM908.40,339.16h1v1h-1zM920.89,339.16h1v1h-1zM933.37,339.16h1v1h-1zM945.85,339.16h1v1h-1zM958.33,339.16h1v1h-1zM970.81,339.16h1v1h-1zM983.30,339.16h1v1h-1zM995.78,339.16h1v1h-1zM1008.26,339.16h1v1h-1zM1020.74,339.16h1v1h-1zM1033.22,339.16h1v1h-1zM1045.71,339.16h1v1h-1zM1058.19,339.16h1v1h-1zM1070.67,339.16h1v1h-1zM1083.15,339.16h1v1h-1zM1095.63,339.16h1v1h-1zM1108.12,339.16h1v1h-1zM1120.60,339.16h1v1h-1zM1133.08,339.16h1v1h-1zM1145.56,339.16h1v1h-1zM1158.04,339.16h1v1h-1zM1170.53,339.16h1v1h-1zM1183.01,339.16h1v1h-1zM1195.49,339.16h1v1h-1zM1207.97,339.16h1v1h-1zM9.70,351.65h1v1h-1zM22.18,351.65h1v1h-1zM34.66,351.65h1v1h-1zM59.63,351.65h1v1h-1zM72.11,351.65h1v1h-1zM84.59,351.65h1v1h-1zM97.07,351.65h1v1h-1zM122.04,351.65h1v1h-1zM134.52,351.65h1v1h-1zM147.00,351.65h1v1h-1zM159.48,351.65h1v1h-1zM184.45,351.65h1v1h-1zM196.93,351.65h1v1h-1zM209.41,351.65h1v1h-1zM221.89,351.65h1v1h-1zM246.86,351.65h1v1h-1zM259.34,351.65h1v1h-1zM271.82,351.65h1v1h-1zM284.30,351.65h1v1h-1zM309.27,351.65h1v1h-1zM321.75,351.65h1v1h-1zM334.23,351.65h1v1h-1zM346.71,351.65h1v1h-1zM371.68,351.65h1v1h-1zM384.16,351.65h1v1h-1zM396.64,351.65h1v1h-1zM409.12,351.65h1v1h-1zM434.09,351.65h1v1h-1zM446.57,351.65h1v1h-1zM459.05,351.65h1v1h-1zM471.53,351.65h1v1h-1zM496.50,351.65h1v1h-1zM508.98,351.65h1v1h-1zM521.46,351.65h1v1h-1zM533.94,351.65h1v1h-1zM558.91,351.65h1v1h-1zM571.39,351.65h1v1h-1zM583.87,351.65h1v1h-1zM596.35,351.65h1v1h-1zM621.32,351.65h1v1h-1zM633.80,351.65h1v1h-1zM646.28,351.65h1v1h-1zM658.76,351.65h1v1h-1zM683.73,351.65h1v1h-1zM696.21,351.65h1v1h-1zM708.69,351.65h1v1h-1zM721.17,351.65h1v1h-1zM746.14,351.65h1v1h-1zM758.62,351.65h1v1h-1zM771.10,351.65h1v1h-1zM783.58,351.65h1v1h-1zM808.55,351.65h1v1h-1zM821.03,351.65h1v1h-1zM833.51,351.65h1v1h-1zM845.99,351.65h1v1h-1zM870.96,351.65h1v1h-1zM883.44,351.65h1v1h-1zM895.92,351.65h1v1h-1zM908.40,351.65h1v1h-1zM933.37,351.65h1v1h-1zM945.85,351.65h1v1h-1zM958.33,351.65h1v1h-1zM970.81,351.65h1v1h-1zM995.78,351.65h1v1h-1zM1008.26,351.65h1v1h-1zM1020.74,351.65h1v1h-1zM1033.22,351.65h1v1h-1zM1058.19,351.65h1v1h-1zM1070.67,351.65h1v1h-1zM1083.15,351.65h1v1h-1zM1095.63,351.65h1v1h-1zM1120.60,351.65h1v1h-1zM1133.08,351.65h1v1h-1zM1145.56,351.65h1v1h-1zM1158.04,351.65h1v1h-1zM1183.01,351.65h1v1h-1zM1195.49,351.65h1v1h-1zM1207.97,351.65h1v1h-1zM9.70,364.13h1v1h-1zM22.18,364.13h1v1h-1zM34.66,364.13h1v1h-1zM47.15,364.13h1v1h-1zM59.63,364.13h1v1h-1zM72.11,364.13h1v1h-1zM84.59,364.13h1v1h-1zM97.07,364.13h1v1h-1zM109.56,364.13h1v1h-1zM122.04,364.13h1v1h-1zM134.52,364.13h1v1h-1zM147.00,364.13h1v1h-1zM159.48,364.13h1v1h-1zM171.97,364.13h1v1h-1zM184.45,364.13h1v1h-1zM196.93,364.13h1v1h-1zM209.41,364.13h1v1h-1zM221.89,364.13h1v1h-1zM234.38,364.13h1v1h-1zM246.86,364.13h1v1h-1zM259.34,364.13h1v1h-1zM271.82,364.13h1v1h-1zM284.30,364.13h1v1h-1zM296.79,364.13h1v1h-1zM309.27,364.13h1v1h-1zM321.75,364.13h1v1h-1zM334.23,364.13h1v1h-1zM346.71,364.13h1v1h-1zM359.20,364.13h1v1h-1zM371.68,364.13h1v1h-1zM384.16,364.13h1v1h-1zM396.64,364.13h1v1h-1zM409.12,364.13h1v1h-1zM421.61,364.13h1v1h-1zM434.09,364.13h1v1h-1zM446.57,364.13h1v1h-1zM459.05,364.13h1v1h-1zM471.53,364.13h1v1h-1zM484.02,364.13h1v1h-1zM496.50,364.13h1v1h-1zM508.98,364.13h1v1h-1zM521.46,364.13h1v1h-1zM533.94,364.13h1v1h-1zM546.43,364.13h1v1h-1zM558.91,364.13h1v1h-1zM571.39,364.13h1v1h-1zM583.87,364.13h1v1h-1zM596.35,364.13h1v1h-1zM608.84,364.13h1v1h-1zM621.32,364.13h1v1h-1zM633.80,364.13h1v1h-1zM646.28,364.13h1v1h-1zM658.76,364.13h1v1h-1zM671.25,364.13h1v1h-1zM683.73,364.13h1v1h-1zM696.21,364.13h1v1h-1zM708.69,364.13h1v1h-1zM721.17,364.13h1v1h-1zM733.66,364.13h1v1h-1zM746.14,364.13h1v1h-1zM758.62,364.13h1v1h-1zM771.10,364.13h1v1h-1zM783.58,364.13h1v1h-1zM796.07,364.13h1v1h-1zM808.55,364.13h1v1h-1zM821.03,364.13h1v1h-1zM833.51,364.13h1v1h-1zM845.99,364.13h1v1h-1zM858.48,364.13h1v1h-1zM870.96,364.13h1v1h-1zM883.44,364.13h1v1h-1zM895.92,364.13h1v1h-1zM908.40,364.13h1v1h-1zM920.89,364.13h1v1h-1zM933.37,364.13h1v1h-1zM945.85,364.13h1v1h-1zM958.33,364.13h1v1h-1zM970.81,364.13h1v1h-1zM983.30,364.13h1v1h-1zM995.78,364.13h1v1h-1zM1008.26,364.13h1v1h-1zM1020.74,364.13h1v1h-1zM1033.22,364.13h1v1h-1zM1045.71,364.13h1v1h-1zM1058.19,364.13h1v1h-1zM1070.67,364.13h1v1h-1zM1083.15,364.13h1v1h-1zM1095.63,364.13h1v1h-1zM1108.12,364.13h1v1h-1zM1120.60,364.13h1v1h-1zM1133.08,364.13h1v1h-1zM1145.56,364.13h1v1h-1zM1158.04,364.13h1v1h-1zM1170.53,364.13h1v1h-1zM1183.01,364.13h1v1h-1zM1195.49,364.13h1v1h-1zM1207.97,364.13h1v1h-1zM9.70,376.61h1v1h-1zM22.18,376.61h1v1h-1zM34.66,376.61h1v1h-1zM47.15,376.61h1v1h-1zM59.63,376.61h1v1h-1zM72.11,376.61h1v1h-1zM84.59,376.61h1v1h-1zM97.07,376.61h1v1h-1zM109.56,376.61h1v1h-1zM122.04,376.61h1v1h-1zM134.52,376.61h1v1h-1zM147.00,376.61h1v1h-1zM159.48,376.61h1v1h-1zM171.97,376.61h1v1h-1zM184.45,376.61h1v1h-1zM196.93,376.61h1v1h-1zM209.41,376.61h1v1h-1zM221.89,376.61h1v1h-1zM234.38,376.61h1v1h-1zM246.86,376.61h1v1h-1zM259.34,376.61h1v1h-1zM271.82,376.61h1v1h-1zM284.30,376.61h1v1h-1zM296.79,376.61h1v1h-1zM309.27,376.61h1v1h-1zM321.75,376.61h1v1h-1zM334.23,376.61h1v1h-1zM346.71,376.61h1v1h-1zM359.20,376.61h1v1h-1zM371.68,376.61h1v1h-1zM384.16,376.61h1v1h-1zM396.64,376.61h1v1h-1zM409.12,376.61h1v1h-1zM421.61,376.61h1v1h-1zM434.09,376.61h1v1h-1zM446.57,376.61h1v1h-1zM459.05,376.61h1v1h-1zM471.53,376.61h1v1h-1zM484.02,376.61h1v1h-1zM496.50,376.61h1v1h-1zM508.98,376.61h1v1h-1zM521.46,376.61h1v1h-1zM533.94,376.61h1v1h-1zM546.43,376.61h1v1h-1zM558.91,376.61h1v1h-1zM571.39,376.61h1v1h-1zM583.87,376.61h1v1h-1zM596.35,376.61h1v1h-1zM608.84,376.61h1v1h-1zM621.32,376.61h1v1h-1zM633.80,376.61h1v1h-1zM646.28,376.61h1v1h-1zM658.76,376.61h1v1h-1zM671.25,376.61h1v1h-1zM683.73,376.61h1v1h-1zM696.21,376.61h1v1h-1zM708.69,376.61h1v1h-1zM721.17,376.61h1v1h-1zM733.66,376.61h1v1h-1zM746.14,376.61h1v1h-1zM758.62,376.61h1v1h-1zM771.10,376.61h1v1h-1zM783.58,376.61h1v1h-1zM796.07,376.61h1v1h-1zM808.55,376.61h1v1h-1zM821.03,376.61h1v1h-1zM833.51,376.61h1v1h-1zM845.99,376.61h1v1h-1zM858.48,376.61h1v1h-1zM870.96,376.61h1v1h-1zM883.44,376.61h1v1h-1zM895.92,376.61h1v1h-1zM908.40,376.61h1v1h-1zM920.89,376.61h1v1h-1zM933.37,376.61h1v1h-1zM945.85,376.61h1v1h-1zM958.33,376.61h1v1h-1zM970.81,376.61h1v1h-1zM983.30,376.61h1v1h-1zM995.78,376.61h1v1h-1zM1008.26,376.61h1v1h-1zM1020.74,376.61h1v1h-1zM1033.22,376.61h1v1h-1zM1045.71,376.61h1v1h-1zM1058.19,376.61h1v1h-1zM1070.67,376.61h1v1h-1zM1083.15,376.61h1v1h-1zM1095.63,376.61h1v1h-1zM1108.12,376.61h1v1h-1zM1120.60,376.61h1v1h-1zM1133.08,376.61h1v1h-1zM1145.56,376.61h1v1h-1zM1158.04,376.61h1v1h-1zM1170.53,376.61h1v1h-1zM1183.01,376.61h1v1h-1zM1195.49,376.61h1v1h-1zM1207.97,376.61h1v1h-1zM9.70,389.09h1v1h-1zM22.18,389.09h1v1h-1zM34.66,389.09h1v1h-1zM47.15,389.09h1v1h-1zM59.63,389.09h1v1h-1zM72.11,389.09h1v1h-1zM84.59,389.09h1v1h-1zM97.07,389.09h1v1h-1zM109.56,389.09h1v1h-1zM122.04,389.09h1v1h-1zM134.52,389.09h1v1h-1zM147.00,389.09h1v1h-1zM159.48,389.09h1v1h-1zM171.97,389.09h1v1h-1zM184.45,389.09h1v1h-1zM196.93,389.09h1v1h-1zM209.41,389.09h1v1h-1zM221.89,389.09h1v1h-1zM234.38,389.09h1v1h-1zM246.86,389.09h1v1h-1zM259.34,389.09h1v1h-1zM271.82,389.09h1v1h-1zM284.30,389.09h1v1h-1zM296.79,389.09h1v1h-1zM309.27,389.09h1v1h-1zM321.75,389.09h1v1h-1zM334.23,389.09h1v1h-1zM346.71,389.09h1v1h-1zM359.20,389.09h1v1h-1zM371.68,389.09h1v1h-1zM384.16,389.09h1v1h-1zM396.64,389.09h1v1h-1zM409.12,389.09h1v1h-1zM421.61,389.09h1v1h-1zM434.09,389.09h1v1h-1zM446.57,389.09h1v1h-1zM459.05,389.09h1v1h-1zM471.53,389.09h1v1h-1zM484.02,389.09h1v1h-1zM496.50,389.09h1v1h-1zM508.98,389.09h1v1h-1zM521.46,389.09h1v1h-1zM533.94,389.09h1v1h-1zM546.43,389.09h1v1h-1zM558.91,389.09h1v1h-1zM571.39,389.09h1v1h-1zM583.87,389.09h1v1h-1zM596.35,389.09h1v1h-1zM608.84,389.09h1v1h-1zM621.32,389.09h1v1h-1zM633.80,389.09h1v1h-1zM646.28,389.09h1v1h-1zM658.76,389.09h1v1h-1zM671.25,389.09h1v1h-1zM683.73,389.09h1v1h-1zM696.21,389.09h1v1h-1zM708.69,389.09h1v1h-1zM721.17,389.09h1v1h-1zM733.66,389.09h1v1h-1zM746.14,389.09h1v1h-1zM758.62,389.09h1v1h-1zM771.10,389.09h1v1h-1zM783.58,389.09h1v1h-1zM796.07,389.09h1v1h-1zM808.55,389.09h1v1h-1zM821.03,389.09h1v1h-1zM833.51,389.09h1v1h-1zM845.99,389.09h1v1h-1zM858.48,389.09h1v1h-1zM870.96,389.09h1v1h-1zM883.44,389.09h1v1h-1zM895.92,389.09h1v1h-1zM908.40,389.09h1v1h-1zM920.89,389.09h1v1h-1zM933.37,389.09h1v1h-1zM945.85,389.09h1v1h-1zM958.33,389.09h1v1h-1zM970.81,389.09h1v1h-1zM983.30,389.09h1v1h-1zM995.78,389.09h1v1h-1zM1008.26,389.09h1v1h-1zM1020.74,389.09h1v1h-1zM1033.22,389.09h1v1h-1zM1045.71,389.09h1v1h-1zM1058.19,389.09h1v1h-1zM1070.67,389.09h1v1h-1zM1083.15,389.09h1v1h-1zM1095.63,389.09h1v1h-1zM1108.12,389.09h1v1h-1zM1120.60,389.09h1v1h-1zM1133.08,389.09h1v1h-1zM1145.56,389.09h1v1h-1zM1158.04,389.09h1v1h-1zM1170.53,389.09h1v1h-1zM1183.01,389.09h1v1h-1zM1195.49,389.09h1v1h-1zM1207.97,389.09h1v1h-1zM9.70,401.57h1v1h-1zM22.18,401.57h1v1h-1zM34.66,401.57h1v1h-1zM47.15,401.57h1v1h-1zM59.63,401.57h1v1h-1zM72.11,401.57h1v1h-1zM84.59,401.57h1v1h-1zM97.07,401.57h1v1h-1zM109.56,401.57h1v1h-1zM122.04,401.57h1v1h-1zM134.52,401.57h1v1h-1zM147.00,401.57h1v1h-1zM159.48,401.57h1v1h-1zM171.97,401.57h1v1h-1zM184.45,401.57h1v1h-1zM196.93,401.57h1v1h-1zM209.41,401.57h1v1h-1zM221.89,401.57h1v1h-1zM234.38,401.57h1v1h-1zM246.86,401.57h1v1h-1zM259.34,401.57h1v1h-1zM271.82,401.57h1v1h-1zM284.30,401.57h1v1h-1zM296.79,401.57h1v1h-1zM309.27,401.57h1v1h-1zM321.75,401.57h1v1h-1zM334.23,401.57h1v1h-1zM346.71,401.57h1v1h-1zM359.20,401.57h1v1h-1zM371.68,401.57h1v1h-1zM384.16,401.57h1v1h-1zM396.64,401.57h1v1h-1zM409.12,401.57h1v1h-1zM421.61,401.57h1v1h-1zM434.09,401.57h1v1h-1zM446.57,401.57h1v1h-1zM459.05,401.57h1v1h-1zM471.53,401.57h1v1h-1zM484.02,401.57h1v1h-1zM496.50,401.57h1v1h-1zM508.98,401.57h1v1h-1zM521.46,401.57h1v1h-1zM533.94,401.57h1v1h-1zM546.43,401.57h1v1h-1zM558.91,401.57h1v1h-1zM571.39,401.57h1v1h-1zM583.87,401.57h1v1h-1zM596.35,401.57h1v1h-1zM608.84,401.57h1v1h-1zM621.32,401.57h1v1h-1zM633.80,401.57h1v1h-1zM646.28,401.57h1v1h-1zM658.76,401.57h1v1h-1zM671.25,401.57h1v1h-1zM683.73,401.57h1v1h-1zM696.21,401.57h1v1h-1zM708.69,401.57h1v1h-1zM721.17,401.57h1v1h-1zM733.66,401.57h1v1h-1zM746.14,401.57h1v1h-1zM758.62,401.57h1v1h-1zM771.10,401.57h1v1h-1zM783.58,401.57h1v1h-1zM796.07,401.57h1v1h-1zM808.55,401.57h1v1h-1zM821.03,401.57h1v1h-1zM833.51,401.57h1v1h-1zM845.99,401.57h1v1h-1zM858.48,401.57h1v1h-1zM870.96,401.57h1v1h-1zM883.44,401.57h1v1h-1zM895.92,401.57h1v1h-1zM908.40,401.57h1v1h-1zM920.89,401.57h1v1h-1zM933.37,401.57h1v1h-1zM945.85,401.57h1v1h-1zM958.33,401.57h1v1h-1zM970.81,401.57h1v1h-1zM983.30,401.57h1v1h-1zM995.78,401.57h1v1h-1zM1008.26,401.57h1v1h-1zM1020.74,401.57h1v1h-1zM1033.22,401.57h1v1h-1zM1045.71,401.57h1v1h-1zM1058.19,401.57h1v1h-1zM1070.67,401.57h1v1h-1zM1083.15,401.57h1v1h-1zM1095.63,401.57h1v1h-1zM1108.12,401.57h1v1h-1zM1120.60,401.57h1v1h-1zM1133.08,401.57h1v1h-1zM1145.56,401.57h1v1h-1zM1158.04,401.57h1v1h-1zM1170.53,401.57h1v1h-1zM1183.01,401.57h1v1h-1zM1195.49,401.57h1v1h-1zM1207.97,401.57h1v1h-1zM9.70,414.06h1v1h-1zM22.18,414.06h1v1h-1zM34.66,414.06h1v1h-1zM59.63,414.06h1v1h-1zM72.11,414.06h1v1h-1zM84.59,414.06h1v1h-1zM97.07,414.06h1v1h-1zM122.04,414.06h1v1h-1zM134.52,414.06h1v1h-1zM147.00,414.06h1v1h-1zM159.48,414.06h1v1h-1zM184.45,414.06h1v1h-1zM196.93,414.06h1v1h-1zM209.41,414.06h1v1h-1zM221.89,414.06h1v1h-1zM246.86,414.06h1v1h-1zM259.34,414.06h1v1h-1zM271.82,414.06h1v1h-1zM284.30,414.06h1v1h-1zM309.27,414.06h1v1h-1zM321.75,414.06h1v1h-1zM334.23,414.06h1v1h-1zM346.71,414.06h1v1h-1zM371.68,414.06h1v1h-1zM384.16,414.06h1v1h-1zM396.64,414.06h1v1h-1zM409.12,414.06h1v1h-1zM434.09,414.06h1v1h-1zM446.57,414.06h1v1h-1zM459.05,414.06h1v1h-1zM471.53,414.06h1v1h-1zM496.50,414.06h1v1h-1zM508.98,414.06h1v1h-1zM521.46,414.06h1v1h-1zM533.94,414.06h1v1h-1zM558.91,414.06h1v1h-1zM571.39,414.06h1v1h-1zM583.87,414.06h1v1h-1zM596.35,414.06h1v1h-1zM621.32,414.06h1v1h-1zM633.80,414.06h1v1h-1zM646.28,414.06h1v1h-1zM658.76,414.06h1v1h-1zM683.73,414.06h1v1h-1zM696.21,414.06h1v1h-1zM708.69,414.06h1v1h-1zM721.17,414.06h1v1h-1zM746.14,414.06h1v1h-1zM758.62,414.06h1v1h-1zM771.10,414.06h1v1h-1zM783.58,414.06h1v1h-1zM808.55,414.06h1v1h-1zM821.03,414.06h1v1h-1zM833.51,414.06h1v1h-1zM845.99,414.06h1v1h-1zM870.96,414.06h1v1h-1zM883.44,414.06h1v1h-1zM895.92,414.06h1v1h-1zM908.40,414.06h1v1h-1zM933.37,414.06h1v1h-1zM945.85,414.06h1v1h-1zM958.33,414.06h1v1h-1zM970.81,414.06h1v1h-1zM995.78,414.06h1v1h-1zM1008.26,414.06h1v1h-1zM1020.74,414.06h1v1h-1zM1033.22,414.06h1v1h-1zM1058.19,414.06h1v1h-1zM1070.67,414.06h1v1h-1zM1083.15,414.06h1v1h-1zM1095.63,414.06h1v1h-1zM1120.60,414.06h1v1h-1zM1133.08,414.06h1v1h-1zM1145.56,414.06h1v1h-1zM1158.04,414.06h1v1h-1zM1183.01,414.06h1v1h-1zM1195.49,414.06h1v1h-1zM1207.97,414.06h1v1h-1zM9.70,426.54h1v1h-1zM22.18,426.54h1v1h-1zM34.66,426.54h1v1h-1zM47.15,426.54h1v1h-1zM59.63,426.54h1v1h-1zM72.11,426.54h1v1h-1zM84.59,426.54h1v1h-1zM97.07,426.54h1v1h-1zM109.56,426.54h1v1h-1zM122.04,426.54h1v1h-1zM134.52,426.54h1v1h-1zM147.00,426.54h1v1h-1zM159.48,426.54h1v1h-1zM171.97,426.54h1v1h-1zM184.45,426.54h1v1h-1zM196.93,426.54h1v1h-1zM209.41,426.54h1v1h-1zM221.89,426.54h1v1h-1zM234.38,426.54h1v1h-1zM246.86,426.54h1v1h-1zM259.34,426.54h1v1h-1zM271.82,426.54h1v1h-1zM284.30,426.54h1v1h-1zM296.79,426.54h1v1h-1zM309.27,426.54h1v1h-1zM321.75,426.54h1v1h-1zM334.23,426.54h1v1h-1zM346.71,426.54h1v1h-1zM359.20,426.54h1v1h-1zM371.68,426.54h1v1h-1zM384.16,426.54h1v1h-1zM396.64,426.54h1v1h-1zM409.12,426.54h1v1h-1zM421.61,426.54h1v1h-1zM434.09,426.54h1v1h-1zM446.57,426.54h1v1h-1zM459.05,426.54h1v1h-1zM471.53,426.54h1v1h-1zM484.02,426.54h1v1h-1zM496.50,426.54h1v1h-1zM508.98,426.54h1v1h-1zM521.46,426.54h1v1h-1zM533.94,426.54h1v1h-1zM546.43,426.54h1v1h-1zM558.91,426.54h1v1h-1zM571.39,426.54h1v1h-1zM583.87,426.54h1v1h-1zM596.35,426.54h1v1h-1zM608.84,426.54h1v1h-1zM621.32,426.54h1v1h-1zM633.80,426.54h1v1h-1zM646.28,426.54h1v1h-1zM658.76,426.54h1v1h-1zM671.25,426.54h1v1h-1zM683.73,426.54h1v1h-1zM696.21,426.54h1v1h-1zM708.69,426.54h1v1h-1zM721.17,426.54h1v1h-1zM733.66,426.54h1v1h-1zM746.14,426.54h1v1h-1zM758.62,426.54h1v1h-1zM771.10,426.54h1v1h-1zM783.58,426.54h1v1h-1zM796.07,426.54h1v1h-1zM808.55,426.54h1v1h-1zM821.03,426.54h1v1h-1zM833.51,426.54h1v1h-1zM845.99,426.54h1v1h-1zM858.48,426.54h1v1h-1zM870.96,426.54h1v1h-1zM883.44,426.54h1v1h-1zM895.92,426.54h1v1h-1zM908.40,426.54h1v1h-1zM920.89,426.54h1v1h-1zM933.37,426.54h1v1h-1zM945.85,426.54h1v1h-1zM958.33,426.54h1v1h-1zM970.81,426.54h1v1h-1zM983.30,426.54h1v1h-1zM995.78,426.54h1v1h-1zM1008.26,426.54h1v1h-1zM1020.74,426.54h1v1h-1zM1033.22,426.54h1v1h-1zM1045.71,426.54h1v1h-1zM1058.19,426.54h1v1h-1zM1070.67,426.54h1v1h-1zM1083.15,426.54h1v1h-1zM1095.63,426.54h1v1h-1zM1108.12,426.54h1v1h-1zM1120.60,426.54h1v1h-1zM1133.08,426.54h1v1h-1zM1145.56,426.54h1v1h-1zM1158.04,426.54h1v1h-1zM1170.53,426.54h1v1h-1zM1183.01,426.54h1v1h-1zM1195.49,426.54h1v1h-1zM1207.97,426.54h1v1h-1zM9.70,439.02h1v1h-1zM22.18,439.02h1v1h-1zM34.66,439.02h1v1h-1zM47.15,439.02h1v1h-1zM59.63,439.02h1v1h-1zM72.11,439.02h1v1h-1zM84.59,439.02h1v1h-1zM97.07,439.02h1v1h-1zM109.56,439.02h1v1h-1zM122.04,439.02h1v1h-1zM134.52,439.02h1v1h-1zM147.00,439.02h1v1h-1zM159.48,439.02h1v1h-1zM171.97,439.02h1v1h-1zM184.45,439.02h1v1h-1zM196.93,439.02h1v1h-1zM209.41,439.02h1v1h-1zM221.89,439.02h1v1h-1zM234.38,439.02h1v1h-1zM246.86,439.02h1v1h-1zM259.34,439.02h1v1h-1zM271.82,439.02h1v1h-1zM284.30,439.02h1v1h-1zM296.79,439.02h1v1h-1zM309.27,439.02h1v1h-1zM321.75,439.02h1v1h-1zM334.23,439.02h1v1h-1zM346.71,439.02h1v1h-1zM359.20,439.02h1v1h-1zM371.68,439.02h1v1h-1zM384.16,439.02h1v1h-1zM396.64,439.02h1v1h-1zM409.12,439.02h1v1h-1zM421.61,439.02h1v1h-1zM434.09,439.02h1v1h-1zM446.57,439.02h1v1h-1zM459.05,439.02h1v1h-1zM471.53,439.02h1v1h-1zM484.02,439.02h1v1h-1zM496.50,439.02h1v1h-1zM508.98,439.02h1v1h-1zM521.46,439.02h1v1h-1zM533.94,439.02h1v1h-1zM546.43,439.02h1v1h-1zM558.91,439.02h1v1h-1zM571.39,439.02h1v1h-1zM583.87,439.02h1v1h-1zM596.35,439.02h1v1h-1zM608.84,439.02h1v1h-1zM621.32,439.02h1v1h-1zM633.80,439.02h1v1h-1zM646.28,439.02h1v1h-1zM658.76,439.02h1v1h-1zM671.25,439.02h1v1h-1zM683.73,439.02h1v1h-1zM696.21,439.02h1v1h-1zM708.69,439.02h1v1h-1zM721.17,439.02h1v1h-1zM733.66,439.02h1v1h-1zM746.14,439.02h1v1h-1zM758.62,439.02h1v1h-1zM771.10,439.02h1v1h-1zM783.58,439.02h1v1h-1zM796.07,439.02h1v1h-1zM808.55,439.02h1v1h-1zM821.03,439.02h1v1h-1zM833.51,439.02h1v1h-1zM845.99,439.02h1v1h-1zM858.48,439.02h1v1h-1zM870.96,439.02h1v1h-1zM883.44,439.02h1v1h-1zM895.92,439.02h1v1h-1zM908.40,439.02h1v1h-1zM920.89,439.02h1v1h-1zM933.37,439.02h1v1h-1zM945.85,439.02h1v1h-1zM958.33,439.02h1v1h-1zM970.81,439.02h1v1h-1zM983.30,439.02h1v1h-1zM995.78,439.02h1v1h-1zM1008.26,439.02h1v1h-1zM1020.74,439.02h1v1h-1zM1033.22,439.02h1v1h-1zM1045.71,439.02h1v1h-1zM1058.19,439.02h1v1h-1zM1070.67,439.02h1v1h-1zM1083.15,439.02h1v1h-1zM1095.63,439.02h1v1h-1zM1108.12,439.02h1v1h-1zM1120.60,439.02h1v1h-1zM1133.08,439.02h1v1h-1zM1145.56,439.02h1v1h-1zM1158.04,439.02h1v1h-1zM1170.53,439.02h1v1h-1zM1183.01,439.02h1v1h-1zM1195.49,439.02h1v1h-1zM1207.97,439.02h1v1h-1zM9.70,451.50h1v1h-1zM22.18,451.50h1v1h-1zM34.66,451.50h1v1h-1zM47.15,451.50h1v1h-1zM59.63,451.50h1v1h-1zM72.11,451.50h1v1h-1zM84.59,451.50h1v1h-1zM97.07,451.50h1v1h-1zM109.56,451.50h1v1h-1zM122.04,451.50h1v1h-1zM134.52,451.50h1v1h-1zM147.00,451.50h1v1h-1zM159.48,451.50h1v1h-1zM171.97,451.50h1v1h-1zM184.45,451.50h1v1h-1zM196.93,451.50h1v1h-1zM209.41,451.50h1v1h-1zM221.89,451.50h1v1h-1zM234.38,451.50h1v1h-1zM246.86,451.50h1v1h-1zM259.34,451.50h1v1h-1zM271.82,451.50h1v1h-1zM284.30,451.50h1v1h-1zM296.79,451.50h1v1h-1zM309.27,451.50h1v1h-1zM321.75,451.50h1v1h-1zM334.23,451.50h1v1h-1zM346.71,451.50h1v1h-1zM359.20,451.50h1v1h-1zM371.68,451.50h1v1h-1zM384.16,451.50h1v1h-1zM396.64,451.50h1v1h-1zM409.12,451.50h1v1h-1zM421.61,451.50h1v1h-1zM434.09,451.50h1v1h-1zM446.57,451.50h1v1h-1zM459.05,451.50h1v1h-1zM471.53,451.50h1v1h-1zM484.02,451.50h1v1h-1zM496.50,451.50h1v1h-1zM508.98,451.50h1v1h-1zM521.46,451.50h1v1h-1zM533.94,451.50h1v1h-1zM546.43,451.50h1v1h-1zM558.91,451.50h1v1h-1zM571.39,451.50h1v1h-1zM583.87,451.50h1v1h-1zM596.35,451.50h1v1h-1zM608.84,451.50h1v1h-1zM621.32,451.50h1v1h-1zM633.80,451.50h1v1h-1zM646.28,451.50h1v1h-1zM658.76,451.50h1v1h-1zM671.25,451.50h1v1h-1zM683.73,451.50h1v1h-1zM696.21,451.50h1v1h-1zM708.69,451.50h1v1h-1zM721.17,451.50h1v1h-1zM733.66,451.50h1v1h-1zM746.14,451.50h1v1h-1zM758.62,451.50h1v1h-1zM771.10,451.50h1v1h-1zM783.58,451.50h1v1h-1zM796.07,451.50h1v1h-1zM808.55,451.50h1v1h-1zM821.03,451.50h1v1h-1zM833.51,451.50h1v1h-1zM845.99,451.50h1v1h-1zM858.48,451.50h1v1h-1zM870.96,451.50h1v1h-1zM883.44,451.50h1v1h-1zM895.92,451.50h1v1h-1zM908.40,451.50h1v1h-1zM920.89,451.50h1v1h-1zM933.37,451.50h1v1h-1zM945.85,451.50h1v1h-1zM958.33,451.50h1v1h-1zM970.81,451.50h1v1h-1zM983.30,451.50h1v1h-1zM995.78,451.50h1v1h-1zM1008.26,451.50h1v1h-1zM1020.74,451.50h1v1h-1zM1033.22,451.50h1v1h-1zM1045.71,451.50h1v1h-1zM1058.19,451.50h1v1h-1zM1070.67,451.50h1v1h-1zM1083.15,451.50h1v1h-1zM1095.63,451.50h1v1h-1zM1108.12,451.50h1v1h-1zM1120.60,451.50h1v1h-1zM1133.08,451.50h1v1h-1zM1145.56,451.50h1v1h-1zM1158.04,451.50h1v1h-1zM1170.53,451.50h1v1h-1zM1183.01,451.50h1v1h-1zM1195.49,451.50h1v1h-1zM1207.97,451.50h1v1h-1zM9.70,463.98h1v1h-1zM22.18,463.98h1v1h-1zM34.66,463.98h1v1h-1zM47.15,463.98h1v1h-1zM59.63,463.98h1v1h-1zM72.11,463.98h1v1h-1zM84.59,463.98h1v1h-1zM97.07,463.98h1v1h-1zM109.56,463.98h1v1h-1zM122.04,463.98h1v1h-1zM134.52,463.98h1v1h-1zM147.00,463.98h1v1h-1zM159.48,463.98h1v1h-1zM171.97,463.98h1v1h-1zM184.45,463.98h1v1h-1zM196.93,463.98h1v1h-1zM209.41,463.98h1v1h-1zM221.89,463.98h1v1h-1zM234.38,463.98h1v1h-1zM246.86,463.98h1v1h-1zM259.34,463.98h1v1h-1zM271.82,463.98h1v1h-1zM284.30,463.98h1v1h-1zM296.79,463.98h1v1h-1zM309.27,463.98h1v1h-1zM321.75,463.98h1v1h-1zM334.23,463.98h1v1h-1zM346.71,463.98h1v1h-1zM359.20,463.98h1v1h-1zM371.68,463.98h1v1h-1zM384.16,463.98h1v1h-1zM396.64,463.98h1v1h-1zM409.12,463.98h1v1h-1zM421.61,463.98h1v1h-1zM434.09,463.98h1v1h-1zM446.57,463.98h1v1h-1zM459.05,463.98h1v1h-1zM471.53,463.98h1v1h-1zM484.02,463.98h1v1h-1zM496.50,463.98h1v1h-1zM508.98,463.98h1v1h-1zM521.46,463.98h1v1h-1zM533.94,463.98h1v1h-1zM546.43,463.98h1v1h-1zM558.91,463.98h1v1h-1zM571.39,463.98h1v1h-1zM583.87,463.98h1v1h-1zM596.35,463.98h1v1h-1zM608.84,463.98h1v1h-1zM621.32,463.98h1v1h-1zM633.80,463.98h1v1h-1zM646.28,463.98h1v1h-1zM658.76,463.98h1v1h-1zM671.25,463.98h1v1h-1zM683.73,463.98h1v1h-1zM696.21,463.98h1v1h-1zM708.69,463.98h1v1h-1zM721.17,463.98h1v1h-1zM733.66,463.98h1v1h-1zM746.14,463.98h1v1h-1zM758.62,463.98h1v1h-1zM771.10,463.98h1v1h-1zM783.58,463.98h1v1h-1zM796.07,463.98h1v1h-1zM808.55,463.98h1v1h-1zM821.03,463.98h1v1h-1zM833.51,463.98h1v1h-1zM845.99,463.98h1v1h-1zM858.48,463.98h1v1h-1zM870.96,463.98h1v1h-1zM883.44,463.98h1v1h-1zM895.92,463.98h1v1h-1zM908.40,463.98h1v1h-1zM920.89,463.98h1v1h-1zM933.37,463.98h1v1h-1zM945.85,463.98h1v1h-1zM958.33,463.98h1v1h-1zM970.81,463.98h1v1h-1zM983.30,463.98h1v1h-1zM995.78,463.98h1v1h-1zM1008.26,463.98h1v1h-1zM1020.74,463.98h1v1h-1zM1033.22,463.98h1v1h-1zM1045.71,463.98h1v1h-1zM1058.19,463.98h1v1h-1zM1070.67,463.98h1v1h-1zM1083.15,463.98h1v1h-1zM1095.63,463.98h1v1h-1zM1108.12,463.98h1v1h-1zM1120.60,463.98h1v1h-1zM1133.08,463.98h1v1h-1zM1145.56,463.98h1v1h-1zM1158.04,463.98h1v1h-1zM1170.53,463.98h1v1h-1zM1183.01,463.98h1v1h-1zM1195.49,463.98h1v1h-1zM1207.97,463.98h1v1h-1zM9.70,476.47h1v1h-1zM22.18,476.47h1v1h-1zM34.66,476.47h1v1h-1zM59.63,476.47h1v1h-1zM72.11,476.47h1v1h-1zM84.59,476.47h1v1h-1zM97.07,476.47h1v1h-1zM122.04,476.47h1v1h-1zM134.52,476.47h1v1h-1zM147.00,476.47h1v1h-1zM159.48,476.47h1v1h-1zM184.45,476.47h1v1h-1zM196.93,476.47h1v1h-1zM209.41,476.47h1v1h-1zM221.89,476.47h1v1h-1zM246.86,476.47h1v1h-1zM259.34,476.47h1v1h-1zM271.82,476.47h1v1h-1zM284.30,476.47h1v1h-1zM309.27,476.47h1v1h-1zM321.75,476.47h1v1h-1zM334.23,476.47h1v1h-1zM346.71,476.47h1v1h-1zM371.68,476.47h1v1h-1zM384.16,476.47h1v1h-1zM396.64,476.47h1v1h-1zM409.12,476.47h1v1h-1zM434.09,476.47h1v1h-1zM446.57,476.47h1v1h-1zM459.05,476.47h1v1h-1zM471.53,476.47h1v1h-1zM496.50,476.47h1v1h-1zM508.98,476.47h1v1h-1zM521.46,476.47h1v1h-1zM533.94,476.47h1v1h-1zM558.91,476.47h1v1h-1zM571.39,476.47h1v1h-1zM583.87,476.47h1v1h-1zM596.35,476.47h1v1h-1zM621.32,476.47h1v1h-1zM633.80,476.47h1v1h-1zM646.28,476.47h1v1h-1zM658.76,476.47h1v1h-1zM683.73,476.47h1v1h-1zM696.21,476.47h1v1h-1zM708.69,476.47h1v1h-1zM721.17,476.47h1v1h-1zM746.14,476.47h1v1h-1zM758.62,476.47h1v1h-1zM771.10,476.47h1v1h-1zM783.58,476.47h1v1h-1zM808.55,476.47h1v1h-1zM821.03,476.47h1v1h-1zM833.51,476.47h1v1h-1zM845.99,476.47h1v1h-1zM870.96,476.47h1v1h-1zM883.44,476.47h1v1h-1zM895.92,476.47h1v1h-1zM908.40,476.47h1v1h-1zM933.37,476.47h1v1h-1zM945.85,476.47h1v1h-1zM958.33,476.47h1v1h-1zM970.81,476.47h1v1h-1zM995.78,476.47h1v1h-1zM1008.26,476.47h1v1h-1zM1020.74,476.47h1v1h-1zM1033.22,476.47h1v1h-1zM1058.19,476.47h1v1h-1zM1070.67,476.47h1v1h-1zM1083.15,476.47h1v1h-1zM1095.63,476.47h1v1h-1zM1120.60,476.47h1v1h-1zM1133.08,476.47h1v1h-1zM1145.56,476.47h1v1h-1zM1158.04,476.47h1v1h-1zM1183.01,476.47h1v1h-1zM1195.49,476.47h1v1h-1zM1207.97,476.47h1v1h-1zM9.70,488.95h1v1h-1zM22.18,488.95h1v1h-1zM34.66,488.95h1v1h-1zM47.15,488.95h1v1h-1zM59.63,488.95h1v1h-1zM72.11,488.95h1v1h-1zM84.59,488.95h1v1h-1zM97.07,488.95h1v1h-1zM109.56,488.95h1v1h-1zM122.04,488.95h1v1h-1zM134.52,488.95h1v1h-1zM147.00,488.95h1v1h-1zM159.48,488.95h1v1h-1zM171.97,488.95h1v1h-1zM184.45,488.95h1v1h-1zM196.93,488.95h1v1h-1zM209.41,488.95h1v1h-1zM221.89,488.95h1v1h-1zM234.38,488.95h1v1h-1zM246.86,488.95h1v1h-1zM259.34,488.95h1v1h-1zM271.82,488.95h1v1h-1zM284.30,488.95h1v1h-1zM296.79,488.95h1v1h-1zM309.27,488.95h1v1h-1zM321.75,488.95h1v1h-1zM334.23,488.95h1v1h-1zM346.71,488.95h1v1h-1zM359.20,488.95h1v1h-1zM371.68,488.95h1v1h-1zM384.16,488.95h1v1h-1zM396.64,488.95h1v1h-1zM409.12,488.95h1v1h-1zM421.61,488.95h1v1h-1zM434.09,488.95h1v1h-1zM446.57,488.95h1v1h-1zM459.05,488.95h1v1h-1zM471.53,488.95h1v1h-1zM484.02,488.95h1v1h-1zM496.50,488.95h1v1h-1zM508.98,488.95h1v1h-1zM521.46,488.95h1v1h-1zM533.94,488.95h1v1h-1zM546.43,488.95h1v1h-1zM558.91,488.95h1v1h-1zM571.39,488.95h1v1h-1zM583.87,488.95h1v1h-1zM596.35,488.95h1v1h-1zM608.84,488.95h1v1h-1zM621.32,488.95h1v1h-1zM633.80,488.95h1v1h-1zM646.28,488.95h1v1h-1zM658.76,488.95h1v1h-1zM671.25,488.95h1v1h-1zM683.73,488.95h1v1h-1zM696.21,488.95h1v1h-1zM708.69,488.95h1v1h-1zM721.17,488.95h1v1h-1zM733.66,488.95h1v1h-1zM746.14,488.95h1v1h-1zM758.62,488.95h1v1h-1zM771.10,488.95h1v1h-1zM783.58,488.95h1v1h-1zM796.07,488.95h1v1h-1zM808.55,488.95h1v1h-1zM821.03,488.95h1v1h-1zM833.51,488.95h1v1h-1zM845.99,488.95h1v1h-1zM858.48,488.95h1v1h-1zM870.96,488.95h1v1h-1zM883.44,488.95h1v1h-1zM895.92,488.95h1v1h-1zM908.40,488.95h1v1h-1zM920.89,488.95h1v1h-1zM933.37,488.95h1v1h-1zM945.85,488.95h1v1h-1zM958.33,488.95h1v1h-1zM970.81,488.95h1v1h-1zM983.30,488.95h1v1h-1zM995.78,488.95h1v1h-1zM1008.26,488.95h1v1h-1zM1020.74,488.95h1v1h-1zM1033.22,488.95h1v1h-1zM1045.71,488.95h1v1h-1zM1058.19,488.95h1v1h-1zM1070.67,488.95h1v1h-1zM1083.15,488.95h1v1h-1zM1095.63,488.95h1v1h-1zM1108.12,488.95h1v1h-1zM1120.60,488.95h1v1h-1zM1133.08,488.95h1v1h-1zM1145.56,488.95h1v1h-1zM1158.04,488.95h1v1h-1zM1170.53,488.95h1v1h-1zM1183.01,488.95h1v1h-1zM1195.49,488.95h1v1h-1zM1207.97,488.95h1v1h-1zM9.70,501.43h1v1h-1zM22.18,501.43h1v1h-1zM34.66,501.43h1v1h-1zM47.15,501.43h1v1h-1zM59.63,501.43h1v1h-1zM72.11,501.43h1v1h-1zM84.59,501.43h1v1h-1zM97.07,501.43h1v1h-1zM109.56,501.43h1v1h-1zM122.04,501.43h1v1h-1zM134.52,501.43h1v1h-1zM147.00,501.43h1v1h-1zM159.48,501.43h1v1h-1zM171.97,501.43h1v1h-1zM184.45,501.43h1v1h-1zM196.93,501.43h1v1h-1zM209.41,501.43h1v1h-1zM221.89,501.43h1v1h-1zM234.38,501.43h1v1h-1zM246.86,501.43h1v1h-1zM259.34,501.43h1v1h-1zM271.82,501.43h1v1h-1zM284.30,501.43h1v1h-1zM296.79,501.43h1v1h-1zM309.27,501.43h1v1h-1zM321.75,501.43h1v1h-1zM334.23,501.43h1v1h-1zM346.71,501.43h1v1h-1zM359.20,501.43h1v1h-1zM371.68,501.43h1v1h-1zM384.16,501.43h1v1h-1zM396.64,501.43h1v1h-1zM409.12,501.43h1v1h-1zM421.61,501.43h1v1h-1zM434.09,501.43h1v1h-1zM446.57,501.43h1v1h-1zM459.05,501.43h1v1h-1zM471.53,501.43h1v1h-1zM484.02,501.43h1v1h-1zM496.50,501.43h1v1h-1zM508.98,501.43h1v1h-1zM521.46,501.43h1v1h-1zM533.94,501.43h1v1h-1zM546.43,501.43h1v1h-1zM558.91,501.43h1v1h-1zM571.39,501.43h1v1h-1zM583.87,501.43h1v1h-1zM596.35,501.43h1v1h-1zM608.84,501.43h1v1h-1zM621.32,501.43h1v1h-1zM633.80,501.43h1v1h-1zM646.28,501.43h1v1h-1zM658.76,501.43h1v1h-1zM671.25,501.43h1v1h-1zM683.73,501.43h1v1h-1zM696.21,501.43h1v1h-1zM708.69,501.43h1v1h-1zM721.17,501.43h1v1h-1zM733.66,501.43h1v1h-1zM746.14,501.43h1v1h-1zM758.62,501.43h1v1h-1zM771.10,501.43h1v1h-1zM783.58,501.43h1v1h-1zM796.07,501.43h1v1h-1zM808.55,501.43h1v1h-1zM821.03,501.43h1v1h-1zM833.51,501.43h1v1h-1zM845.99,501.43h1v1h-1zM858.48,501.43h1v1h-1zM870.96,501.43h1v1h-1zM883.44,501.43h1v1h-1zM895.92,501.43h1v1h-1zM908.40,501.43h1v1h-1zM920.89,501.43h1v1h-1zM933.37,501.43h1v1h-1zM945.85,501.43h1v1h-1zM958.33,501.43h1v1h-1zM970.81,501.43h1v1h-1zM983.30,501.43h1v1h-1zM995.78,501.43h1v1h-1zM1008.26,501.43h1v1h-1zM1020.74,501.43h1v1h-1zM1033.22,501.43h1v1h-1zM1045.71,501.43h1v1h-1zM1058.19,501.43h1v1h-1zM1070.67,501.43h1v1h-1zM1083.15,501.43h1v1h-1zM1095.63,501.43h1v1h-1zM1108.12,501.43h1v1h-1zM1120.60,501.43h1v1h-1zM1133.08,501.43h1v1h-1zM1145.56,501.43h1v1h-1zM1158.04,501.43h1v1h-1zM1170.53,501.43h1v1h-1zM1183.01,501.43h1v1h-1zM1195.49,501.43h1v1h-1zM1207.97,501.43h1v1h-1zM9.70,513.91h1v1h-1zM22.18,513.91h1v1h-1zM34.66,513.91h1v1h-1zM47.15,513.91h1v1h-1zM59.63,513.91h1v1h-1zM72.11,513.91h1v1h-1zM84.59,513.91h1v1h-1zM97.07,513.91h1v1h-1zM109.56,513.91h1v1h-1zM122.04,513.91h1v1h-1zM134.52,513.91h1v1h-1zM147.00,513.91h1v1h-1zM159.48,513.91h1v1h-1zM171.97,513.91h1v1h-1zM184.45,513.91h1v1h-1zM196.93,513.91h1v1h-1zM209.41,513.91h1v1h-1zM221.89,513.91h1v1h-1zM234.38,513.91h1v1h-1zM246.86,513.91h1v1h-1zM259.34,513.91h1v1h-1zM271.82,513.91h1v1h-1zM284.30,513.91h1v1h-1zM296.79,513.91h1v1h-1zM309.27,513.91h1v1h-1zM321.75,513.91h1v1h-1zM334.23,513.91h1v1h-1zM346.71,513.91h1v1h-1zM359.20,513.91h1v1h-1zM371.68,513.91h1v1h-1zM384.16,513.91h1v1h-1zM396.64,513.91h1v1h-1zM409.12,513.91h1v1h-1zM421.61,513.91h1v1h-1zM434.09,513.91h1v1h-1zM446.57,513.91h1v1h-1zM459.05,513.91h1v1h-1zM471.53,513.91h1v1h-1zM484.02,513.91h1v1h-1zM496.50,513.91h1v1h-1zM508.98,513.91h1v1h-1zM521.46,513.91h1v1h-1zM533.94,513.91h1v1h-1zM546.43,513.91h1v1h-1zM558.91,513.91h1v1h-1zM571.39,513.91h1v1h-1zM583.87,513.91h1v1h-1zM596.35,513.91h1v1h-1zM608.84,513.91h1v1h-1zM621.32,513.91h1v1h-1zM633.80,513.91h1v1h-1zM646.28,513.91h1v1h-1zM658.76,513.91h1v1h-1zM671.25,513.91h1v1h-1zM683.73,513.91h1v1h-1zM696.21,513.91h1v1h-1zM708.69,513.91h1v1h-1zM721.17,513.91h1v1h-1zM733.66,513.91h1v1h-1zM746.14,513.91h1v1h-1zM758.62,513.91h1v1h-1zM771.10,513.91h1v1h-1zM783.58,513.91h1v1h-1zM796.07,513.91h1v1h-1zM808.55,513.91h1v1h-1zM821.03,513.91h1v1h-1zM833.51,513.91h1v1h-1zM845.99,513.91h1v1h-1zM858.48,513.91h1v1h-1zM870.96,513.91h1v1h-1zM883.44,513.91h1v1h-1zM895.92,513.91h1v1h-1zM908.40,513.91h1v1h-1zM920.89,513.91h1v1h-1zM933.37,513.91h1v1h-1zM945.85,513.91h1v1h-1zM958.33,513.91h1v1h-1zM970.81,513.91h1v1h-1zM983.30,513.91h1v1h-1zM995.78,513.91h1v1h-1zM1008.26,513.91h1v1h-1zM1020.74,513.91h1v1h-1zM1033.22,513.91h1v1h-1zM1045.71,513.91h1v1h-1zM1058.19,513.91h1v1h-1zM1070.67,513.91h1v1h-1zM1083.15,513.91h1v1h-1zM1095.63,513.91h1v1h-1zM1108.12,513.91h1v1h-1zM1120.60,513.91h1v1h-1zM1133.08,513.91h1v1h-1zM1145.56,513.91h1v1h-1zM1158.04,513.91h1v1h-1zM1170.53,513.91h1v1h-1zM1183.01,513.91h1v1h-1zM1195.49,513.91h1v1h-1zM1207.97,513.91h1v1h-1zM9.70,526.39h1v1h-1zM22.18,526.39h1v1h-1zM34.66,526.39h1v1h-1zM47.15,526.39h1v1h-1zM59.63,526.39h1v1h-1zM72.11,526.39h1v1h-1zM84.59,526.39h1v1h-1zM97.07,526.39h1v1h-1zM109.56,526.39h1v1h-1zM122.04,526.39h1v1h-1zM134.52,526.39h1v1h-1zM147.00,526.39h1v1h-1zM159.48,526.39h1v1h-1zM171.97,526.39h1v1h-1zM184.45,526.39h1v1h-1zM196.93,526.39h1v1h-1zM209.41,526.39h1v1h-1zM221.89,526.39h1v1h-1zM234.38,526.39h1v1h-1zM246.86,526.39h1v1h-1zM259.34,526.39h1v1h-1zM271.82,526.39h1v1h-1zM284.30,526.39h1v1h-1zM296.79,526.39h1v1h-1zM309.27,526.39h1v1h-1zM321.75,526.39h1v1h-1zM334.23,526.39h1v1h-1zM346.71,526.39h1v1h-1zM359.20,526.39h1v1h-1zM371.68,526.39h1v1h-1zM384.16,526.39h1v1h-1zM396.64,526.39h1v1h-1zM409.12,526.39h1v1h-1zM421.61,526.39h1v1h-1zM434.09,526.39h1v1h-1zM446.57,526.39h1v1h-1zM459.05,526.39h1v1h-1zM471.53,526.39h1v1h-1zM484.02,526.39h1v1h-1zM496.50,526.39h1v1h-1zM508.98,526.39h1v1h-1zM521.46,526.39h1v1h-1zM533.94,526.39h1v1h-1zM546.43,526.39h1v1h-1zM558.91,526.39h1v1h-1zM571.39,526.39h1v1h-1zM583.87,526.39h1v1h-1zM596.35,526.39h1v1h-1zM608.84,526.39h1v1h-1zM621.32,526.39h1v1h-1zM633.80,526.39h1v1h-1zM646.28,526.39h1v1h-1zM658.76,526.39h1v1h-1zM671.25,526.39h1v1h-1zM683.73,526.39h1v1h-1zM696.21,526.39h1v1h-1zM708.69,526.39h1v1h-1zM721.17,526.39h1v1h-1zM733.66,526.39h1v1h-1zM746.14,526.39h1v1h-1zM758.62,526.39h1v1h-1zM771.10,526.39h1v1h-1zM783.58,526.39h1v1h-1zM796.07,526.39h1v1h-1zM808.55,526.39h1v1h-1zM821.03,526.39h1v1h-1zM833.51,526.39h1v1h-1zM845.99,526.39h1v1h-1zM858.48,526.39h1v1h-1zM870.96,526.39h1v1h-1zM883.44,526.39h1v1h-1zM895.92,526.39h1v1h-1zM908.40,526.39h1v1h-1zM920.89,526.39h1v1h-1zM933.37,526.39h1v1h-1zM945.85,526.39h1v1h-1zM958.33,526.39h1v1h-1zM970.81,526.39h1v1h-1zM983.30,526.39h1v1h-1zM995.78,526.39h1v1h-1zM1008.26,526.39h1v1h-1zM1020.74,526.39h1v1h-1zM1033.22,526.39h1v1h-1zM1045.71,526.39h1v1h-1zM1058.19,526.39h1v1h-1zM1070.67,526.39h1v1h-1zM1083.15,526.39h1v1h-1zM1095.63,526.39h1v1h-1zM1108.12,526.39h1v1h-1zM1120.60,526.39h1v1h-1zM1133.08,526.39h1v1h-1zM1145.56,526.39h1v1h-1zM1158.04,526.39h1v1h-1zM1170.53,526.39h1v1h-1zM1183.01,526.39h1v1h-1zM1195.49,526.39h1v1h-1zM1207.97,526.39h1v1h-1zM9.70,538.88h1v1h-1zM22.18,538.88h1v1h-1zM34.66,538.88h1v1h-1zM59.63,538.88h1v1h-1zM72.11,538.88h1v1h-1zM84.59,538.88h1v1h-1zM97.07,538.88h1v1h-1zM122.04,538.88h1v1h-1zM134.52,538.88h1v1h-1zM147.00,538.88h1v1h-1zM159.48,538.88h1v1h-1zM184.45,538.88h1v1h-1zM196.93,538.88h1v1h-1zM209.41,538.88h1v1h-1zM221.89,538.88h1v1h-1zM246.86,538.88h1v1h-1zM259.34,538.88h1v1h-1zM271.82,538.88h1v1h-1zM284.30,538.88h1v1h-1zM309.27,538.88h1v1h-1zM321.75,538.88h1v1h-1zM334.23,538.88h1v1h-1zM346.71,538.88h1v1h-1zM371.68,538.88h1v1h-1zM384.16,538.88h1v1h-1zM396.64,538.88h1v1h-1zM409.12,538.88h1v1h-1zM434.09,538.88h1v1h-1zM446.57,538.88h1v1h-1zM459.05,538.88h1v1h-1zM471.53,538.88h1v1h-1zM496.50,538.88h1v1h-1zM508.98,538.88h1v1h-1zM521.46,538.88h1v1h-1zM533.94,538.88h1v1h-1zM558.91,538.88h1v1h-1zM571.39,538.88h1v1h-1zM583.87,538.88h1v1h-1zM596.35,538.88h1v1h-1zM621.32,538.88h1v1h-1zM633.80,538.88h1v1h-1zM646.28,538.88h1v1h-1zM658.76,538.88h1v1h-1zM683.73,538.88h1v1h-1zM696.21,538.88h1v1h-1zM708.69,538.88h1v1h-1zM721.17,538.88h1v1h-1zM746.14,538.88h1v1h-1zM758.62,538.88h1v1h-1zM771.10,538.88h1v1h-1zM783.58,538.88h1v1h-1zM808.55,538.88h1v1h-1zM821.03,538.88h1v1h-1zM833.51,538.88h1v1h-1zM845.99,538.88h1v1h-1zM870.96,538.88h1v1h-1zM883.44,538.88h1v1h-1zM895.92,538.88h1v1h-1zM908.40,538.88h1v1h-1zM933.37,538.88h1v1h-1zM945.85,538.88h1v1h-1zM958.33,538.88h1v1h-1zM970.81,538.88h1v1h-1zM995.78,538.88h1v1h-1zM1008.26,538.88h1v1h-1zM1020.74,538.88h1v1h-1zM1033.22,538.88h1v1h-1zM1058.19,538.88h1v1h-1zM1070.67,538.88h1v1h-1zM1083.15,538.88h1v1h-1zM1095.63,538.88h1v1h-1zM1120.60,538.88h1v1h-1zM1133.08,538.88h1v1h-1zM1145.56,538.88h1v1h-1zM1158.04,538.88h1v1h-1zM1183.01,538.88h1v1h-1zM1195.49,538.88h1v1h-1zM1207.97,538.88h1v1h-1zM9.70,551.36h1v1h-1zM22.18,551.36h1v1h-1zM34.66,551.36h1v1h-1zM47.15,551.36h1v1h-1zM59.63,551.36h1v1h-1zM72.11,551.36h1v1h-1zM84.59,551.36h1v1h-1zM97.07,551.36h1v1h-1zM109.56,551.36h1v1h-1zM122.04,551.36h1v1h-1zM134.52,551.36h1v1h-1zM147.00,551.36h1v1h-1zM159.48,551.36h1v1h-1zM171.97,551.36h1v1h-1zM184.45,551.36h1v1h-1zM196.93,551.36h1v1h-1zM209.41,551.36h1v1h-1zM221.89,551.36h1v1h-1zM234.38,551.36h1v1h-1zM246.86,551.36h1v1h-1zM259.34,551.36h1v1h-1zM271.82,551.36h1v1h-1zM284.30,551.36h1v1h-1zM296.79,551.36h1v1h-1zM309.27,551.36h1v1h-1zM321.75,551.36h1v1h-1zM334.23,551.36h1v1h-1zM346.71,551.36h1v1h-1zM359.20,551.36h1v1h-1zM371.68,551.36h1v1h-1zM384.16,551.36h1v1h-1zM396.64,551.36h1v1h-1zM409.12,551.36h1v1h-1zM421.61,551.36h1v1h-1zM434.09,551.36h1v1h-1zM446.57,551.36h1v1h-1zM459.05,551.36h1v1h-1zM471.53,551.36h1v1h-1zM484.02,551.36h1v1h-1zM496.50,551.36h1v1h-1zM508.98,551.36h1v1h-1zM521.46,551.36h1v1h-1zM533.94,551.36h1v1h-1zM546.43,551.36h1v1h-1zM558.91,551.36h1v1h-1zM571.39,551.36h1v1h-1zM583.87,551.36h1v1h-1zM596.35,551.36h1v1h-1zM608.84,551.36h1v1h-1zM621.32,551.36h1v1h-1zM633.80,551.36h1v1h-1zM646.28,551.36h1v1h-1zM658.76,551.36h1v1h-1zM671.25,551.36h1v1h-1zM683.73,551.36h1v1h-1zM696.21,551.36h1v1h-1zM708.69,551.36h1v1h-1zM721.17,551.36h1v1h-1zM733.66,551.36h1v1h-1zM746.14,551.36h1v1h-1zM758.62,551.36h1v1h-1zM771.10,551.36h1v1h-1zM783.58,551.36h1v1h-1zM796.07,551.36h1v1h-1zM808.55,551.36h1v1h-1zM821.03,551.36h1v1h-1zM833.51,551.36h1v1h-1zM845.99,551.36h1v1h-1zM858.48,551.36h1v1h-1zM870.96,551.36h1v1h-1zM883.44,551.36h1v1h-1zM895.92,551.36h1v1h-1zM908.40,551.36h1v1h-1zM920.89,551.36h1v1h-1zM933.37,551.36h1v1h-1zM945.85,551.36h1v1h-1zM958.33,551.36h1v1h-1zM970.81,551.36h1v1h-1zM983.30,551.36h1v1h-1zM995.78,551.36h1v1h-1zM1008.26,551.36h1v1h-1zM1020.74,551.36h1v1h-1zM1033.22,551.36h1v1h-1zM1045.71,551.36h1v1h-1zM1058.19,551.36h1v1h-1zM1070.67,551.36h1v1h-1zM1083.15,551.36h1v1h-1zM1095.63,551.36h1v1h-1zM1108.12,551.36h1v1h-1zM1120.60,551.36h1v1h-1zM1133.08,551.36h1v1h-1zM1145.56,551.36h1v1h-1zM1158.04,551.36h1v1h-1zM1170.53,551.36h1v1h-1zM1183.01,551.36h1v1h-1zM1195.49,551.36h1v1h-1zM1207.97,551.36h1v1h-1zM9.70,563.84h1v1h-1zM22.18,563.84h1v1h-1zM34.66,563.84h1v1h-1zM47.15,563.84h1v1h-1zM59.63,563.84h1v1h-1zM72.11,563.84h1v1h-1zM84.59,563.84h1v1h-1zM97.07,563.84h1v1h-1zM109.56,563.84h1v1h-1zM122.04,563.84h1v1h-1zM134.52,563.84h1v1h-1zM147.00,563.84h1v1h-1zM159.48,563.84h1v1h-1zM171.97,563.84h1v1h-1zM184.45,563.84h1v1h-1zM196.93,563.84h1v1h-1zM209.41,563.84h1v1h-1zM221.89,563.84h1v1h-1zM234.38,563.84h1v1h-1zM246.86,563.84h1v1h-1zM259.34,563.84h1v1h-1zM271.82,563.84h1v1h-1zM284.30,563.84h1v1h-1zM296.79,563.84h1v1h-1zM309.27,563.84h1v1h-1zM321.75,563.84h1v1h-1zM334.23,563.84h1v1h-1zM346.71,563.84h1v1h-1zM359.20,563.84h1v1h-1zM371.68,563.84h1v1h-1zM384.16,563.84h1v1h-1zM396.64,563.84h1v1h-1zM409.12,563.84h1v1h-1zM421.61,563.84h1v1h-1zM434.09,563.84h1v1h-1zM446.57,563.84h1v1h-1zM459.05,563.84h1v1h-1zM471.53,563.84h1v1h-1zM484.02,563.84h1v1h-1zM496.50,563.84h1v1h-1zM508.98,563.84h1v1h-1zM521.46,563.84h1v1h-1zM533.94,563.84h1v1h-1zM546.43,563.84h1v1h-1zM558.91,563.84h1v1h-1zM571.39,563.84h1v1h-1zM583.87,563.84h1v1h-1zM596.35,563.84h1v1h-1zM608.84,563.84h1v1h-1zM621.32,563.84h1v1h-1zM633.80,563.84h1v1h-1zM646.28,563.84h1v1h-1zM658.76,563.84h1v1h-1zM671.25,563.84h1v1h-1zM683.73,563.84h1v1h-1zM696.21,563.84h1v1h-1zM708.69,563.84h1v1h-1zM721.17,563.84h1v1h-1zM733.66,563.84h1v1h-1zM746.14,563.84h1v1h-1zM758.62,563.84h1v1h-1zM771.10,563.84h1v1h-1zM783.58,563.84h1v1h-1zM796.07,563.84h1v1h-1zM808.55,563.84h1v1h-1zM821.03,563.84h1v1h-1zM833.51,563.84h1v1h-1zM845.99,563.84h1v1h-1zM858.48,563.84h1v1h-1zM870.96,563.84h1v1h-1zM883.44,563.84h1v1h-1zM895.92,563.84h1v1h-1zM908.40,563.84h1v1h-1zM920.89,563.84h1v1h-1zM933.37,563.84h1v1h-1zM945.85,563.84h1v1h-1zM958.33,563.84h1v1h-1zM970.81,563.84h1v1h-1zM983.30,563.84h1v1h-1zM995.78,563.84h1v1h-1zM1008.26,563.84h1v1h-1zM1020.74,563.84h1v1h-1zM1033.22,563.84h1v1h-1zM1045.71,563.84h1v1h-1zM1058.19,563.84h1v1h-1zM1070.67,563.84h1v1h-1zM1083.15,563.84h1v1h-1zM1095.63,563.84h1v1h-1zM1108.12,563.84h1v1h-1zM1120.60,563.84h1v1h-1zM1133.08,563.84h1v1h-1zM1145.56,563.84h1v1h-1zM1158.04,563.84h1v1h-1zM1170.53,563.84h1v1h-1zM1183.01,563.84h1v1h-1zM1195.49,563.84h1v1h-1zM1207.97,563.84h1v1h-1zM9.70,576.32h1v1h-1zM22.18,576.32h1v1h-1zM34.66,576.32h1v1h-1zM47.15,576.32h1v1h-1zM59.63,576.32h1v1h-1zM72.11,576.32h1v1h-1zM84.59,576.32h1v1h-1zM97.07,576.32h1v1h-1zM109.56,576.32h1v1h-1zM122.04,576.32h1v1h-1zM134.52,576.32h1v1h-1zM147.00,576.32h1v1h-1zM159.48,576.32h1v1h-1zM171.97,576.32h1v1h-1zM184.45,576.32h1v1h-1zM196.93,576.32h1v1h-1zM209.41,576.32h1v1h-1zM221.89,576.32h1v1h-1zM234.38,576.32h1v1h-1zM246.86,576.32h1v1h-1zM259.34,576.32h1v1h-1zM271.82,576.32h1v1h-1zM284.30,576.32h1v1h-1zM296.79,576.32h1v1h-1zM309.27,576.32h1v1h-1zM321.75,576.32h1v1h-1zM334.23,576.32h1v1h-1zM346.71,576.32h1v1h-1zM359.20,576.32h1v1h-1zM371.68,576.32h1v1h-1zM384.16,576.32h1v1h-1zM396.64,576.32h1v1h-1zM409.12,576.32h1v1h-1zM421.61,576.32h1v1h-1zM434.09,576.32h1v1h-1zM446.57,576.32h1v1h-1zM459.05,576.32h1v1h-1zM471.53,576.32h1v1h-1zM484.02,576.32h1v1h-1zM496.50,576.32h1v1h-1zM508.98,576.32h1v1h-1zM521.46,576.32h1v1h-1zM533.94,576.32h1v1h-1zM546.43,576.32h1v1h-1zM558.91,576.32h1v1h-1zM571.39,576.32h1v1h-1zM583.87,576.32h1v1h-1zM596.35,576.32h1v1h-1zM608.84,576.32h1v1h-1zM621.32,576.32h1v1h-1zM633.80,576.32h1v1h-1zM646.28,576.32h1v1h-1zM658.76,576.32h1v1h-1zM671.25,576.32h1v1h-1zM683.73,576.32h1v1h-1zM696.21,576.32h1v1h-1zM708.69,576.32h1v1h-1zM721.17,576.32h1v1h-1zM733.66,576.32h1v1h-1zM746.14,576.32h1v1h-1zM758.62,576.32h1v1h-1zM771.10,576.32h1v1h-1zM783.58,576.32h1v1h-1zM796.07,576.32h1v1h-1zM808.55,576.32h1v1h-1zM821.03,576.32h1v1h-1zM833.51,576.32h1v1h-1zM845.99,576.32h1v1h-1zM858.48,576.32h1v1h-1zM870.96,576.32h1v1h-1zM883.44,576.32h1v1h-1zM895.92,576.32h1v1h-1zM908.40,576.32h1v1h-1zM920.89,576.32h1v1h-1zM933.37,576.32h1v1h-1zM945.85,576.32h1v1h-1zM958.33,576.32h1v1h-1zM970.81,576.32h1v1h-1zM983.30,576.32h1v1h-1zM995.78,576.32h1v1h-1zM1008.26,576.32h1v1h-1zM1020.74,576.32h1v1h-1zM1033.22,576.32h1v1h-1zM1045.71,576.32h1v1h-1zM1058.19,576.32h1v1h-1zM1070.67,576.32h1v1h-1zM1083.15,576.32h1v1h-1zM1095.63,576.32h1v1h-1zM1108.12,576.32h1v1h-1zM1120.60,576.32h1v1h-1zM1133.08,576.32h1v1h-1zM1145.56,576.32h1v1h-1zM1158.04,576.32h1v1h-1zM1170.53,576.32h1v1h-1zM1183.01,576.32h1v1h-1zM1195.49,576.32h1v1h-1zM1207.97,576.32h1v1h-1zM9.70,588.80h1v1h-1zM22.18,588.80h1v1h-1zM34.66,588.80h1v1h-1zM47.15,588.80h1v1h-1zM59.63,588.80h1v1h-1zM72.11,588.80h1v1h-1zM84.59,588.80h1v1h-1zM97.07,588.80h1v1h-1zM109.56,588.80h1v1h-1zM122.04,588.80h1v1h-1zM134.52,588.80h1v1h-1zM147.00,588.80h1v1h-1zM159.48,588.80h1v1h-1zM171.97,588.80h1v1h-1zM184.45,588.80h1v1h-1zM196.93,588.80h1v1h-1zM209.41,588.80h1v1h-1zM221.89,588.80h1v1h-1zM234.38,588.80h1v1h-1zM246.86,588.80h1v1h-1zM259.34,588.80h1v1h-1zM271.82,588.80h1v1h-1zM284.30,588.80h1v1h-1zM296.79,588.80h1v1h-1zM309.27,588.80h1v1h-1zM321.75,588.80h1v1h-1zM334.23,588.80h1v1h-1zM346.71,588.80h1v1h-1zM359.20,588.80h1v1h-1zM371.68,588.80h1v1h-1zM384.16,588.80h1v1h-1zM396.64,588.80h1v1h-1zM409.12,588.80h1v1h-1zM421.61,588.80h1v1h-1zM434.09,588.80h1v1h-1zM446.57,588.80h1v1h-1zM459.05,588.80h1v1h-1zM471.53,588.80h1v1h-1zM484.02,588.80h1v1h-1zM496.50,588.80h1v1h-1zM508.98,588.80h1v1h-1zM521.46,588.80h1v1h-1zM533.94,588.80h1v1h-1zM546.43,588.80h1v1h-1zM558.91,588.80h1v1h-1zM571.39,588.80h1v1h-1zM583.87,588.80h1v1h-1zM596.35,588.80h1v1h-1zM608.84,588.80h1v1h-1zM621.32,588.80h1v1h-1zM633.80,588.80h1v1h-1zM646.28,588.80h1v1h-1zM658.76,588.80h1v1h-1zM671.25,588.80h1v1h-1zM683.73,588.80h1v1h-1zM696.21,588.80h1v1h-1zM708.69,588.80h1v1h-1zM721.17,588.80h1v1h-1zM733.66,588.80h1v1h-1zM746.14,588.80h1v1h-1zM758.62,588.80h1v1h-1zM771.10,588.80h1v1h-1zM783.58,588.80h1v1h-1zM796.07,588.80h1v1h-1zM808.55,588.80h1v1h-1zM821.03,588.80h1v1h-1zM833.51,588.80h1v1h-1zM845.99,588.80h1v1h-1zM858.48,588.80h1v1h-1zM870.96,588.80h1v1h-1zM883.44,588.80h1v1h-1zM895.92,588.80h1v1h-1zM908.40,588.80h1v1h-1zM920.89,588.80h1v1h-1zM933.37,588.80h1v1h-1zM945.85,588.80h1v1h-1zM958.33,588.80h1v1h-1zM970.81,588.80h1v1h-1zM983.30,588.80h1v1h-1zM995.78,588.80h1v1h-1zM1008.26,588.80h1v1h-1zM1020.74,588.80h1v1h-1zM1033.22,588.80h1v1h-1zM1045.71,588.80h1v1h-1zM1058.19,588.80h1v1h-1zM1070.67,588.80h1v1h-1zM1083.15,588.80h1v1h-1zM1095.63,588.80h1v1h-1zM1108.12,588.80h1v1h-1zM1120.60,588.80h1v1h-1zM1133.08,588.80h1v1h-1zM1145.56,588.80h1v1h-1zM1158.04,588.80h1v1h-1zM1170.53,588.80h1v1h-1zM1183.01,588.80h1v1h-1zM1195.49,588.80h1v1h-1zM1207.97,588.80h1v1h-1zM9.70,601.29h1v1h-1zM22.18,601.29h1v1h-1zM34.66,601.29h1v1h-1zM59.63,601.29h1v1h-1zM72.11,601.29h1v1h-1zM84.59,601.29h1v1h-1zM97.07,601.29h1v1h-1zM122.04,601.29h1v1h-1zM134.52,601.29h1v1h-1zM147.00,601.29h1v1h-1zM159.48,601.29h1v1h-1zM184.45,601.29h1v1h-1zM196.93,601.29h1v1h-1zM209.41,601.29h1v1h-1zM221.89,601.29h1v1h-1zM246.86,601.29h1v1h-1zM259.34,601.29h1v1h-1zM271.82,601.29h1v1h-1zM284.30,601.29h1v1h-1zM309.27,601.29h1v1h-1zM321.75,601.29h1v1h-1zM334.23,601.29h1v1h-1zM346.71,601.29h1v1h-1zM371.68,601.29h1v1h-1zM384.16,601.29h1v1h-1zM396.64,601.29h1v1h-1zM409.12,601.29h1v1h-1zM434.09,601.29h1v1h-1zM446.57,601.29h1v1h-1zM459.05,601.29h1v1h-1zM471.53,601.29h1v1h-1zM496.50,601.29h1v1h-1zM508.98,601.29h1v1h-1zM521.46,601.29h1v1h-1zM533.94,601.29h1v1h-1zM558.91,601.29h1v1h-1zM571.39,601.29h1v1h-1zM583.87,601.29h1v1h-1zM596.35,601.29h1v1h-1zM621.32,601.29h1v1h-1zM633.80,601.29h1v1h-1zM646.28,601.29h1v1h-1zM658.76,601.29h1v1h-1zM683.73,601.29h1v1h-1zM696.21,601.29h1v1h-1zM708.69,601.29h1v1h-1zM721.17,601.29h1v1h-1zM746.14,601.29h1v1h-1zM758.62,601.29h1v1h-1zM771.10,601.29h1v1h-1zM783.58,601.29h1v1h-1zM808.55,601.29h1v1h-1zM821.03,601.29h1v1h-1zM833.51,601.29h1v1h-1zM845.99,601.29h1v1h-1zM870.96,601.29h1v1h-1zM883.44,601.29h1v1h-1zM895.92,601.29h1v1h-1zM908.40,601.29h1v1h-1zM933.37,601.29h1v1h-1zM945.85,601.29h1v1h-1zM958.33,601.29h1v1h-1zM970.81,601.29h1v1h-1zM995.78,601.29h1v1h-1zM1008.26,601.29h1v1h-1zM1020.74,601.29h1v1h-1zM1033.22,601.29h1v1h-1zM1058.19,601.29h1v1h-1zM1070.67,601.29h1v1h-1zM1083.15,601.29h1v1h-1zM1095.63,601.29h1v1h-1zM1120.60,601.29h1v1h-1zM1133.08,601.29h1v1h-1zM1145.56,601.29h1v1h-1zM1158.04,601.29h1v1h-1zM1183.01,601.29h1v1h-1zM1195.49,601.29h1v1h-1zM1207.97,601.29h1v1h-1zM9.70,613.77h1v1h-1zM22.18,613.77h1v1h-1zM34.66,613.77h1v1h-1zM47.15,613.77h1v1h-1zM59.63,613.77h1v1h-1zM72.11,613.77h1v1h-1zM84.59,613.77h1v1h-1zM97.07,613.77h1v1h-1zM109.56,613.77h1v1h-1zM122.04,613.77h1v1h-1zM134.52,613.77h1v1h-1zM147.00,613.77h1v1h-1zM159.48,613.77h1v1h-1zM171.97,613.77h1v1h-1zM184.45,613.77h1v1h-1zM196.93,613.77h1v1h-1zM209.41,613.77h1v1h-1zM221.89,613.77h1v1h-1zM234.38,613.77h1v1h-1zM246.86,613.77h1v1h-1zM259.34,613.77h1v1h-1zM271.82,613.77h1v1h-1zM284.30,613.77h1v1h-1zM296.79,613.77h1v1h-1zM309.27,613.77h1v1h-1zM321.75,613.77h1v1h-1zM334.23,613.77h1v1h-1zM346.71,613.77h1v1h-1zM359.20,613.77h1v1h-1zM371.68,613.77h1v1h-1zM384.16,613.77h1v1h-1zM396.64,613.77h1v1h-1zM409.12,613.77h1v1h-1zM421.61,613.77h1v1h-1zM434.09,613.77h1v1h-1zM446.57,613.77h1v1h-1zM459.05,613.77h1v1h-1zM471.53,613.77h1v1h-1zM484.02,613.77h1v1h-1zM496.50,613.77h1v1h-1zM508.98,613.77h1v1h-1zM521.46,613.77h1v1h-1zM533.94,613.77h1v1h-1zM546.43,613.77h1v1h-1zM558.91,613.77h1v1h-1zM571.39,613.77h1v1h-1zM583.87,613.77h1v1h-1zM596.35,613.77h1v1h-1zM608.84,613.77h1v1h-1zM621.32,613.77h1v1h-1zM633.80,613.77h1v1h-1zM646.28,613.77h1v1h-1zM658.76,613.77h1v1h-1zM671.25,613.77h1v1h-1zM683.73,613.77h1v1h-1zM696.21,613.77h1v1h-1zM708.69,613.77h1v1h-1zM721.17,613.77h1v1h-1zM733.66,613.77h1v1h-1zM746.14,613.77h1v1h-1zM758.62,613.77h1v1h-1zM771.10,613.77h1v1h-1zM783.58,613.77h1v1h-1zM796.07,613.77h1v1h-1zM808.55,613.77h1v1h-1zM821.03,613.77h1v1h-1zM833.51,613.77h1v1h-1zM845.99,613.77h1v1h-1zM858.48,613.77h1v1h-1zM870.96,613.77h1v1h-1zM883.44,613.77h1v1h-1zM895.92,613.77h1v1h-1zM908.40,613.77h1v1h-1zM920.89,613.77h1v1h-1zM933.37,613.77h1v1h-1zM945.85,613.77h1v1h-1zM958.33,613.77h1v1h-1zM970.81,613.77h1v1h-1zM983.30,613.77h1v1h-1zM995.78,613.77h1v1h-1zM1008.26,613.77h1v1h-1zM1020.74,613.77h1v1h-1zM1033.22,613.77h1v1h-1zM1045.71,613.77h1v1h-1zM1058.19,613.77h1v1h-1zM1070.67,613.77h1v1h-1zM1083.15,613.77h1v1h-1zM1095.63,613.77h1v1h-1zM1108.12,613.77h1v1h-1zM1120.60,613.77h1v1h-1zM1133.08,613.77h1v1h-1zM1145.56,613.77h1v1h-1zM1158.04,613.77h1v1h-1zM1170.53,613.77h1v1h-1zM1183.01,613.77h1v1h-1zM1195.49,613.77h1v1h-1zM1207.97,613.77h1v1h-1zM9.70,626.25h1v1h-1zM22.18,626.25h1v1h-1zM34.66,626.25h1v1h-1zM47.15,626.25h1v1h-1zM59.63,626.25h1v1h-1zM72.11,626.25h1v1h-1zM84.59,626.25h1v1h-1zM97.07,626.25h1v1h-1zM109.56,626.25h1v1h-1zM122.04,626.25h1v1h-1zM134.52,626.25h1v1h-1zM147.00,626.25h1v1h-1zM159.48,626.25h1v1h-1zM171.97,626.25h1v1h-1zM184.45,626.25h1v1h-1zM196.93,626.25h1v1h-1zM209.41,626.25h1v1h-1zM221.89,626.25h1v1h-1zM234.38,626.25h1v1h-1zM246.86,626.25h1v1h-1zM259.34,626.25h1v1h-1zM271.82,626.25h1v1h-1zM284.30,626.25h1v1h-1zM296.79,626.25h1v1h-1zM309.27,626.25h1v1h-1zM321.75,626.25h1v1h-1zM334.23,626.25h1v1h-1zM346.71,626.25h1v1h-1zM359.20,626.25h1v1h-1zM371.68,626.25h1v1h-1zM384.16,626.25h1v1h-1zM396.64,626.25h1v1h-1zM409.12,626.25h1v1h-1zM421.61,626.25h1v1h-1zM434.09,626.25h1v1h-1zM446.57,626.25h1v1h-1zM459.05,626.25h1v1h-1zM471.53,626.25h1v1h-1zM484.02,626.25h1v1h-1zM496.50,626.25h1v1h-1zM508.98,626.25h1v1h-1zM521.46,626.25h1v1h-1zM533.94,626.25h1v1h-1zM546.43,626.25h1v1h-1zM558.91,626.25h1v1h-1zM571.39,626.25h1v1h-1zM583.87,626.25h1v1h-1zM596.35,626.25h1v1h-1zM608.84,626.25h1v1h-1zM621.32,626.25h1v1h-1zM633.80,626.25h1v1h-1zM646.28,626.25h1v1h-1zM658.76,626.25h1v1h-1zM671.25,626.25h1v1h-1zM683.73,626.25h1v1h-1zM696.21,626.25h1v1h-1zM708.69,626.25h1v1h-1zM721.17,626.25h1v1h-1zM733.66,626.25h1v1h-1zM746.14,626.25h1v1h-1zM758.62,626.25h1v1h-1zM771.10,626.25h1v1h-1zM783.58,626.25h1v1h-1zM796.07,626.25h1v1h-1zM808.55,626.25h1v1h-1zM821.03,626.25h1v1h-1zM833.51,626.25h1v1h-1zM845.99,626.25h1v1h-1zM858.48,626.25h1v1h-1zM870.96,626.25h1v1h-1zM883.44,626.25h1v1h-1zM895.92,626.25h1v1h-1zM908.40,626.25h1v1h-1zM920.89,626.25h1v1h-1zM933.37,626.25h1v1h-1zM945.85,626.25h1v1h-1zM958.33,626.25h1v1h-1zM970.81,626.25h1v1h-1zM983.30,626.25h1v1h-1zM995.78,626.25h1v1h-1zM1008.26,626.25h1v1h-1zM1020.74,626.25h1v1h-1zM1033.22,626.25h1v1h-1zM1045.71,626.25h1v1h-1zM1058.19,626.25h1v1h-1zM1070.67,626.25h1v1h-1zM1083.15,626.25h1v1h-1zM1095.63,626.25h1v1h-1zM1108.12,626.25h1v1h-1zM1120.60,626.25h1v1h-1zM1133.08,626.25h1v1h-1zM1145.56,626.25h1v1h-1zM1158.04,626.25h1v1h-1zM1170.53,626.25h1v1h-1zM1183.01,626.25h1v1h-1zM1195.49,626.25h1v1h-1zM1207.97,626.25h1v1h-1zM9.70,638.73h1v1h-1zM22.18,638.73h1v1h-1zM34.66,638.73h1v1h-1zM47.15,638.73h1v1h-1zM59.63,638.73h1v1h-1zM72.11,638.73h1v1h-1zM84.59,638.73h1v1h-1zM97.07,638.73h1v1h-1zM109.56,638.73h1v1h-1zM122.04,638.73h1v1h-1zM134.52,638.73h1v1h-1zM147.00,638.73h1v1h-1zM159.48,638.73h1v1h-1zM171.97,638.73h1v1h-1zM184.45,638.73h1v1h-1zM196.93,638.73h1v1h-1zM209.41,638.73h1v1h-1zM221.89,638.73h1v1h-1zM234.38,638.73h1v1h-1zM246.86,638.73h1v1h-1zM259.34,638.73h1v1h-1zM271.82,638.73h1v1h-1zM284.30,638.73h1v1h-1zM296.79,638.73h1v1h-1zM309.27,638.73h1v1h-1zM321.75,638.73h1v1h-1zM334.23,638.73h1v1h-1zM346.71,638.73h1v1h-1zM359.20,638.73h1v1h-1zM371.68,638.73h1v1h-1zM384.16,638.73h1v1h-1zM396.64,638.73h1v1h-1zM409.12,638.73h1v1h-1zM421.61,638.73h1v1h-1zM434.09,638.73h1v1h-1zM446.57,638.73h1v1h-1zM459.05,638.73h1v1h-1zM471.53,638.73h1v1h-1zM484.02,638.73h1v1h-1zM496.50,638.73h1v1h-1zM508.98,638.73h1v1h-1zM521.46,638.73h1v1h-1zM533.94,638.73h1v1h-1zM546.43,638.73h1v1h-1zM558.91,638.73h1v1h-1zM571.39,638.73h1v1h-1zM583.87,638.73h1v1h-1zM596.35,638.73h1v1h-1zM608.84,638.73h1v1h-1zM621.32,638.73h1v1h-1zM633.80,638.73h1v1h-1zM646.28,638.73h1v1h-1zM658.76,638.73h1v1h-1zM671.25,638.73h1v1h-1zM683.73,638.73h1v1h-1zM696.21,638.73h1v1h-1zM708.69,638.73h1v1h-1zM721.17,638.73h1v1h-1zM733.66,638.73h1v1h-1zM746.14,638.73h1v1h-1zM758.62,638.73h1v1h-1zM771.10,638.73h1v1h-1zM783.58,638.73h1v1h-1zM796.07,638.73h1v1h-1zM808.55,638.73h1v1h-1zM821.03,638.73h1v1h-1zM833.51,638.73h1v1h-1zM845.99,638.73h1v1h-1zM858.48,638.73h1v1h-1zM870.96,638.73h1v1h-1zM883.44,638.73h1v1h-1zM895.92,638.73h1v1h-1zM908.40,638.73h1v1h-1zM920.89,638.73h1v1h-1zM933.37,638.73h1v1h-1zM945.85,638.73h1v1h-1zM958.33,638.73h1v1h-1zM970.81,638.73h1v1h-1zM983.30,638.73h1v1h-1zM995.78,638.73h1v1h-1zM1008.26,638.73h1v1h-1zM1020.74,638.73h1v1h-1zM1033.22,638.73h1v1h-1zM1045.71,638.73h1v1h-1zM1058.19,638.73h1v1h-1zM1070.67,638.73h1v1h-1zM1083.15,638.73h1v1h-1zM1095.63,638.73h1v1h-1zM1108.12,638.73h1v1h-1zM1120.60,638.73h1v1h-1zM1133.08,638.73h1v1h-1zM1145.56,638.73h1v1h-1zM1158.04,638.73h1v1h-1zM1170.53,638.73h1v1h-1zM1183.01,638.73h1v1h-1zM1195.49,638.73h1v1h-1zM1207.97,638.73h1v1h-1zM9.70,651.21h1v1h-1zM22.18,651.21h1v1h-1zM34.66,651.21h1v1h-1zM47.15,651.21h1v1h-1zM59.63,651.21h1v1h-1zM72.11,651.21h1v1h-1zM84.59,651.21h1v1h-1zM97.07,651.21h1v1h-1zM109.56,651.21h1v1h-1zM122.04,651.21h1v1h-1zM134.52,651.21h1v1h-1zM147.00,651.21h1v1h-1zM159.48,651.21h1v1h-1zM171.97,651.21h1v1h-1zM184.45,651.21h1v1h-1zM196.93,651.21h1v1h-1zM209.41,651.21h1v1h-1zM221.89,651.21h1v1h-1zM234.38,651.21h1v1h-1zM246.86,651.21h1v1h-1zM259.34,651.21h1v1h-1zM271.82,651.21h1v1h-1zM284.30,651.21h1v1h-1zM296.79,651.21h1v1h-1zM309.27,651.21h1v1h-1zM321.75,651.21h1v1h-1zM334.23,651.21h1v1h-1zM346.71,651.21h1v1h-1zM359.20,651.21h1v1h-1zM371.68,651.21h1v1h-1zM384.16,651.21h1v1h-1zM396.64,651.21h1v1h-1zM409.12,651.21h1v1h-1zM421.61,651.21h1v1h-1zM434.09,651.21h1v1h-1zM446.57,651.21h1v1h-1zM459.05,651.21h1v1h-1zM471.53,651.21h1v1h-1zM484.02,651.21h1v1h-1zM496.50,651.21h1v1h-1zM508.98,651.21h1v1h-1zM521.46,651.21h1v1h-1zM533.94,651.21h1v1h-1zM546.43,651.21h1v1h-1zM558.91,651.21h1v1h-1zM571.39,651.21h1v1h-1zM583.87,651.21h1v1h-1zM596.35,651.21h1v1h-1zM608.84,651.21h1v1h-1zM621.32,651.21h1v1h-1zM633.80,651.21h1v1h-1zM646.28,651.21h1v1h-1zM658.76,651.21h1v1h-1zM671.25,651.21h1v1h-1zM683.73,651.21h1v1h-1zM696.21,651.21h1v1h-1zM708.69,651.21h1v1h-1zM721.17,651.21h1v1h-1zM733.66,651.21h1v1h-1zM746.14,651.21h1v1h-1zM758.62,651.21h1v1h-1zM771.10,651.21h1v1h-1zM783.58,651.21h1v1h-1zM796.07,651.21h1v1h-1zM808.55,651.21h1v1h-1zM821.03,651.21h1v1h-1zM833.51,651.21h1v1h-1zM845.99,651.21h1v1h-1zM858.48,651.21h1v1h-1zM870.96,651.21h1v1h-1zM883.44,651.21h1v1h-1zM895.92,651.21h1v1h-1zM908.40,651.21h1v1h-1zM920.89,651.21h1v1h-1zM933.37,651.21h1v1h-1zM945.85,651.21h1v1h-1zM958.33,651.21h1v1h-1zM970.81,651.21h1v1h-1zM983.30,651.21h1v1h-1zM995.78,651.21h1v1h-1zM1008.26,651.21h1v1h-1zM1020.74,651.21h1v1h-1zM1033.22,651.21h1v1h-1zM1045.71,651.21h1v1h-1zM1058.19,651.21h1v1h-1zM1070.67,651.21h1v1h-1zM1083.15,651.21h1v1h-1zM1095.63,651.21h1v1h-1zM1108.12,651.21h1v1h-1zM1120.60,651.21h1v1h-1zM1133.08,651.21h1v1h-1zM1145.56,651.21h1v1h-1zM1158.04,651.21h1v1h-1zM1170.53,651.21h1v1h-1zM1183.01,651.21h1v1h-1zM1195.49,651.21h1v1h-1zM1207.97,651.21h1v1h-1zM9.70,663.70h1v1h-1zM22.18,663.70h1v1h-1zM34.66,663.70h1v1h-1zM59.63,663.70h1v1h-1zM72.11,663.70h1v1h-1zM84.59,663.70h1v1h-1zM97.07,663.70h1v1h-1zM122.04,663.70h1v1h-1zM134.52,663.70h1v1h-1zM147.00,663.70h1v1h-1zM159.48,663.70h1v1h-1zM184.45,663.70h1v1h-1zM196.93,663.70h1v1h-1zM209.41,663.70h1v1h-1zM221.89,663.70h1v1h-1zM246.86,663.70h1v1h-1zM259.34,663.70h1v1h-1zM271.82,663.70h1v1h-1zM284.30,663.70h1v1h-1zM309.27,663.70h1v1h-1zM321.75,663.70h1v1h-1zM334.23,663.70h1v1h-1zM346.71,663.70h1v1h-1zM371.68,663.70h1v1h-1zM384.16,663.70h1v1h-1zM396.64,663.70h1v1h-1zM409.12,663.70h1v1h-1zM434.09,663.70h1v1h-1zM446.57,663.70h1v1h-1zM459.05,663.70h1v1h-1zM471.53,663.70h1v1h-1zM496.50,663.70h1v1h-1zM508.98,663.70h1v1h-1zM521.46,663.70h1v1h-1zM533.94,663.70h1v1h-1zM558.91,663.70h1v1h-1zM571.39,663.70h1v1h-1zM583.87,663.70h1v1h-1zM596.35,663.70h1v1h-1zM621.32,663.70h1v1h-1zM633.80,663.70h1v1h-1zM646.28,663.70h1v1h-1zM658.76,663.70h1v1h-1zM683.73,663.70h1v1h-1zM696.21,663.70h1v1h-1zM708.69,663.70h1v1h-1zM721.17,663.70h1v1h-1zM746.14,663.70h1v1h-1zM758.62,663.70h1v1h-1zM771.10,663.70h1v1h-1zM783.58,663.70h1v1h-1zM808.55,663.70h1v1h-1zM821.03,663.70h1v1h-1zM833.51,663.70h1v1h-1zM845.99,663.70h1v1h-1zM870.96,663.70h1v1h-1zM883.44,663.70h1v1h-1zM895.92,663.70h1v1h-1zM908.40,663.70h1v1h-1zM933.37,663.70h1v1h-1zM945.85,663.70h1v1h-1zM958.33,663.70h1v1h-1zM970.81,663.70h1v1h-1zM995.78,663.70h1v1h-1zM1008.26,663.70h1v1h-1zM1020.74,663.70h1v1h-1zM1033.22,663.70h1v1h-1zM1058.19,663.70h1v1h-1zM1070.67,663.70h1v1h-1zM1083.15,663.70h1v1h-1zM1095.63,663.70h1v1h-1zM1120.60,663.70h1v1h-1zM1133.08,663.70h1v1h-1zM1145.56,663.70h1v1h-1zM1158.04,663.70h1v1h-1zM1183.01,663.70h1v1h-1zM1195.49,663.70h1v1h-1zM1207.97,663.70h1v1h-1zM9.70,676.18h1v1h-1zM22.18,676.18h1v1h-1zM34.66,676.18h1v1h-1zM47.15,676.18h1v1h-1zM59.63,676.18h1v1h-1zM72.11,676.18h1v1h-1zM84.59,676.18h1v1h-1zM97.07,676.18h1v1h-1zM109.56,676.18h1v1h-1zM122.04,676.18h1v1h-1zM134.52,676.18h1v1h-1zM147.00,676.18h1v1h-1zM159.48,676.18h1v1h-1zM171.97,676.18h1v1h-1zM184.45,676.18h1v1h-1zM196.93,676.18h1v1h-1zM209.41,676.18h1v1h-1zM221.89,676.18h1v1h-1zM234.38,676.18h1v1h-1zM246.86,676.18h1v1h-1zM259.34,676.18h1v1h-1zM271.82,676.18h1v1h-1zM284.30,676.18h1v1h-1zM296.79,676.18h1v1h-1zM309.27,676.18h1v1h-1zM321.75,676.18h1v1h-1zM334.23,676.18h1v1h-1zM346.71,676.18h1v1h-1zM359.20,676.18h1v1h-1zM371.68,676.18h1v1h-1zM384.16,676.18h1v1h-1zM396.64,676.18h1v1h-1zM409.12,676.18h1v1h-1zM421.61,676.18h1v1h-1zM434.09,676.18h1v1h-1zM446.57,676.18h1v1h-1zM459.05,676.18h1v1h-1zM471.53,676.18h1v1h-1zM484.02,676.18h1v1h-1zM496.50,676.18h1v1h-1zM508.98,676.18h1v1h-1zM521.46,676.18h1v1h-1zM533.94,676.18h1v1h-1zM546.43,676.18h1v1h-1zM558.91,676.18h1v1h-1zM571.39,676.18h1v1h-1zM583.87,676.18h1v1h-1zM596.35,676.18h1v1h-1zM608.84,676.18h1v1h-1zM621.32,676.18h1v1h-1zM633.80,676.18h1v1h-1zM646.28,676.18h1v1h-1zM658.76,676.18h1v1h-1zM671.25,676.18h1v1h-1zM683.73,676.18h1v1h-1zM696.21,676.18h1v1h-1zM708.69,676.18h1v1h-1zM721.17,676.18h1v1h-1zM733.66,676.18h1v1h-1zM746.14,676.18h1v1h-1zM758.62,676.18h1v1h-1zM771.10,676.18h1v1h-1zM783.58,676.18h1v1h-1zM796.07,676.18h1v1h-1zM808.55,676.18h1v1h-1zM821.03,676.18h1v1h-1zM833.51,676.18h1v1h-1zM845.99,676.18h1v1h-1zM858.48,676.18h1v1h-1zM870.96,676.18h1v1h-1zM883.44,676.18h1v1h-1zM895.92,676.18h1v1h-1zM908.40,676.18h1v1h-1zM920.89,676.18h1v1h-1zM933.37,676.18h1v1h-1zM945.85,676.18h1v1h-1zM958.33,676.18h1v1h-1zM970.81,676.18h1v1h-1zM983.30,676.18h1v1h-1zM995.78,676.18h1v1h-1zM1008.26,676.18h1v1h-1zM1020.74,676.18h1v1h-1zM1033.22,676.18h1v1h-1zM1045.71,676.18h1v1h-1zM1058.19,676.18h1v1h-1zM1070.67,676.18h1v1h-1zM1083.15,676.18h1v1h-1zM1095.63,676.18h1v1h-1zM1108.12,676.18h1v1h-1zM1120.60,676.18h1v1h-1zM1133.08,676.18h1v1h-1zM1145.56,676.18h1v1h-1zM1158.04,676.18h1v1h-1zM1170.53,676.18h1v1h-1zM1183.01,676.18h1v1h-1zM1195.49,676.18h1v1h-1zM1207.97,676.18h1v1h-1zM9.70,688.66h1v1h-1zM22.18,688.66h1v1h-1zM34.66,688.66h1v1h-1zM47.15,688.66h1v1h-1zM59.63,688.66h1v1h-1zM72.11,688.66h1v1h-1zM84.59,688.66h1v1h-1zM97.07,688.66h1v1h-1zM109.56,688.66h1v1h-1zM122.04,688.66h1v1h-1zM134.52,688.66h1v1h-1zM147.00,688.66h1v1h-1zM159.48,688.66h1v1h-1zM171.97,688.66h1v1h-1zM184.45,688.66h1v1h-1zM196.93,688.66h1v1h-1zM209.41,688.66h1v1h-1zM221.89,688.66h1v1h-1zM234.38,688.66h1v1h-1zM246.86,688.66h1v1h-1zM259.34,688.66h1v1h-1zM271.82,688.66h1v1h-1zM284.30,688.66h1v1h-1zM296.79,688.66h1v1h-1zM309.27,688.66h1v1h-1zM321.75,688.66h1v1h-1zM334.23,688.66h1v1h-1zM346.71,688.66h1v1h-1zM359.20,688.66h1v1h-1zM371.68,688.66h1v1h-1zM384.16,688.66h1v1h-1zM396.64,688.66h1v1h-1zM409.12,688.66h1v1h-1zM421.61,688.66h1v1h-1zM434.09,688.66h1v1h-1zM446.57,688.66h1v1h-1zM459.05,688.66h1v1h-1zM471.53,688.66h1v1h-1zM484.02,688.66h1v1h-1zM496.50,688.66h1v1h-1zM508.98,688.66h1v1h-1zM521.46,688.66h1v1h-1zM533.94,688.66h1v1h-1zM546.43,688.66h1v1h-1zM558.91,688.66h1v1h-1zM571.39,688.66h1v1h-1zM583.87,688.66h1v1h-1zM596.35,688.66h1v1h-1zM608.84,688.66h1v1h-1zM621.32,688.66h1v1h-1zM633.80,688.66h1v1h-1zM646.28,688.66h1v1h-1zM658.76,688.66h1v1h-1zM671.25,688.66h1v1h-1zM683.73,688.66h1v1h-1zM696.21,688.66h1v1h-1zM708.69,688.66h1v1h-1zM721.17,688.66h1v1h-1zM733.66,688.66h1v1h-1zM746.14,688.66h1v1h-1zM758.62,688.66h1v1h-1zM771.10,688.66h1v1h-1zM783.58,688.66h1v1h-1zM796.07,688.66h1v1h-1zM808.55,688.66h1v1h-1zM821.03,688.66h1v1h-1zM833.51,688.66h1v1h-1zM845.99,688.66h1v1h-1zM858.48,688.66h1v1h-1zM870.96,688.66h1v1h-1zM883.44,688.66h1v1h-1zM895.92,688.66h1v1h-1zM908.40,688.66h1v1h-1zM920.89,688.66h1v1h-1zM933.37,688.66h1v1h-1zM945.85,688.66h1v1h-1zM958.33,688.66h1v1h-1zM970.81,688.66h1v1h-1zM983.30,688.66h1v1h-1zM995.78,688.66h1v1h-1zM1008.26,688.66h1v1h-1zM1020.74,688.66h1v1h-1zM1033.22,688.66h1v1h-1zM1045.71,688.66h1v1h-1zM1058.19,688.66h1v1h-1zM1070.67,688.66h1v1h-1zM1083.15,688.66h1v1h-1zM1095.63,688.66h1v1h-1zM1108.12,688.66h1v1h-1zM1120.60,688.66h1v1h-1zM1133.08,688.66h1v1h-1zM1145.56,688.66h1v1h-1zM1158.04,688.66h1v1h-1zM1170.53,688.66h1v1h-1zM1183.01,688.66h1v1h-1zM1195.49,688.66h1v1h-1zM1207.97,688.66h1v1h-1zM9.70,701.14h1v1h-1zM22.18,701.14h1v1h-1zM34.66,701.14h1v1h-1zM47.15,701.14h1v1h-1zM59.63,701.14h1v1h-1zM72.11,701.14h1v1h-1zM84.59,701.14h1v1h-1zM97.07,701.14h1v1h-1zM109.56,701.14h1v1h-1zM122.04,701.14h1v1h-1zM134.52,701.14h1v1h-1zM147.00,701.14h1v1h-1zM159.48,701.14h1v1h-1zM171.97,701.14h1v1h-1zM184.45,701.14h1v1h-1zM196.93,701.14h1v1h-1zM209.41,701.14h1v1h-1zM221.89,701.14h1v1h-1zM234.38,701.14h1v1h-1zM246.86,701.14h1v1h-1zM259.34,701.14h1v1h-1zM271.82,701.14h1v1h-1zM284.30,701.14h1v1h-1zM296.79,701.14h1v1h-1zM309.27,701.14h1v1h-1zM321.75,701.14h1v1h-1zM334.23,701.14h1v1h-1zM346.71,701.14h1v1h-1zM359.20,701.14h1v1h-1zM371.68,701.14h1v1h-1zM384.16,701.14h1v1h-1zM396.64,701.14h1v1h-1zM409.12,701.14h1v1h-1zM421.61,701.14h1v1h-1zM434.09,701.14h1v1h-1zM446.57,701.14h1v1h-1zM459.05,701.14h1v1h-1zM471.53,701.14h1v1h-1zM484.02,701.14h1v1h-1zM496.50,701.14h1v1h-1zM508.98,701.14h1v1h-1zM521.46,701.14h1v1h-1zM533.94,701.14h1v1h-1zM546.43,701.14h1v1h-1zM558.91,701.14h1v1h-1zM571.39,701.14h1v1h-1zM583.87,701.14h1v1h-1zM596.35,701.14h1v1h-1zM608.84,701.14h1v1h-1zM621.32,701.14h1v1h-1zM633.80,701.14h1v1h-1zM646.28,701.14h1v1h-1zM658.76,701.14h1v1h-1zM671.25,701.14h1v1h-1zM683.73,701.14h1v1h-1zM696.21,701.14h1v1h-1zM708.69,701.14h1v1h-1zM721.17,701.14h1v1h-1zM733.66,701.14h1v1h-1zM746.14,701.14h1v1h-1zM758.62,701.14h1v1h-1zM771.10,701.14h1v1h-1zM783.58,701.14h1v1h-1zM796.07,701.14h1v1h-1zM808.55,701.14h1v1h-1zM821.03,701.14h1v1h-1zM833.51,701.14h1v1h-1zM845.99,701.14h1v1h-1zM858.48,701.14h1v1h-1zM870.96,701.14h1v1h-1zM883.44,701.14h1v1h-1zM895.92,701.14h1v1h-1zM908.40,701.14h1v1h-1zM920.89,701.14h1v1h-1zM933.37,701.14h1v1h-1zM945.85,701.14h1v1h-1zM958.33,701.14h1v1h-1zM970.81,701.14h1v1h-1zM983.30,701.14h1v1h-1zM995.78,701.14h1v1h-1zM1008.26,701.14h1v1h-1zM1020.74,701.14h1v1h-1zM1033.22,701.14h1v1h-1zM1045.71,701.14h1v1h-1zM1058.19,701.14h1v1h-1zM1070.67,701.14h1v1h-1zM1083.15,701.14h1v1h-1zM1095.63,701.14h1v1h-1zM1108.12,701.14h1v1h-1zM1120.60,701.14h1v1h-1zM1133.08,701.14h1v1h-1zM1145.56,701.14h1v1h-1zM1158.04,701.14h1v1h-1zM1170.53,701.14h1v1h-1zM1183.01,701.14h1v1h-1zM1195.49,701.14h1v1h-1zM1207.97,701.14h1v1h-1zM9.70,713.62h1v1h-1zM22.18,713.62h1v1h-1zM34.66,713.62h1v1h-1zM47.15,713.62h1v1h-1zM59.63,713.62h1v1h-1zM72.11,713.62h1v1h-1zM84.59,713.62h1v1h-1zM97.07,713.62h1v1h-1zM109.56,713.62h1v1h-1zM122.04,713.62h1v1h-1zM134.52,713.62h1v1h-1zM147.00,713.62h1v1h-1zM159.48,713.62h1v1h-1zM171.97,713.62h1v1h-1zM184.45,713.62h1v1h-1zM196.93,713.62h1v1h-1zM209.41,713.62h1v1h-1zM221.89,713.62h1v1h-1zM234.38,713.62h1v1h-1zM246.86,713.62h1v1h-1zM259.34,713.62h1v1h-1zM271.82,713.62h1v1h-1zM284.30,713.62h1v1h-1zM296.79,713.62h1v1h-1zM309.27,713.62h1v1h-1zM321.75,713.62h1v1h-1zM334.23,713.62h1v1h-1zM346.71,713.62h1v1h-1zM359.20,713.62h1v1h-1zM371.68,713.62h1v1h-1zM384.16,713.62h1v1h-1zM396.64,713.62h1v1h-1zM409.12,713.62h1v1h-1zM421.61,713.62h1v1h-1zM434.09,713.62h1v1h-1zM446.57,713.62h1v1h-1zM459.05,713.62h1v1h-1zM471.53,713.62h1v1h-1zM484.02,713.62h1v1h-1zM496.50,713.62h1v1h-1zM508.98,713.62h1v1h-1zM521.46,713.62h1v1h-1zM533.94,713.62h1v1h-1zM546.43,713.62h1v1h-1zM558.91,713.62h1v1h-1zM571.39,713.62h1v1h-1zM583.87,713.62h1v1h-1zM596.35,713.62h1v1h-1zM608.84,713.62h1v1h-1zM621.32,713.62h1v1h-1zM633.80,713.62h1v1h-1zM646.28,713.62h1v1h-1zM658.76,713.62h1v1h-1zM671.25,713.62h1v1h-1zM683.73,713.62h1v1h-1zM696.21,713.62h1v1h-1zM708.69,713.62h1v1h-1zM721.17,713.62h1v1h-1zM733.66,713.62h1v1h-1zM746.14,713.62h1v1h-1zM758.62,713.62h1v1h-1zM771.10,713.62h1v1h-1zM783.58,713.62h1v1h-1zM796.07,713.62h1v1h-1zM808.55,713.62h1v1h-1zM821.03,713.62h1v1h-1zM833.51,713.62h1v1h-1zM845.99,713.62h1v1h-1zM858.48,713.62h1v1h-1zM870.96,713.62h1v1h-1zM883.44,713.62h1v1h-1zM895.92,713.62h1v1h-1zM908.40,713.62h1v1h-1zM920.89,713.62h1v1h-1zM933.37,713.62h1v1h-1zM945.85,713.62h1v1h-1zM958.33,713.62h1v1h-1zM970.81,713.62h1v1h-1zM983.30,713.62h1v1h-1zM995.78,713.62h1v1h-1zM1008.26,713.62h1v1h-1zM1020.74,713.62h1v1h-1zM1033.22,713.62h1v1h-1zM1045.71,713.62h1v1h-1zM1058.19,713.62h1v1h-1zM1070.67,713.62h1v1h-1zM1083.15,713.62h1v1h-1zM1095.63,713.62h1v1h-1zM1108.12,713.62h1v1h-1zM1120.60,713.62h1v1h-1zM1133.08,713.62h1v1h-1zM1145.56,713.62h1v1h-1zM1158.04,713.62h1v1h-1zM1170.53,713.62h1v1h-1zM1183.01,713.62h1v1h-1zM1195.49,713.62h1v1h-1zM1207.97,713.62h1v1h-1zM9.70,726.11h1v1h-1zM22.18,726.11h1v1h-1zM34.66,726.11h1v1h-1zM59.63,726.11h1v1h-1zM72.11,726.11h1v1h-1zM84.59,726.11h1v1h-1zM97.07,726.11h1v1h-1zM122.04,726.11h1v1h-1zM134.52,726.11h1v1h-1zM147.00,726.11h1v1h-1zM159.48,726.11h1v1h-1zM184.45,726.11h1v1h-1zM196.93,726.11h1v1h-1zM209.41,726.11h1v1h-1zM221.89,726.11h1v1h-1zM246.86,726.11h1v1h-1zM259.34,726.11h1v1h-1zM271.82,726.11h1v1h-1zM284.30,726.11h1v1h-1zM309.27,726.11h1v1h-1zM321.75,726.11h1v1h-1zM334.23,726.11h1v1h-1zM346.71,726.11h1v1h-1zM371.68,726.11h1v1h-1zM384.16,726.11h1v1h-1zM396.64,726.11h1v1h-1zM409.12,726.11h1v1h-1zM434.09,726.11h1v1h-1zM446.57,726.11h1v1h-1zM459.05,726.11h1v1h-1zM471.53,726.11h1v1h-1zM496.50,726.11h1v1h-1zM508.98,726.11h1v1h-1zM521.46,726.11h1v1h-1zM533.94,726.11h1v1h-1zM558.91,726.11h1v1h-1zM571.39,726.11h1v1h-1zM583.87,726.11h1v1h-1zM596.35,726.11h1v1h-1zM621.32,726.11h1v1h-1zM633.80,726.11h1v1h-1zM646.28,726.11h1v1h-1zM658.76,726.11h1v1h-1zM683.73,726.11h1v1h-1zM696.21,726.11h1v1h-1zM708.69,726.11h1v1h-1zM721.17,726.11h1v1h-1zM746.14,726.11h1v1h-1zM758.62,726.11h1v1h-1zM771.10,726.11h1v1h-1zM783.58,726.11h1v1h-1zM808.55,726.11h1v1h-1zM821.03,726.11h1v1h-1zM833.51,726.11h1v1h-1zM845.99,726.11h1v1h-1zM870.96,726.11h1v1h-1zM883.44,726.11h1v1h-1zM895.92,726.11h1v1h-1zM908.40,726.11h1v1h-1zM933.37,726.11h1v1h-1zM945.85,726.11h1v1h-1zM958.33,726.11h1v1h-1zM970.81,726.11h1v1h-1zM995.78,726.11h1v1h-1zM1008.26,726.11h1v1h-1zM1020.74,726.11h1v1h-1zM1033.22,726.11h1v1h-1zM1058.19,726.11h1v1h-1zM1070.67,726.11h1v1h-1zM1083.15,726.11h1v1h-1zM1095.63,726.11h1v1h-1zM1120.60,726.11h1v1h-1zM1133.08,726.11h1v1h-1zM1145.56,726.11h1v1h-1zM1158.04,726.11h1v1h-1zM1183.01,726.11h1v1h-1zM1195.49,726.11h1v1h-1zM1207.97,726.11h1v1h-1zM9.70,738.59h1v1h-1zM22.18,738.59h1v1h-1zM34.66,738.59h1v1h-1zM47.15,738.59h1v1h-1zM59.63,738.59h1v1h-1zM72.11,738.59h1v1h-1zM84.59,738.59h1v1h-1zM97.07,738.59h1v1h-1zM109.56,738.59h1v1h-1zM122.04,738.59h1v1h-1zM134.52,738.59h1v1h-1zM147.00,738.59h1v1h-1zM159.48,738.59h1v1h-1zM171.97,738.59h1v1h-1zM184.45,738.59h1v1h-1zM196.93,738.59h1v1h-1zM209.41,738.59h1v1h-1zM221.89,738.59h1v1h-1zM234.38,738.59h1v1h-1zM246.86,738.59h1v1h-1zM259.34,738.59h1v1h-1zM271.82,738.59h1v1h-1zM284.30,738.59h1v1h-1zM296.79,738.59h1v1h-1zM309.27,738.59h1v1h-1zM321.75,738.59h1v1h-1zM334.23,738.59h1v1h-1zM346.71,738.59h1v1h-1zM359.20,738.59h1v1h-1zM371.68,738.59h1v1h-1zM384.16,738.59h1v1h-1zM396.64,738.59h1v1h-1zM409.12,738.59h1v1h-1zM421.61,738.59h1v1h-1zM434.09,738.59h1v1h-1zM446.57,738.59h1v1h-1zM459.05,738.59h1v1h-1zM471.53,738.59h1v1h-1zM484.02,738.59h1v1h-1zM496.50,738.59h1v1h-1zM508.98,738.59h1v1h-1zM521.46,738.59h1v1h-1zM533.94,738.59h1v1h-1zM546.43,738.59h1v1h-1zM558.91,738.59h1v1h-1zM571.39,738.59h1v1h-1zM583.87,738.59h1v1h-1zM596.35,738.59h1v1h-1zM608.84,738.59h1v1h-1zM621.32,738.59h1v1h-1zM633.80,738.59h1v1h-1zM646.28,738.59h1v1h-1zM658.76,738.59h1v1h-1zM671.25,738.59h1v1h-1zM683.73,738.59h1v1h-1zM696.21,738.59h1v1h-1zM708.69,738.59h1v1h-1zM721.17,738.59h1v1h-1zM733.66,738.59h1v1h-1zM746.14,738.59h1v1h-1zM758.62,738.59h1v1h-1zM771.10,738.59h1v1h-1zM783.58,738.59h1v1h-1zM796.07,738.59h1v1h-1zM808.55,738.59h1v1h-1zM821.03,738.59h1v1h-1zM833.51,738.59h1v1h-1zM845.99,738.59h1v1h-1zM858.48,738.59h1v1h-1zM870.96,738.59h1v1h-1zM883.44,738.59h1v1h-1zM895.92,738.59h1v1h-1zM908.40,738.59h1v1h-1zM920.89,738.59h1v1h-1zM933.37,738.59h1v1h-1zM945.85,738.59h1v1h-1zM958.33,738.59h1v1h-1zM970.81,738.59h1v1h-1zM983.30,738.59h1v1h-1zM995.78,738.59h1v1h-1zM1008.26,738.59h1v1h-1zM1020.74,738.59h1v1h-1zM1033.22,738.59h1v1h-1zM1045.71,738.59h1v1h-1zM1058.19,738.59h1v1h-1zM1070.67,738.59h1v1h-1zM1083.15,738.59h1v1h-1zM1095.63,738.59h1v1h-1zM1108.12,738.59h1v1h-1zM1120.60,738.59h1v1h-1zM1133.08,738.59h1v1h-1zM1145.56,738.59h1v1h-1zM1158.04,738.59h1v1h-1zM1170.53,738.59h1v1h-1zM1183.01,738.59h1v1h-1zM1195.49,738.59h1v1h-1zM1207.97,738.59h1v1h-1zM9.70,751.07h1v1h-1zM22.18,751.07h1v1h-1zM34.66,751.07h1v1h-1zM47.15,751.07h1v1h-1zM59.63,751.07h1v1h-1zM72.11,751.07h1v1h-1zM84.59,751.07h1v1h-1zM97.07,751.07h1v1h-1zM109.56,751.07h1v1h-1zM122.04,751.07h1v1h-1zM134.52,751.07h1v1h-1zM147.00,751.07h1v1h-1zM159.48,751.07h1v1h-1zM171.97,751.07h1v1h-1zM184.45,751.07h1v1h-1zM196.93,751.07h1v1h-1zM209.41,751.07h1v1h-1zM221.89,751.07h1v1h-1zM234.38,751.07h1v1h-1zM246.86,751.07h1v1h-1zM259.34,751.07h1v1h-1zM271.82,751.07h1v1h-1zM284.30,751.07h1v1h-1zM296.79,751.07h1v1h-1zM309.27,751.07h1v1h-1zM321.75,751.07h1v1h-1zM334.23,751.07h1v1h-1zM346.71,751.07h1v1h-1zM359.20,751.07h1v1h-1zM371.68,751.07h1v1h-1zM384.16,751.07h1v1h-1zM396.64,751.07h1v1h-1zM409.12,751.07h1v1h-1zM421.61,751.07h1v1h-1zM434.09,751.07h1v1h-1zM446.57,751.07h1v1h-1zM459.05,751.07h1v1h-1zM471.53,751.07h1v1h-1zM484.02,751.07h1v1h-1zM496.50,751.07h1v1h-1zM508.98,751.07h1v1h-1zM521.46,751.07h1v1h-1zM533.94,751.07h1v1h-1zM546.43,751.07h1v1h-1zM558.91,751.07h1v1h-1zM571.39,751.07h1v1h-1zM583.87,751.07h1v1h-1zM596.35,751.07h1v1h-1zM608.84,751.07h1v1h-1zM621.32,751.07h1v1h-1zM633.80,751.07h1v1h-1zM646.28,751.07h1v1h-1zM658.76,751.07h1v1h-1zM671.25,751.07h1v1h-1zM683.73,751.07h1v1h-1zM696.21,751.07h1v1h-1zM708.69,751.07h1v1h-1zM721.17,751.07h1v1h-1zM733.66,751.07h1v1h-1zM746.14,751.07h1v1h-1zM758.62,751.07h1v1h-1zM771.10,751.07h1v1h-1zM783.58,751.07h1v1h-1zM796.07,751.07h1v1h-1zM808.55,751.07h1v1h-1zM821.03,751.07h1v1h-1zM833.51,751.07h1v1h-1zM845.99,751.07h1v1h-1zM858.48,751.07h1v1h-1zM870.96,751.07h1v1h-1zM883.44,751.07h1v1h-1zM895.92,751.07h1v1h-1zM908.40,751.07h1v1h-1zM920.89,751.07h1v1h-1zM933.37,751.07h1v1h-1zM945.85,751.07h1v1h-1zM958.33,751.07h1v1h-1zM970.81,751.07h1v1h-1zM983.30,751.07h1v1h-1zM995.78,751.07h1v1h-1zM1008.26,751.07h1v1h-1zM1020.74,751.07h1v1h-1zM1033.22,751.07h1v1h-1zM1045.71,751.07h1v1h-1zM1058.19,751.07h1v1h-1zM1070.67,751.07h1v1h-1zM1083.15,751.07h1v1h-1zM1095.63,751.07h1v1h-1zM1108.12,751.07h1v1h-1zM1120.60,751.07h1v1h-1zM1133.08,751.07h1v1h-1zM1145.56,751.07h1v1h-1zM1158.04,751.07h1v1h-1zM1170.53,751.07h1v1h-1zM1183.01,751.07h1v1h-1zM1195.49,751.07h1v1h-1zM1207.97,751.07h1v1h-1zM9.70,763.55h1v1h-1zM22.18,763.55h1v1h-1zM34.66,763.55h1v1h-1zM47.15,763.55h1v1h-1zM59.63,763.55h1v1h-1zM72.11,763.55h1v1h-1zM84.59,763.55h1v1h-1zM97.07,763.55h1v1h-1zM109.56,763.55h1v1h-1zM122.04,763.55h1v1h-1zM134.52,763.55h1v1h-1zM147.00,763.55h1v1h-1zM159.48,763.55h1v1h-1zM171.97,763.55h1v1h-1zM184.45,763.55h1v1h-1zM196.93,763.55h1v1h-1zM209.41,763.55h1v1h-1zM221.89,763.55h1v1h-1zM234.38,763.55h1v1h-1zM246.86,763.55h1v1h-1zM259.34,763.55h1v1h-1zM271.82,763.55h1v1h-1zM284.30,763.55h1v1h-1zM296.79,763.55h1v1h-1zM309.27,763.55h1v1h-1zM321.75,763.55h1v1h-1zM334.23,763.55h1v1h-1zM346.71,763.55h1v1h-1zM359.20,763.55h1v1h-1zM371.68,763.55h1v1h-1zM384.16,763.55h1v1h-1zM396.64,763.55h1v1h-1zM409.12,763.55h1v1h-1zM421.61,763.55h1v1h-1zM434.09,763.55h1v1h-1zM446.57,763.55h1v1h-1zM459.05,763.55h1v1h-1zM471.53,763.55h1v1h-1zM484.02,763.55h1v1h-1zM496.50,763.55h1v1h-1zM508.98,763.55h1v1h-1zM521.46,763.55h1v1h-1zM533.94,763.55h1v1h-1zM546.43,763.55h1v1h-1zM558.91,763.55h1v1h-1zM571.39,763.55h1v1h-1zM583.87,763.55h1v1h-1zM596.35,763.55h1v1h-1zM608.84,763.55h1v1h-1zM621.32,763.55h1v1h-1zM633.80,763.55h1v1h-1zM646.28,763.55h1v1h-1zM658.76,763.55h1v1h-1zM671.25,763.55h1v1h-1zM683.73,763.55h1v1h-1zM696.21,763.55h1v1h-1zM708.69,763.55h1v1h-1zM721.17,763.55h1v1h-1zM733.66,763.55h1v1h-1zM746.14,763.55h1v1h-1zM758.62,763.55h1v1h-1zM771.10,763.55h1v1h-1zM783.58,763.55h1v1h-1zM796.07,763.55h1v1h-1zM808.55,763.55h1v1h-1zM821.03,763.55h1v1h-1zM833.51,763.55h1v1h-1zM845.99,763.55h1v1h-1zM858.48,763.55h1v1h-1zM870.96,763.55h1v1h-1zM883.44,763.55h1v1h-1zM895.92,763.55h1v1h-1zM908.40,763.55h1v1h-1zM920.89,763.55h1v1h-1zM933.37,763.55h1v1h-1zM945.85,763.55h1v1h-1zM958.33,763.55h1v1h-1zM970.81,763.55h1v1h-1zM983.30,763.55h1v1h-1zM995.78,763.55h1v1h-1zM1008.26,763.55h1v1h-1zM1020.74,763.55h1v1h-1zM1033.22,763.55h1v1h-1zM1045.71,763.55h1v1h-1zM1058.19,763.55h1v1h-1zM1070.67,763.55h1v1h-1zM1083.15,763.55h1v1h-1zM1095.63,763.55h1v1h-1zM1108.12,763.55h1v1h-1zM1120.60,763.55h1v1h-1zM1133.08,763.55h1v1h-1zM1145.56,763.55h1v1h-1zM1158.04,763.55h1v1h-1zM1170.53,763.55h1v1h-1zM1183.01,763.55h1v1h-1zM1195.49,763.55h1v1h-1zM1207.97,763.55h1v1h-1zM9.70,776.03h1v1h-1zM22.18,776.03h1v1h-1zM34.66,776.03h1v1h-1zM47.15,776.03h1v1h-1zM59.63,776.03h1v1h-1zM72.11,776.03h1v1h-1zM84.59,776.03h1v1h-1zM97.07,776.03h1v1h-1zM109.56,776.03h1v1h-1zM122.04,776.03h1v1h-1zM134.52,776.03h1v1h-1zM147.00,776.03h1v1h-1zM159.48,776.03h1v1h-1zM171.97,776.03h1v1h-1zM184.45,776.03h1v1h-1zM196.93,776.03h1v1h-1zM209.41,776.03h1v1h-1zM221.89,776.03h1v1h-1zM234.38,776.03h1v1h-1zM246.86,776.03h1v1h-1zM259.34,776.03h1v1h-1zM271.82,776.03h1v1h-1zM284.30,776.03h1v1h-1zM296.79,776.03h1v1h-1zM309.27,776.03h1v1h-1zM321.75,776.03h1v1h-1zM334.23,776.03h1v1h-1zM346.71,776.03h1v1h-1zM359.20,776.03h1v1h-1zM371.68,776.03h1v1h-1zM384.16,776.03h1v1h-1zM396.64,776.03h1v1h-1zM409.12,776.03h1v1h-1zM421.61,776.03h1v1h-1zM434.09,776.03h1v1h-1zM446.57,776.03h1v1h-1zM459.05,776.03h1v1h-1zM471.53,776.03h1v1h-1zM484.02,776.03h1v1h-1zM496.50,776.03h1v1h-1zM508.98,776.03h1v1h-1zM521.46,776.03h1v1h-1zM533.94,776.03h1v1h-1zM546.43,776.03h1v1h-1zM558.91,776.03h1v1h-1zM571.39,776.03h1v1h-1zM583.87,776.03h1v1h-1zM596.35,776.03h1v1h-1zM608.84,776.03h1v1h-1zM621.32,776.03h1v1h-1zM633.80,776.03h1v1h-1zM646.28,776.03h1v1h-1zM658.76,776.03h1v1h-1zM671.25,776.03h1v1h-1zM683.73,776.03h1v1h-1zM696.21,776.03h1v1h-1zM708.69,776.03h1v1h-1zM721.17,776.03h1v1h-1zM733.66,776.03h1v1h-1zM746.14,776.03h1v1h-1zM758.62,776.03h1v1h-1zM771.10,776.03h1v1h-1zM783.58,776.03h1v1h-1zM796.07,776.03h1v1h-1zM808.55,776.03h1v1h-1zM821.03,776.03h1v1h-1zM833.51,776.03h1v1h-1zM845.99,776.03h1v1h-1zM858.48,776.03h1v1h-1zM870.96,776.03h1v1h-1zM883.44,776.03h1v1h-1zM895.92,776.03h1v1h-1zM908.40,776.03h1v1h-1zM920.89,776.03h1v1h-1zM933.37,776.03h1v1h-1zM945.85,776.03h1v1h-1zM958.33,776.03h1v1h-1zM970.81,776.03h1v1h-1zM983.30,776.03h1v1h-1zM995.78,776.03h1v1h-1zM1008.26,776.03h1v1h-1zM1020.74,776.03h1v1h-1zM1033.22,776.03h1v1h-1zM1045.71,776.03h1v1h-1zM1058.19,776.03h1v1h-1zM1070.67,776.03h1v1h-1zM1083.15,776.03h1v1h-1zM1095.63,776.03h1v1h-1zM1108.12,776.03h1v1h-1zM1120.60,776.03h1v1h-1zM1133.08,776.03h1v1h-1zM1145.56,776.03h1v1h-1zM1158.04,776.03h1v1h-1zM1170.53,776.03h1v1h-1zM1183.01,776.03h1v1h-1zM1195.49,776.03h1v1h-1zM1207.97,776.03h1v1h-1zM9.70,788.52h1v1h-1zM22.18,788.52h1v1h-1zM34.66,788.52h1v1h-1zM59.63,788.52h1v1h-1zM72.11,788.52h1v1h-1zM84.59,788.52h1v1h-1zM97.07,788.52h1v1h-1zM122.04,788.52h1v1h-1zM134.52,788.52h1v1h-1zM147.00,788.52h1v1h-1zM159.48,788.52h1v1h-1zM184.45,788.52h1v1h-1zM196.93,788.52h1v1h-1zM209.41,788.52h1v1h-1zM221.89,788.52h1v1h-1zM246.86,788.52h1v1h-1zM259.34,788.52h1v1h-1zM271.82,788.52h1v1h-1zM284.30,788.52h1v1h-1zM309.27,788.52h1v1h-1zM321.75,788.52h1v1h-1zM334.23,788.52h1v1h-1zM346.71,788.52h1v1h-1zM371.68,788.52h1v1h-1zM384.16,788.52h1v1h-1zM396.64,788.52h1v1h-1zM409.12,788.52h1v1h-1zM434.09,788.52h1v1h-1zM446.57,788.52h1v1h-1zM459.05,788.52h1v1h-1zM471.53,788.52h1v1h-1zM496.50,788.52h1v1h-1zM508.98,788.52h1v1h-1zM521.46,788.52h1v1h-1zM533.94,788.52h1v1h-1zM558.91,788.52h1v1h-1zM571.39,788.52h1v1h-1zM583.87,788.52h1v1h-1zM596.35,788.52h1v1h-1zM621.32,788.52h1v1h-1zM633.80,788.52h1v1h-1zM646.28,788.52h1v1h-1zM658.76,788.52h1v1h-1zM683.73,788.52h1v1h-1zM696.21,788.52h1v1h-1zM708.69,788.52h1v1h-1zM721.17,788.52h1v1h-1zM746.14,788.52h1v1h-1zM758.62,788.52h1v1h-1zM771.10,788.52h1v1h-1zM783.58,788.52h1v1h-1zM808.55,788.52h1v1h-1zM821.03,788.52h1v1h-1zM833.51,788.52h1v1h-1zM845.99,788.52h1v1h-1zM870.96,788.52h1v1h-1zM883.44,788.52h1v1h-1zM895.92,788.52h1v1h-1zM908.40,788.52h1v1h-1zM933.37,788.52h1v1h-1zM945.85,788.52h1v1h-1zM958.33,788.52h1v1h-1zM970.81,788.52h1v1h-1zM995.78,788.52h1v1h-1zM1008.26,788.52h1v1h-1zM1020.74,788.52h1v1h-1zM1033.22,788.52h1v1h-1zM1058.19,788.52h1v1h-1zM1070.67,788.52h1v1h-1zM1083.15,788.52h1v1h-1zM1095.63,788.52h1v1h-1zM1120.60,788.52h1v1h-1zM1133.08,788.52h1v1h-1zM1145.56,788.52h1v1h-1zM1158.04,788.52h1v1h-1zM1183.01,788.52h1v1h-1zM1195.49,788.52h1v1h-1zM1207.97,788.52h1v1h-1z" fill="#262626"/>
<path d="M46.75,39.20h1.8v1.8h-1.8zM109.16,39.20h1.8v1.8h-1.8zM171.57,39.20h1.8v1.8h-1.8zM233.98,39.20h1.8v1.8h-1.8zM296.39,39.20h1.8v1.8h-1.8zM358.80,39.20h1.8v1.8h-1.8zM421.21,39.20h1.8v1.8h-1.8zM483.62,39.20h1.8v1.8h-1.8zM546.03,39.20h1.8v1.8h-1.8zM608.44,39.20h1.8v1.8h-1.8zM670.85,39.20h1.8v1.8h-1.8zM733.26,39.20h1.8v1.8h-1.8zM795.67,39.20h1.8v1.8h-1.8zM858.08,39.20h1.8v1.8h-1.8zM920.49,39.20h1.8v1.8h-1.8zM982.90,39.20h1.8v1.8h-1.8zM1045.31,39.20h1.8v1.8h-1.8zM1107.72,39.20h1.8v1.8h-1.8zM1170.13,39.20h1.8v1.8h-1.8zM46.75,101.61h1.8v1.8h-1.8zM109.16,101.61h1.8v1.8h-1.8zM171.57,101.61h1.8v1.8h-1.8zM233.98,101.61h1.8v1.8h-1.8zM296.39,101.61h1.8v1.8h-1.8zM358.80,101.61h1.8v1.8h-1.8zM421.21,101.61h1.8v1.8h-1.8zM483.62,101.61h1.8v1.8h-1.8zM546.03,101.61h1.8v1.8h-1.8zM608.44,101.61h1.8v1.8h-1.8zM670.85,101.61h1.8v1.8h-1.8zM733.26,101.61h1.8v1.8h-1.8zM795.67,101.61h1.8v1.8h-1.8zM858.08,101.61h1.8v1.8h-1.8zM920.49,101.61h1.8v1.8h-1.8zM982.90,101.61h1.8v1.8h-1.8zM1045.31,101.61h1.8v1.8h-1.8zM1107.72,101.61h1.8v1.8h-1.8zM1170.13,101.61h1.8v1.8h-1.8zM46.75,164.02h1.8v1.8h-1.8zM109.16,164.02h1.8v1.8h-1.8zM171.57,164.02h1.8v1.8h-1.8zM233.98,164.02h1.8v1.8h-1.8zM296.39,164.02h1.8v1.8h-1.8zM358.80,164.02h1.8v1.8h-1.8zM421.21,164.02h1.8v1.8h-1.8zM483.62,164.02h1.8v1.8h-1.8zM546.03,164.02h1.8v1.8h-1.8zM608.44,164.02h1.8v1.8h-1.8zM670.85,164.02h1.8v1.8h-1.8zM733.26,164.02h1.8v1.8h-1.8zM795.67,164.02h1.8v1.8h-1.8zM858.08,164.02h1.8v1.8h-1.8zM920.49,164.02h1.8v1.8h-1.8zM982.90,164.02h1.8v1.8h-1.8zM1045.31,164.02h1.8v1.8h-1.8zM1107.72,164.02h1.8v1.8h-1.8zM1170.13,164.02h1.8v1.8h-1.8zM46.75,226.43h1.8v1.8h-1.8zM109.16,226.43h1.8v1.8h-1.8zM171.57,226.43h1.8v1.8h-1.8zM233.98,226.43h1.8v1.8h-1.8zM296.39,226.43h1.8v1.8h-1.8zM358.80,226.43h1.8v1.8h-1.8zM421.21,226.43h1.8v1.8h-1.8zM483.62,226.43h1.8v1.8h-1.8zM546.03,226.43h1.8v1.8h-1.8zM608.44,226.43h1.8v1.8h-1.8zM670.85,226.43h1.8v1.8h-1.8zM733.26,226.43h1.8v1.8h-1.8zM795.67,226.43h1.8v1.8h-1.8zM858.08,226.43h1.8v1.8h-1.8zM920.49,226.43h1.8v1.8h-1.8zM982.90,226.43h1.8v1.8h-1.8zM1045.31,226.43h1.8v1.8h-1.8zM1107.72,226.43h1.8v1.8h-1.8zM1170.13,226.43h1.8v1.8h-1.8zM46.75,288.84h1.8v1.8h-1.8zM109.16,288.84h1.8v1.8h-1.8zM171.57,288.84h1.8v1.8h-1.8zM233.98,288.84h1.8v1.8h-1.8zM296.39,288.84h1.8v1.8h-1.8zM358.80,288.84h1.8v1.8h-1.8zM421.21,288.84h1.8v1.8h-1.8zM483.62,288.84h1.8v1.8h-1.8zM546.03,288.84h1.8v1.8h-1.8zM608.44,288.84h1.8v1.8h-1.8zM670.85,288.84h1.8v1.8h-1.8zM733.26,288.84h1.8v1.8h-1.8zM795.67,288.84h1.8v1.8h-1.8zM858.08,288.84h1.8v1.8h-1.8zM920.49,288.84h1.8v1.8h-1.8zM982.90,288.84h1.8v1.8h-1.8zM1045.31,288.84h1.8v1.8h-1.8zM1107.72,288.84h1.8v1.8h-1.8zM1170.13,288.84h1.8v1.8h-1.8zM46.75,351.25h1.8v1.8h-1.8zM109.16,351.25h1.8v1.8h-1.8zM171.57,351.25h1.8v1.8h-1.8zM233.98,351.25h1.8v1.8h-1.8zM296.39,351.25h1.8v1.8h-1.8zM358.80,351.25h1.8v1.8h-1.8zM421.21,351.25h1.8v1.8h-1.8zM483.62,351.25h1.8v1.8h-1.8zM546.03,351.25h1.8v1.8h-1.8zM608.44,351.25h1.8v1.8h-1.8zM670.85,351.25h1.8v1.8h-1.8zM733.26,351.25h1.8v1.8h-1.8zM795.67,351.25h1.8v1.8h-1.8zM858.08,351.25h1.8v1.8h-1.8zM920.49,351.25h1.8v1.8h-1.8zM982.90,351.25h1.8v1.8h-1.8zM1045.31,351.25h1.8v1.8h-1.8zM1107.72,351.25h1.8v1.8h-1.8zM1170.13,351.25h1.8v1.8h-1.8zM46.75,413.66h1.8v1.8h-1.8zM109.16,413.66h1.8v1.8h-1.8zM171.57,413.66h1.8v1.8h-1.8zM233.98,413.66h1.8v1.8h-1.8zM296.39,413.66h1.8v1.8h-1.8zM358.80,413.66h1.8v1.8h-1.8zM421.21,413.66h1.8v1.8h-1.8zM483.62,413.66h1.8v1.8h-1.8zM546.03,413.66h1.8v1.8h-1.8zM608.44,413.66h1.8v1.8h-1.8zM670.85,413.66h1.8v1.8h-1.8zM733.26,413.66h1.8v1.8h-1.8zM795.67,413.66h1.8v1.8h-1.8zM858.08,413.66h1.8v1.8h-1.8zM920.49,413.66h1.8v1.8h-1.8zM982.90,413.66h1.8v1.8h-1.8zM1045.31,413.66h1.8v1.8h-1.8zM1107.72,413.66h1.8v1.8h-1.8zM1170.13,413.66h1.8v1.8h-1.8zM46.75,476.07h1.8v1.8h-1.8zM109.16,476.07h1.8v1.8h-1.8zM171.57,476.07h1.8v1.8h-1.8zM233.98,476.07h1.8v1.8h-1.8zM296.39,476.07h1.8v1.8h-1.8zM358.80,476.07h1.8v1.8h-1.8zM421.21,476.07h1.8v1.8h-1.8zM483.62,476.07h1.8v1.8h-1.8zM546.03,476.07h1.8v1.8h-1.8zM608.44,476.07h1.8v1.8h-1.8zM670.85,476.07h1.8v1.8h-1.8zM733.26,476.07h1.8v1.8h-1.8zM795.67,476.07h1.8v1.8h-1.8zM858.08,476.07h1.8v1.8h-1.8zM920.49,476.07h1.8v1.8h-1.8zM982.90,476.07h1.8v1.8h-1.8zM1045.31,476.07h1.8v1.8h-1.8zM1107.72,476.07h1.8v1.8h-1.8zM1170.13,476.07h1.8v1.8h-1.8zM46.75,538.48h1.8v1.8h-1.8zM109.16,538.48h1.8v1.8h-1.8zM171.57,538.48h1.8v1.8h-1.8zM233.98,538.48h1.8v1.8h-1.8zM296.39,538.48h1.8v1.8h-1.8zM358.80,538.48h1.8v1.8h-1.8zM421.21,538.48h1.8v1.8h-1.8zM483.62,538.48h1.8v1.8h-1.8zM546.03,538.48h1.8v1.8h-1.8zM608.44,538.48h1.8v1.8h-1.8zM670.85,538.48h1.8v1.8h-1.8zM733.26,538.48h1.8v1.8h-1.8zM795.67,538.48h1.8v1.8h-1.8zM858.08,538.48h1.8v1.8h-1.8zM920.49,538.48h1.8v1.8h-1.8zM982.90,538.48h1.8v1.8h-1.8zM1045.31,538.48h1.8v1.8h-1.8zM1107.72,538.48h1.8v1.8h-1.8zM1170.13,538.48h1.8v1.8h-1.8zM46.75,600.89h1.8v1.8h-1.8zM109.16,600.89h1.8v1.8h-1.8zM171.57,600.89h1.8v1.8h-1.8zM233.98,600.89h1.8v1.8h-1.8zM296.39,600.89h1.8v1.8h-1.8zM358.80,600.89h1.8v1.8h-1.8zM421.21,600.89h1.8v1.8h-1.8zM483.62,600.89h1.8v1.8h-1.8zM546.03,600.89h1.8v1.8h-1.8zM608.44,600.89h1.8v1.8h-1.8zM670.85,600.89h1.8v1.8h-1.8zM733.26,600.89h1.8v1.8h-1.8zM795.67,600.89h1.8v1.8h-1.8zM858.08,600.89h1.8v1.8h-1.8zM920.49,600.89h1.8v1.8h-1.8zM982.90,600.89h1.8v1.8h-1.8zM1045.31,600.89h1.8v1.8h-1.8zM1107.72,600.89h1.8v1.8h-1.8zM1170.13,600.89h1.8v1.8h-1.8zM46.75,663.30h1.8v1.8h-1.8zM109.16,663.30h1.8v1.8h-1.8zM171.57,663.30h1.8v1.8h-1.8zM233.98,663.30h1.8v1.8h-1.8zM296.39,663.30h1.8v1.8h-1.8zM358.80,663.30h1.8v1.8h-1.8zM421.21,663.30h1.8v1.8h-1.8zM483.62,663.30h1.8v1.8h-1.8zM546.03,663.30h1.8v1.8h-1.8zM608.44,663.30h1.8v1.8h-1.8zM670.85,663.30h1.8v1.8h-1.8zM733.26,663.30h1.8v1.8h-1.8zM795.67,663.30h1.8v1.8h-1.8zM858.08,663.30h1.8v1.8h-1.8zM920.49,663.30h1.8v1.8h-1.8zM982.90,663.30h1.8v1.8h-1.8zM1045.31,663.30h1.8v1.8h-1.8zM1107.72,663.30h1.8v1.8h-1.8zM1170.13,663.30h1.8v1.8h-1.8zM46.75,725.71h1.8v1.8h-1.8zM109.16,725.71h1.8v1.8h-1.8zM171.57,725.71h1.8v1.8h-1.8zM233.98,725.71h1.8v1.8h-1.8zM296.39,725.71h1.8v1.8h-1.8zM358.80,725.71h1.8v1.8h-1.8zM421.21,725.71h1.8v1.8h-1.8zM483.62,725.71h1.8v1.8h-1.8zM546.03,725.71h1.8v1.8h-1.8zM608.44,725.71h1.8v1.8h-1.8zM670.85,725.71h1.8v1.8h-1.8zM733.26,725.71h1.8v1.8h-1.8zM795.67,725.71h1.8v1.8h-1.8zM858.08,725.71h1.8v1.8h-1.8zM920.49,725.71h1.8v1.8h-1.8zM982.90,725.71h1.8v1.8h-1.8zM1045.31,725.71h1.8v1.8h-1.8zM1107.72,725.71h1.8v1.8h-1.8zM1170.13,725.71h1.8v1.8h-1.8zM46.75,788.12h1.8v1.8h-1.8zM109.16,788.12h1.8v1.8h-1.8zM171.57,788.12h1.8v1.8h-1.8zM233.98,788.12h1.8v1.8h-1.8zM296.39,788.12h1.8v1.8h-1.8zM358.80,788.12h1.8v1.8h-1.8zM421.21,788.12h1.8v1.8h-1.8zM483.62,788.12h1.8v1.8h-1.8zM546.03,788.12h1.8v1.8h-1.8zM608.44,788.12h1.8v1.8h-1.8zM670.85,788.12h1.8v1.8h-1.8zM733.26,788.12h1.8v1.8h-1.8zM795.67,788.12h1.8v1.8h-1.8zM858.08,788.12h1.8v1.8h-1.8zM920.49,788.12h1.8v1.8h-1.8zM982.90,788.12h1.8v1.8h-1.8zM1045.31,788.12h1.8v1.8h-1.8zM1107.72,788.12h1.8v1.8h-1.8zM1170.13,788.12h1.8v1.8h-1.8z" fill="#343434"/>
<path d="M368.60,135.00 C420.68,135.00 446.72,200.40 498.80,200.40" fill="none" stroke="#000" stroke-opacity="0.6" stroke-width="3.8"/>
<path d="M368.60,135.00 C420.68,135.00 446.72,200.40 498.80,200.40" fill="none" stroke="#c7c729" stroke-width="2.5"/>
<path d="M586.90,108.50 C645.82,108.50 675.28,387.60 734.20,387.60" fill="none" stroke="#000" stroke-opacity="0.6" stroke-width="3.8"/>
<path d="M586.90,108.50 C645.82,108.50 675.28,387.60 734.20,387.60" fill="none" stroke="#c7c729" stroke-width="2.5"/>
<path d="M368.60,322.50 C396.00,322.50 409.70,386.60 437.10,386.60" fill="none" stroke="#000" stroke-opacity="0.6" stroke-width="3.8"/>
<path d="M368.60,322.50 C396.00,322.50 409.70,386.60 437.10,386.60" fill="none" stroke="url(#lg4)" stroke-width="2.5"/>
<path d="M524.90,343.50 C609.34,343.50 651.56,292.40 736.00,292.40" fill="none" stroke="#000" stroke-opacity="0.6" stroke-width="3.8"/>
<path d="M524.90,343.50 C609.34,343.50 651.56,292.40 736.00,292.40" fill="none" stroke="#a1a1a1" stroke-width="2.5"/>
<path d="M524.90,357.30 C608.62,357.30 650.48,414.40 734.20,414.40" fill="none" stroke="#000" stroke-opacity="0.6" stroke-width="3.8"/>
<path d="M524.90,357.30 C608.62,357.30 650.48,414.40 734.20,414.40" fill="none" stroke="#a1a1a1" stroke-width="2.5"/>
<path d="M524.90,371.00 C608.62,371.00 650.48,400.80 734.20,400.80" fill="none" stroke="#000" stroke-opacity="0.6" stroke-width="3.8"/>
<path d="M524.90,371.00 C608.62,371.00 650.48,400.80 734.20,400.80" fill="none" stroke="#a1a1a1" stroke-width="2.5"/>
<path d="M349.60,608.80 C421.16,608.80 456.94,546.50 528.50,546.50" fill="none" stroke="#000" stroke-opacity="0.6" stroke-width="3.8"/>
<path d="M349.60,608.80 C421.16,608.80 456.94,546.50 528.50,546.50" fill="none" stroke="#c7c729" stroke-width="2.5"/>
<path d="M621.90,486.60 C666.82,486.60 689.28,455.70 734.20,455.70" fill="none" stroke="#000" stroke-opacity="0.6" stroke-width="3.8"/>
<path d="M621.90,486.60 C666.82,486.60 689.28,455.70 734.20,455.70" fill="none" stroke="#6363c7" stroke-width="2.5"/>
<path d="M883.80,373.40 C923.76,373.40 943.74,388.90 983.70,388.90" fill="none" stroke="#000" stroke-opacity="0.6" stroke-width="3.8"/>
<path d="M883.80,373.40 C923.76,373.40 943.74,388.90 983.70,388.90" fill="none" stroke="#63c763" stroke-width="2.5"/>
<rect x="217.50" y="113.50" width="152.00" height="170.50" rx="2.5" fill="#000" fill-opacity="0.25"/>
<rect x="218.00" y="113.00" width="151.00" height="169.50" rx="2.0" fill="#303030"/>
<path d="M218.00,125.60 L218.00,115.00 Q218.00,113.00 220.00,113.00 L367.00,113.00 Q369.00,113.00 369.00,115.00 L369.00,125.60 Z" fill="#79461d"/>
<rect x="218.50" y="113.50" width="150.00" height="168.50" rx="1.5" fill="none" stroke="#ffffff" stroke-opacity="0.12" stroke-width="1"/>
<path d="M225.40,117.95 L227.70,120.25 L230.00,117.95" fill="none" stroke="#e0e0e0" stroke-width="0.8" stroke-linecap="round" stroke-linejoin="round"/>
<text x="235.00" y="122.70" fill="#000" fill-opacity="0.55" font-size="7.3" text-anchor="start">Claw_1024px_Color</text>
<text x="234.40" y="122.00" fill="#e2e2e2" font-size="7.3" text-anchor="start">Claw_1024px_Color</text>
<text x="360.40" y="137.20" fill="#dedede" font-size="7.3" text-anchor="end">Color</text>
<text x="360.40" y="151.00" fill="#dedede" font-size="7.3" text-anchor="end">Alpha</text>
<rect x="226.30" y="161.10" width="134.90" height="9.50" rx="2" fill="#2b2b2b" stroke="#383838" stroke-width="1"/>
<rect x="227.90" y="161.90" width="8.6" height="8.6" rx="2" fill="none" stroke="#7a7a7a" stroke-width="1"/>
<path d="M228.30,170.70 L230.90,165.70 L233.50,170.70 Z" fill="#f0f0f0"/>
<path d="M234.10,163.00 l0.45,1.05 1.05,0.45 -1.05,0.45 -0.45,1.05 -0.45,-1.05 -1.05,-0.45 1.05,-0.45 Z" fill="#f0f0f0"/>
<path d="M239.50,165.30 L241.20,167.00 L242.90,165.30" fill="none" stroke="#a8a8a8" stroke-width="0.85" stroke-linecap="round" stroke-linejoin="round"/>
<rect x="244.80" y="161.20" width="66.20" height="9.30" fill="#1b1b1b"/>
<text x="249.10" y="168.05" fill="#dedede" font-size="7.3" text-anchor="start">Claw_1024px_C...</text>
<rect x="311.90" y="160.90" width="12.10" height="9.90" fill="#464646" rx="1.0"/>
<rect x="324.90" y="160.90" width="11.20" height="9.90" fill="#464646" rx="1.0"/>
<rect x="337.00" y="160.90" width="12.10" height="9.90" fill="#464646" rx="1.0"/>
<rect x="350.00" y="160.90" width="11.00" height="9.90" fill="#464646" rx="1.0"/>
<path d="M317.90,162.45 C319.50,163.45 320.70,163.25 321.10,163.25 C321.10,166.65 320.10,168.45 317.90,169.45 C315.70,168.45 314.70,166.65 314.70,163.25 C315.10,163.25 316.30,163.45 317.90,162.45 Z" fill="none" stroke="#8e8e8e" stroke-width="0.8"/>
<path d="M326.90,164.20 v4.6 q0,1.2 1.2,1.2 h3.4" fill="none" stroke="#9a9a9a" stroke-width="0.8"/>
<path d="M328.80,162.20 h3.2 l2.2,2.2 v4.0 h-5.4 Z" fill="#464646" stroke="#e0e0e0" stroke-width="0.8"/>
<path d="M332.00,162.20 l2.2,2.2 h-2.2 Z" fill="#e0e0e0"/>
<path d="M339.30,162.40 h3.0 l0.7,0.9 h4.0 v1.0 h-7.7 Z" fill="#e6e6e6"/>
<rect x="339.30" y="164.90" width="7.7" height="4.6" fill="#e6e6e6"/>
<path d="M352.80,163.00 L358.20,168.60 M358.20,163.00 L352.80,168.60" stroke="#dedede" stroke-width="0.75"/>
<rect x="226.10" y="175.90" width="135.20" height="11.30" rx="2.2" fill="#282828" stroke="#404040" stroke-width="1"/>
<text x="229.80" y="183.75" fill="#dedede" font-size="7.3" text-anchor="start">Linear</text>
<path d="M355.30,180.90 L357.20,182.80 L359.10,180.90" fill="none" stroke="#cfcfcf" stroke-width="0.85" stroke-linecap="round" stroke-linejoin="round"/>
<rect x="226.10" y="191.45" width="135.20" height="11.30" rx="2.2" fill="#282828" stroke="#404040" stroke-width="1"/>
<text x="229.80" y="199.30" fill="#dedede" font-size="7.3" text-anchor="start">Flat</text>
<path d="M355.30,196.45 L357.20,198.35 L359.10,196.45" fill="none" stroke="#cfcfcf" stroke-width="0.85" stroke-linecap="round" stroke-linejoin="round"/>
<rect x="226.10" y="207.00" width="135.20" height="11.30" rx="2.2" fill="#282828" stroke="#404040" stroke-width="1"/>
<text x="229.80" y="214.85" fill="#dedede" font-size="7.3" text-anchor="start">Repeat</text>
<path d="M355.30,212.00 L357.20,213.90 L359.10,212.00" fill="none" stroke="#cfcfcf" stroke-width="0.85" stroke-linecap="round" stroke-linejoin="round"/>
<rect x="226.10" y="222.55" width="135.20" height="11.30" rx="2.2" fill="#282828" stroke="#404040" stroke-width="1"/>
<text x="229.80" y="230.40" fill="#dedede" font-size="7.3" text-anchor="start">Single Image</text>
<path d="M355.30,227.55 L357.20,229.45 L359.10,227.55" fill="none" stroke="#cfcfcf" stroke-width="0.85" stroke-linecap="round" stroke-linejoin="round"/>
<text x="225.80" y="245.95" fill="#dedede" font-size="7.3" text-anchor="start">Color Space</text>
<rect x="273.50" y="238.10" width="87.80" height="11.30" rx="2.2" fill="#282828" stroke="#404040" stroke-width="1"/>
<text x="277.20" y="245.95" fill="#dedede" font-size="7.3" text-anchor="start">sRGB</text>
<path d="M355.30,243.10 L357.20,245.00 L359.10,243.10" fill="none" stroke="#cfcfcf" stroke-width="0.85" stroke-linecap="round" stroke-linejoin="round"/>
<text x="225.80" y="261.50" fill="#dedede" font-size="7.3" text-anchor="start">Alpha</text>
<rect x="273.50" y="253.65" width="87.80" height="11.30" rx="2.2" fill="#282828" stroke="#404040" stroke-width="1"/>
<text x="277.20" y="261.50" fill="#dedede" font-size="7.3" text-anchor="start">Straight</text>
<path d="M355.30,258.65 L357.20,260.55 L359.10,258.65" fill="none" stroke="#cfcfcf" stroke-width="0.85" stroke-linecap="round" stroke-linejoin="round"/>
<text x="225.80" y="275.90" fill="#dedede" font-size="7.3" text-anchor="start">Vector</text>
<rect x="217.50" y="300.70" width="152.00" height="170.50" rx="2.5" fill="#000" fill-opacity="0.25"/>
<rect x="218.00" y="300.20" width="151.00" height="169.50" rx="2.0" fill="#303030"/>
<path d="M218.00,312.80 L218.00,302.20 Q218.00,300.20 220.00,300.20 L367.00,300.20 Q369.00,300.20 369.00,302.20 L369.00,312.80 Z" fill="#79461d"/>
<rect x="218.50" y="300.70" width="150.00" height="168.50" rx="1.5" fill="none" stroke="#ffffff" stroke-opacity="0.12" stroke-width="1"/>
<path d="M225.40,305.15 L227.70,307.45 L230.00,305.15" fill="none" stroke="#e0e0e0" stroke-width="0.8" stroke-linecap="round" stroke-linejoin="round"/>
<text x="235.00" y="309.90" fill="#000" fill-opacity="0.55" font-size="7.3" text-anchor="start">Claw_1024px_R-a...ss-B-metallic.png</text>
<text x="234.40" y="309.20" fill="#e2e2e2" font-size="7.3" text-anchor="start">Claw_1024px_R-a...ss-B-metallic.png</text>
<text x="360.40" y="324.40" fill="#dedede" font-size="7.3" text-anchor="end">Color</text>
<text x="360.40" y="338.20" fill="#dedede" font-size="7.3" text-anchor="end">Alpha</text>
<rect x="226.30" y="348.30" width="134.90" height="9.50" rx="2" fill="#2b2b2b" stroke="#383838" stroke-width="1"/>
<rect x="227.90" y="349.10" width="8.6" height="8.6" rx="2" fill="none" stroke="#7a7a7a" stroke-width="1"/>
<path d="M228.30,357.90 L230.90,352.90 L233.50,357.90 Z" fill="#f0f0f0"/>
<path d="M234.10,350.20 l0.45,1.05 1.05,0.45 -1.05,0.45 -0.45,1.05 -0.45,-1.05 -1.05,-0.45 1.05,-0.45 Z" fill="#f0f0f0"/>
<path d="M239.50,352.50 L241.20,354.20 L242.90,352.50" fill="none" stroke="#a8a8a8" stroke-width="0.85" stroke-linecap="round" stroke-linejoin="round"/>
<rect x="244.80" y="348.40" width="66.20" height="9.30" fill="#1b1b1b"/>
<text x="249.10" y="355.25" fill="#dedede" font-size="7.3" text-anchor="start">Claw_1024px_R...</text>
<rect x="311.90" y="348.10" width="12.10" height="9.90" fill="#464646" rx="1.0"/>
<rect x="324.90" y="348.10" width="11.20" height="9.90" fill="#464646" rx="1.0"/>
<rect x="337.00" y="348.10" width="12.10" height="9.90" fill="#464646" rx="1.0"/>
<rect x="350.00" y="348.10" width="11.00" height="9.90" fill="#464646" rx="1.0"/>
<path d="M317.90,349.65 C319.50,350.65 320.70,350.45 321.10,350.45 C321.10,353.85 320.10,355.65 317.90,356.65 C315.70,355.65 314.70,353.85 314.70,350.45 C315.10,350.45 316.30,350.65 317.90,349.65 Z" fill="none" stroke="#8e8e8e" stroke-width="0.8"/>
<path d="M326.90,351.40 v4.6 q0,1.2 1.2,1.2 h3.4" fill="none" stroke="#9a9a9a" stroke-width="0.8"/>
<path d="M328.80,349.40 h3.2 l2.2,2.2 v4.0 h-5.4 Z" fill="#464646" stroke="#e0e0e0" stroke-width="0.8"/>
<path d="M332.00,349.40 l2.2,2.2 h-2.2 Z" fill="#e0e0e0"/>
<path d="M339.30,349.60 h3.0 l0.7,0.9 h4.0 v1.0 h-7.7 Z" fill="#e6e6e6"/>
<rect x="339.30" y="352.10" width="7.7" height="4.6" fill="#e6e6e6"/>
<path d="M352.80,350.20 L358.20,355.80 M358.20,350.20 L352.80,355.80" stroke="#dedede" stroke-width="0.75"/>
<rect x="226.10" y="363.10" width="135.20" height="11.30" rx="2.2" fill="#282828" stroke="#404040" stroke-width="1"/>
<text x="229.80" y="370.95" fill="#dedede" font-size="7.3" text-anchor="start">Linear</text>
<path d="M355.30,368.10 L357.20,370.00 L359.10,368.10" fill="none" stroke="#cfcfcf" stroke-width="0.85" stroke-linecap="round" stroke-linejoin="round"/>
<rect x="226.10" y="378.65" width="135.20" height="11.30" rx="2.2" fill="#282828" stroke="#404040" stroke-width="1"/>
<text x="229.80" y="386.50" fill="#dedede" font-size="7.3" text-anchor="start">Flat</text>
<path d="M355.30,383.65 L357.20,385.55 L359.10,383.65" fill="none" stroke="#cfcfcf" stroke-width="0.85" stroke-linecap="round" stroke-linejoin="round"/>
<rect x="226.10" y="394.20" width="135.20" height="11.30" rx="2.2" fill="#282828" stroke="#404040" stroke-width="1"/>
<text x="229.80" y="402.05" fill="#dedede" font-size="7.3" text-anchor="start">Repeat</text>
<path d="M355.30,399.20 L357.20,401.10 L359.10,399.20" fill="none" stroke="#cfcfcf" stroke-width="0.85" stroke-linecap="round" stroke-linejoin="round"/>
<rect x="226.10" y="409.75" width="135.20" height="11.30" rx="2.2" fill="#282828" stroke="#404040" stroke-width="1"/>
<text x="229.80" y="417.60" fill="#dedede" font-size="7.3" text-anchor="start">Single Image</text>
<path d="M355.30,414.75 L357.20,416.65 L359.10,414.75" fill="none" stroke="#cfcfcf" stroke-width="0.85" stroke-linecap="round" stroke-linejoin="round"/>
<text x="225.80" y="433.15" fill="#dedede" font-size="7.3" text-anchor="start">Color Space</text>
<rect x="273.50" y="425.30" width="87.80" height="11.30" rx="2.2" fill="#282828" stroke="#404040" stroke-width="1"/>
<text x="277.20" y="433.15" fill="#dedede" font-size="7.3" text-anchor="start">Non-Color</text>
<path d="M355.30,430.30 L357.20,432.20 L359.10,430.30" fill="none" stroke="#cfcfcf" stroke-width="0.85" stroke-linecap="round" stroke-linejoin="round"/>
<text x="225.80" y="448.70" fill="#6e6e6e" font-size="7.3" text-anchor="start">Alpha</text>
<rect x="273.50" y="440.85" width="87.80" height="11.30" rx="2.2" fill="#2c2c2c" stroke="#363636" stroke-width="1"/>
<text x="277.20" y="448.70" fill="#6e6e6e" font-size="7.3" text-anchor="start">Straight</text>
<path d="M355.30,445.85 L357.20,447.75 L359.10,445.85" fill="none" stroke="#6e6e6e" stroke-width="0.85" stroke-linecap="round" stroke-linejoin="round"/>
<text x="225.80" y="463.10" fill="#dedede" font-size="7.3" text-anchor="start">Vector</text>
<rect x="198.40" y="587.20" width="152.00" height="170.50" rx="2.5" fill="#000" fill-opacity="0.25"/>
<rect x="198.90" y="586.70" width="151.00" height="169.50" rx="2.0" fill="#303030"/>
<path d="M198.90,599.30 L198.90,588.70 Q198.90,586.70 200.90,586.70 L347.90,586.70 Q349.90,586.70 349.90,588.70 L349.90,599.30 Z" fill="#79461d"/>
<rect x="199.40" y="587.20" width="150.00" height="168.50" rx="1.5" fill="none" stroke="#ffffff" stroke-opacity="0.12" stroke-width="1"/>
<path d="M206.30,591.65 L208.60,593.95 L210.90,591.65" fill="none" stroke="#e0e0e0" stroke-width="0.8" stroke-linecap="round" stroke-linejoin="round"/>
<text x="215.90" y="596.40" fill="#000" fill-opacity="0.55" font-size="7.3" text-anchor="start">Claw_1024px_Normal</text>
<text x="215.30" y="595.70" fill="#e2e2e2" font-size="7.3" text-anchor="start">Claw_1024px_Normal</text>
<text x="341.30" y="610.90" fill="#dedede" font-size="7.3" text-anchor="end">Color</text>
<text x="341.30" y="624.70" fill="#dedede" font-size="7.3" text-anchor="end">Alpha</text>
<rect x="207.20" y="634.80" width="134.90" height="9.50" rx="2" fill="#2b2b2b" stroke="#383838" stroke-width="1"/>
<rect x="208.80" y="635.60" width="8.6" height="8.6" rx="2" fill="none" stroke="#7a7a7a" stroke-width="1"/>
<path d="M209.20,644.40 L211.80,639.40 L214.40,644.40 Z" fill="#f0f0f0"/>
<path d="M215.00,636.70 l0.45,1.05 1.05,0.45 -1.05,0.45 -0.45,1.05 -0.45,-1.05 -1.05,-0.45 1.05,-0.45 Z" fill="#f0f0f0"/>
<path d="M220.40,639.00 L222.10,640.70 L223.80,639.00" fill="none" stroke="#a8a8a8" stroke-width="0.85" stroke-linecap="round" stroke-linejoin="round"/>
<rect x="225.70" y="634.90" width="66.20" height="9.30" fill="#1b1b1b"/>
<text x="230.00" y="641.75" fill="#dedede" font-size="7.3" text-anchor="start">Claw_1024px_N...</text>
<rect x="292.80" y="634.60" width="12.10" height="9.90" fill="#464646" rx="1.0"/>
<rect x="305.80" y="634.60" width="11.20" height="9.90" fill="#464646" rx="1.0"/>
<rect x="317.90" y="634.60" width="12.10" height="9.90" fill="#464646" rx="1.0"/>
<rect x="330.90" y="634.60" width="11.00" height="9.90" fill="#464646" rx="1.0"/>
<path d="M298.80,636.15 C300.40,637.15 301.60,636.95 302.00,636.95 C302.00,640.35 301.00,642.15 298.80,643.15 C296.60,642.15 295.60,640.35 295.60,636.95 C296.00,636.95 297.20,637.15 298.80,636.15 Z" fill="none" stroke="#8e8e8e" stroke-width="0.8"/>
<path d="M307.80,637.90 v4.6 q0,1.2 1.2,1.2 h3.4" fill="none" stroke="#9a9a9a" stroke-width="0.8"/>
<path d="M309.70,635.90 h3.2 l2.2,2.2 v4.0 h-5.4 Z" fill="#464646" stroke="#e0e0e0" stroke-width="0.8"/>
<path d="M312.90,635.90 l2.2,2.2 h-2.2 Z" fill="#e0e0e0"/>
<path d="M320.20,636.10 h3.0 l0.7,0.9 h4.0 v1.0 h-7.7 Z" fill="#e6e6e6"/>
<rect x="320.20" y="638.60" width="7.7" height="4.6" fill="#e6e6e6"/>
<path d="M333.70,636.70 L339.10,642.30 M339.10,636.70 L333.70,642.30" stroke="#dedede" stroke-width="0.75"/>
<rect x="207.00" y="649.60" width="135.20" height="11.30" rx="2.2" fill="#282828" stroke="#404040" stroke-width="1"/>
<text x="210.70" y="657.45" fill="#dedede" font-size="7.3" text-anchor="start">Linear</text>
<path d="M336.20,654.60 L338.10,656.50 L340.00,654.60" fill="none" stroke="#cfcfcf" stroke-width="0.85" stroke-linecap="round" stroke-linejoin="round"/>
<rect x="207.00" y="665.15" width="135.20" height="11.30" rx="2.2" fill="#282828" stroke="#404040" stroke-width="1"/>
<text x="210.70" y="673.00" fill="#dedede" font-size="7.3" text-anchor="start">Flat</text>
<path d="M336.20,670.15 L338.10,672.05 L340.00,670.15" fill="none" stroke="#cfcfcf" stroke-width="0.85" stroke-linecap="round" stroke-linejoin="round"/>
<rect x="207.00" y="680.70" width="135.20" height="11.30" rx="2.2" fill="#282828" stroke="#404040" stroke-width="1"/>
<text x="210.70" y="688.55" fill="#dedede" font-size="7.3" text-anchor="start">Repeat</text>
<path d="M336.20,685.70 L338.10,687.60 L340.00,685.70" fill="none" stroke="#cfcfcf" stroke-width="0.85" stroke-linecap="round" stroke-linejoin="round"/>
<rect x="207.00" y="696.25" width="135.20" height="11.30" rx="2.2" fill="#282828" stroke="#404040" stroke-width="1"/>
<text x="210.70" y="704.10" fill="#dedede" font-size="7.3" text-anchor="start">Single Image</text>
<path d="M336.20,701.25 L338.10,703.15 L340.00,701.25" fill="none" stroke="#cfcfcf" stroke-width="0.85" stroke-linecap="round" stroke-linejoin="round"/>
<text x="206.70" y="719.65" fill="#dedede" font-size="7.3" text-anchor="start">Color Space</text>
<rect x="254.40" y="711.80" width="87.80" height="11.30" rx="2.2" fill="#282828" stroke="#404040" stroke-width="1"/>
<text x="258.10" y="719.65" fill="#dedede" font-size="7.3" text-anchor="start">Non-Color</text>
<path d="M336.20,716.80 L338.10,718.70 L340.00,716.80" fill="none" stroke="#cfcfcf" stroke-width="0.85" stroke-linecap="round" stroke-linejoin="round"/>
<text x="206.70" y="735.20" fill="#6e6e6e" font-size="7.3" text-anchor="start">Alpha</text>
<rect x="254.40" y="727.35" width="87.80" height="11.30" rx="2.2" fill="#2c2c2c" stroke="#363636" stroke-width="1"/>
<text x="258.10" y="735.20" fill="#6e6e6e" font-size="7.3" text-anchor="start">Straight</text>
<path d="M336.20,732.35 L338.10,734.25 L340.00,732.35" fill="none" stroke="#6e6e6e" stroke-width="0.85" stroke-linecap="round" stroke-linejoin="round"/>
<text x="206.70" y="749.60" fill="#dedede" font-size="7.3" text-anchor="start">Vector</text>
<rect x="497.90" y="86.70" width="89.50" height="140.20" rx="2.5" fill="#000" fill-opacity="0.25"/>
<rect x="498.40" y="86.20" width="88.50" height="139.20" rx="2.0" fill="#303030"/>
<path d="M498.40,98.80 L498.40,88.20 Q498.40,86.20 500.40,86.20 L584.90,86.20 Q586.90,86.20 586.90,88.20 L586.90,98.80 Z" fill="#6e6e22"/>
<rect x="498.90" y="86.70" width="87.50" height="138.20" rx="1.5" fill="none" stroke="#ffffff" stroke-opacity="0.12" stroke-width="1"/>
<path d="M505.80,91.15 L508.10,93.45 L510.40,91.15" fill="none" stroke="#e0e0e0" stroke-width="0.8" stroke-linecap="round" stroke-linejoin="round"/>
<text x="515.40" y="95.90" fill="#000" fill-opacity="0.55" font-size="7.3" text-anchor="start">Multiply</text>
<text x="514.80" y="95.20" fill="#e2e2e2" font-size="7.3" text-anchor="start">Multiply</text>
<text x="577.80" y="111.10" fill="#dedede" font-size="7.3" text-anchor="end">Result</text>
<rect x="505.90" y="120.90" width="73.20" height="11.20" rx="2.2" fill="#282828" stroke="#404040" stroke-width="1"/>
<circle cx="512.40" cy="126.50" r="2.2" fill="#c7c729"/>
<text x="521.70" y="128.70" fill="#dedede" font-size="7.3" text-anchor="start">Color</text>
<path d="M573.10,125.85 L575.00,127.75 L576.90,125.85" fill="none" stroke="#cfcfcf" stroke-width="0.85" stroke-linecap="round" stroke-linejoin="round"/>
<rect x="505.90" y="136.40" width="73.20" height="10.40" rx="2.2" fill="#282828" stroke="#404040" stroke-width="1"/>
<text x="509.60" y="143.80" fill="#dedede" font-size="7.3" text-anchor="start">Multiply</text>
<path d="M573.10,140.95 L575.00,142.85 L576.90,140.95" fill="none" stroke="#cfcfcf" stroke-width="0.85" stroke-linecap="round" stroke-linejoin="round"/>
<rect x="505.70" y="152.80" width="9.40" height="9.40" fill="#545454" rx="1.6"/>
<text x="517.00" y="160.00" fill="#dedede" font-size="7.3" text-anchor="start">Clamp Result</text>
<rect x="505.70" y="168.60" width="9.40" height="9.40" fill="#4772b3" rx="1.6"/>
<path d="M507.60,173.40 L509.70,175.60 L513.30,170.50" fill="none" stroke="#fff" stroke-width="1.1" stroke-linecap="round" stroke-linejoin="round"/>
<text x="517.00" y="175.80" fill="#dedede" font-size="7.3" text-anchor="start">Clamp Factor</text>
<rect x="505.90" y="181.90" width="73.00" height="10.20" rx="2.2" fill="#4772b3"/>
<text x="515.10" y="189.20" fill="#dedede" font-size="7.3" text-anchor="start">Factor</text>
<text x="570.00" y="189.20" fill="#dedede" font-size="7.3" text-anchor="end">1.000</text>
<text x="506.30" y="202.90" fill="#dedede" font-size="7.3" text-anchor="start">A</text>
<text x="506.30" y="216.80" fill="#dedede" font-size="7.3" text-anchor="start">B</text>
<rect x="538.70" y="208.70" width="40.20" height="11.10" fill="#99ff66" rx="1.5"/>
<rect x="436.40" y="321.50" width="89.00" height="76.60" rx="2.5" fill="#000" fill-opacity="0.25"/>
<rect x="436.90" y="321.00" width="88.00" height="75.60" rx="2.0" fill="#303030"/>
<path d="M436.90,333.60 L436.90,323.00 Q436.90,321.00 438.90,321.00 L522.90,321.00 Q524.90,321.00 524.90,323.00 L524.90,333.60 Z" fill="#246283"/>
<rect x="437.40" y="321.50" width="87.00" height="74.60" rx="1.5" fill="none" stroke="#ffffff" stroke-opacity="0.12" stroke-width="1"/>
<path d="M444.30,325.95 L446.60,328.25 L448.90,325.95" fill="none" stroke="#e0e0e0" stroke-width="0.8" stroke-linecap="round" stroke-linejoin="round"/>
<text x="453.90" y="330.70" fill="#000" fill-opacity="0.55" font-size="7.3" text-anchor="start">Separate XYZ</text>
<text x="453.30" y="330.00" fill="#e2e2e2" font-size="7.3" text-anchor="start">Separate XYZ</text>
<text x="516.40" y="345.70" fill="#dedede" font-size="7.3" text-anchor="end">X</text>
<text x="516.40" y="359.50" fill="#dedede" font-size="7.3" text-anchor="end">Y</text>
<text x="516.40" y="373.20" fill="#dedede" font-size="7.3" text-anchor="end">Z</text>
<text x="444.10" y="388.80" fill="#dedede" font-size="7.3" text-anchor="start">Vector</text>
<rect x="744.60" y="309.40" width="70.10" height="9" rx="2" fill="#2a2a2a" stroke="#3a3a3a" stroke-width="0.8"/>
<rect x="739.60" y="309.40" width="80.10" height="7.5" rx="2" fill="#2d2d2d" stroke="#3c3c3c" stroke-width="0.8"/>
<rect x="735.10" y="255.10" width="89.10" height="61.80" rx="2.5" fill="#000" fill-opacity="0.25"/>
<rect x="735.60" y="254.60" width="88.10" height="60.80" rx="2.0" fill="#303030"/>
<path d="M735.60,266.90 L735.60,256.60 Q735.60,254.60 737.60,254.60 L821.70,254.60 Q823.70,254.60 823.70,256.60 L823.70,266.90 Z" fill="#3b4a26"/>
<rect x="736.10" y="255.10" width="87.10" height="59.80" rx="1.5" fill="none" stroke="#ffffff" stroke-opacity="0.12" stroke-width="1"/>
<path d="M743.00,259.40 L745.30,261.70 L747.60,259.40" fill="none" stroke="#e0e0e0" stroke-width="0.8" stroke-linecap="round" stroke-linejoin="round"/>
<text x="752.60" y="264.75" fill="#000" fill-opacity="0.55" font-size="7.3" text-anchor="start">glTF Material Output</text>
<text x="752.00" y="264.05" fill="#e2e2e2" font-size="7.3" text-anchor="start">glTF Material Output</text>
<rect x="742.30" y="271.70" width="18.60" height="11.80" fill="#282828" rx="2"/>
<rect x="742.80" y="272.20" width="73.6" height="10.8" rx="2" fill="#2b2b2b" stroke="#383838" stroke-width="1"/>
<circle cx="748.8" cy="277.9" r="4.1" fill="#ececec" stroke="#8a8a8a" stroke-width="0.6"/>
<path d="M748.8,277.9 h-4.1 a4.1,4.1 0 0 1 4.1,-4.1 z M748.8,277.9 h4.1 a4.1,4.1 0 0 1 -4.1,4.1 z" fill="#151515"/>
<path d="M755.80,277.40 L757.60,279.20 L759.40,277.40" fill="none" stroke="#a8a8a8" stroke-width="0.85" stroke-linecap="round" stroke-linejoin="round"/>
<rect x="761.80" y="272.30" width="42.20" height="10.60" fill="#1b1b1b"/>
<text x="765.00" y="279.80" fill="#dedede" font-size="7.3" text-anchor="start">glTF Mat...</text>
<rect x="804.40" y="272.00" width="12.00" height="11.20" fill="#464646" rx="1.0"/>
<path d="M810.40,274.20 C812.00,275.20 813.20,275.00 813.60,275.00 C813.60,278.40 812.60,280.20 810.40,281.20 C808.20,280.20 807.20,278.40 807.20,275.00 C807.60,275.00 808.80,275.20 810.40,274.20 Z" fill="none" stroke="#8e8e8e" stroke-width="0.8"/>
<text x="742.90" y="294.60" fill="#dedede" font-size="7.3" text-anchor="start">Occlusion</text>
<rect x="742.60" y="300.70" width="73.80" height="10.40" rx="2.2" fill="#545454"/>
<text x="752.10" y="308.10" fill="#dedede" font-size="7.3" text-anchor="start">Thickne...</text>
<text x="807.30" y="308.10" fill="#dedede" font-size="7.3" text-anchor="end">0.000</text>
<rect x="733.50" y="352.50" width="150.80" height="213.50" rx="2.5" fill="#000" fill-opacity="0.25"/>
<rect x="734.00" y="352.00" width="149.80" height="212.50" rx="2.0" fill="#303030"/>
<path d="M734.00,364.80 L734.00,354.00 Q734.00,352.00 736.00,352.00 L881.80,352.00 Q883.80,352.00 883.80,354.00 L883.80,364.80 Z" fill="#2b652b"/>
<rect x="734.50" y="352.50" width="148.80" height="211.50" rx="1.5" fill="none" stroke="#ffffff" stroke-opacity="0.12" stroke-width="1"/>
<path d="M741.40,357.05 L743.70,359.35 L746.00,357.05" fill="none" stroke="#e0e0e0" stroke-width="0.8" stroke-linecap="round" stroke-linejoin="round"/>
<text x="751.00" y="361.80" fill="#000" fill-opacity="0.55" font-size="7.3" text-anchor="start">Principled BSDF</text>
<text x="750.40" y="361.10" fill="#e2e2e2" font-size="7.3" text-anchor="start">Principled BSDF</text>
<text x="877.20" y="375.60" fill="#dedede" font-size="7.3" text-anchor="end">BSDF</text>
<text x="741.00" y="389.80" fill="#dedede" font-size="7.3" text-anchor="start">Base Color</text>
<text x="741.00" y="403.00" fill="#dedede" font-size="7.3" text-anchor="start">Metallic</text>
<text x="741.00" y="416.60" fill="#dedede" font-size="7.3" text-anchor="start">Roughness</text>
<rect x="740.80" y="422.60" width="136.20" height="11.80" rx="2.2" fill="#545454"/>
<text x="750.00" y="430.70" fill="#dedede" font-size="7.3" text-anchor="start">IOR</text>
<text x="867.80" y="430.70" fill="#dedede" font-size="7.3" text-anchor="end">1.500</text>
<rect x="740.80" y="436.90" width="136.20" height="11.00" rx="2.2" fill="#4772b3"/>
<text x="750.00" y="444.60" fill="#dedede" font-size="7.3" text-anchor="start">Alpha</text>
<text x="867.80" y="444.60" fill="#dedede" font-size="7.3" text-anchor="end">1.000</text>
<text x="741.00" y="457.90" fill="#dedede" font-size="7.3" text-anchor="start">Normal</text>
<path d="M743.20,466.40 L745.60,468.80 L743.20,471.20" fill="none" stroke="#d0d0d0" stroke-width="0.85" stroke-linecap="round" stroke-linejoin="round"/>
<text x="754.00" y="471.00" fill="#dedede" font-size="7.3" text-anchor="start">Diffuse</text>
<path d="M743.20,479.10 L745.60,481.50 L743.20,483.90" fill="none" stroke="#d0d0d0" stroke-width="0.85" stroke-linecap="round" stroke-linejoin="round"/>
<text x="754.00" y="483.70" fill="#dedede" font-size="7.3" text-anchor="start">Subsurface</text>
<path d="M743.20,491.20 L745.60,493.60 L743.20,496.00" fill="none" stroke="#d0d0d0" stroke-width="0.85" stroke-linecap="round" stroke-linejoin="round"/>
<text x="754.00" y="495.80" fill="#dedede" font-size="7.3" text-anchor="start">Specular</text>
<path d="M743.20,504.40 L745.60,506.80 L743.20,509.20" fill="none" stroke="#d0d0d0" stroke-width="0.85" stroke-linecap="round" stroke-linejoin="round"/>
<text x="754.00" y="509.00" fill="#dedede" font-size="7.3" text-anchor="start">Transmission</text>
<path d="M743.20,516.40 L745.60,518.80 L743.20,521.20" fill="none" stroke="#d0d0d0" stroke-width="0.85" stroke-linecap="round" stroke-linejoin="round"/>
<text x="754.00" y="521.00" fill="#dedede" font-size="7.3" text-anchor="start">Coat</text>
<path d="M743.20,529.20 L745.60,531.60 L743.20,534.00" fill="none" stroke="#d0d0d0" stroke-width="0.85" stroke-linecap="round" stroke-linejoin="round"/>
<text x="754.00" y="533.80" fill="#dedede" font-size="7.3" text-anchor="start">Sheen</text>
<path d="M743.20,541.50 L745.60,543.90 L743.20,546.30" fill="none" stroke="#d0d0d0" stroke-width="0.85" stroke-linecap="round" stroke-linejoin="round"/>
<text x="754.00" y="546.10" fill="#dedede" font-size="7.3" text-anchor="start">Emission</text>
<path d="M743.20,554.30 L745.60,556.70 L743.20,559.10" fill="none" stroke="#d0d0d0" stroke-width="0.85" stroke-linecap="round" stroke-linejoin="round"/>
<text x="754.00" y="558.90" fill="#dedede" font-size="7.3" text-anchor="start">Thin Film</text>
<rect x="983.00" y="352.60" width="89.10" height="88.30" rx="2.5" fill="#000" fill-opacity="0.25"/>
<rect x="983.50" y="352.10" width="88.10" height="87.30" rx="2.0" fill="#303030"/>
<path d="M983.50,364.80 L983.50,354.10 Q983.50,352.10 985.50,352.10 L1069.60,352.10 Q1071.60,352.10 1071.60,354.10 L1071.60,364.80 Z" fill="#3f2028"/>
<rect x="984.00" y="352.60" width="87.10" height="86.30" rx="1.5" fill="none" stroke="#ffffff" stroke-opacity="0.12" stroke-width="1"/>
<path d="M990.90,357.10 L993.20,359.40 L995.50,357.10" fill="none" stroke="#e0e0e0" stroke-width="0.8" stroke-linecap="round" stroke-linejoin="round"/>
<text x="1000.50" y="361.85" fill="#000" fill-opacity="0.55" font-size="7.3" text-anchor="start">Material Output</text>
<text x="999.90" y="361.15" fill="#e2e2e2" font-size="7.3" text-anchor="start">Material Output</text>
<rect x="991.10" y="370.10" width="72.90" height="10.70" rx="2.2" fill="#282828" stroke="#404040" stroke-width="1"/>
<text x="994.80" y="377.65" fill="#dedede" font-size="7.3" text-anchor="start">All</text>
<path d="M1058.00,374.80 L1059.90,376.70 L1061.80,374.80" fill="none" stroke="#cfcfcf" stroke-width="0.85" stroke-linecap="round" stroke-linejoin="round"/>
<text x="990.80" y="391.10" fill="#dedede" font-size="7.3" text-anchor="start">Surface</text>
<text x="990.80" y="405.10" fill="#dedede" font-size="7.3" text-anchor="start">Volume</text>
<text x="990.80" y="418.80" fill="#dedede" font-size="7.3" text-anchor="start">Displacement</text>
<text x="990.80" y="432.70" fill="#dedede" font-size="7.3" text-anchor="start">Thickness</text>
<rect x="527.80" y="464.90" width="94.60" height="92.30" rx="2.5" fill="#000" fill-opacity="0.25"/>
<rect x="528.30" y="464.40" width="93.60" height="91.30" rx="2.0" fill="#303030"/>
<path d="M528.30,477.00 L528.30,466.40 Q528.30,464.40 530.30,464.40 L619.90,464.40 Q621.90,464.40 621.90,466.40 L621.90,477.00 Z" fill="#3c3c83"/>
<rect x="528.80" y="464.90" width="92.60" height="90.30" rx="1.5" fill="none" stroke="#ffffff" stroke-opacity="0.12" stroke-width="1"/>
<path d="M535.70,469.35 L538.00,471.65 L540.30,469.35" fill="none" stroke="#e0e0e0" stroke-width="0.8" stroke-linecap="round" stroke-linejoin="round"/>
<text x="545.30" y="474.10" fill="#000" fill-opacity="0.55" font-size="7.3" text-anchor="start">Normal Map</text>
<text x="544.70" y="473.40" fill="#e2e2e2" font-size="7.3" text-anchor="start">Normal Map</text>
<text x="613.80" y="488.80" fill="#dedede" font-size="7.3" text-anchor="end">Normal</text>
<rect x="535.50" y="497.90" width="79.30" height="11.00" rx="2.2" fill="#282828" stroke="#404040" stroke-width="1"/>
<text x="539.20" y="505.60" fill="#dedede" font-size="7.3" text-anchor="start">Tangent Space</text>
<path d="M608.80,502.75 L610.70,504.65 L612.60,502.75" fill="none" stroke="#cfcfcf" stroke-width="0.85" stroke-linecap="round" stroke-linejoin="round"/>
<rect x="535.10" y="513.30" width="80.20" height="11.20" fill="#1b1b1b" rx="2"/>
<path d="M537.3,515.3 h7.3 v6.9 h-7.3" fill="none" stroke="#cfcfcf" stroke-width="0.8"/>
<rect x="536.6" y="516.4" width="3.4" height="7.0" rx="0.8" fill="#eeeeee"/>
<circle cx="544.3" cy="514.9" r="1.0" fill="#1b1b1b" stroke="#cfcfcf" stroke-width="0.7"/>
<circle cx="544.4" cy="522.0" r="1.0" fill="#1b1b1b" stroke="#cfcfcf" stroke-width="0.7"/>
<rect x="535.30" y="527.90" width="80.00" height="10.40" rx="2.2" fill="#545454"/>
<text x="544.50" y="535.30" fill="#dedede" font-size="7.3" text-anchor="start">Strength</text>
<text x="606.10" y="535.30" fill="#dedede" font-size="7.3" text-anchor="end">1.000</text>
<text x="535.30" y="548.70" fill="#dedede" font-size="7.3" text-anchor="start">Color</text>
<circle cx="368.60" cy="135.00" r="2.65" fill="#c7c729" stroke="#1a1a1a" stroke-opacity="0.8" stroke-width="0.6"/>
<circle cx="368.60" cy="148.80" r="2.65" fill="#a1a1a1" stroke="#1a1a1a" stroke-opacity="0.8" stroke-width="0.6"/>
<circle cx="218.30" cy="273.00" r="2.65" fill="#6363c7" stroke="#1a1a1a" stroke-opacity="0.8" stroke-width="0.6"/>
<circle cx="368.60" cy="322.20" r="2.65" fill="#c7c729" stroke="#1a1a1a" stroke-opacity="0.8" stroke-width="0.6"/>
<circle cx="368.60" cy="336.00" r="2.65" fill="#a1a1a1" stroke="#1a1a1a" stroke-opacity="0.8" stroke-width="0.6"/>
<circle cx="218.30" cy="460.20" r="2.65" fill="#6363c7" stroke="#1a1a1a" stroke-opacity="0.8" stroke-width="0.6"/>
<circle cx="349.50" cy="608.70" r="2.65" fill="#c7c729" stroke="#1a1a1a" stroke-opacity="0.8" stroke-width="0.6"/>
<circle cx="349.50" cy="622.50" r="2.65" fill="#a1a1a1" stroke="#1a1a1a" stroke-opacity="0.8" stroke-width="0.6"/>
<circle cx="199.20" cy="746.70" r="2.65" fill="#6363c7" stroke="#1a1a1a" stroke-opacity="0.8" stroke-width="0.6"/>
<circle cx="586.90" cy="108.50" r="2.65" fill="#c7c729" stroke="#1a1a1a" stroke-opacity="0.8" stroke-width="0.6"/>
<circle cx="498.80" cy="187.00" r="2.65" fill="#a1a1a1" stroke="#1a1a1a" stroke-opacity="0.8" stroke-width="0.6"/>
<circle cx="498.80" cy="200.40" r="2.65" fill="#c7c729" stroke="#1a1a1a" stroke-opacity="0.8" stroke-width="0.6"/>
<circle cx="498.80" cy="214.30" r="2.65" fill="#c7c729" stroke="#1a1a1a" stroke-opacity="0.8" stroke-width="0.6"/>
<circle cx="524.90" cy="343.50" r="2.65" fill="#a1a1a1" stroke="#1a1a1a" stroke-opacity="0.8" stroke-width="0.6"/>
<circle cx="524.90" cy="357.30" r="2.65" fill="#a1a1a1" stroke="#1a1a1a" stroke-opacity="0.8" stroke-width="0.6"/>
<circle cx="524.90" cy="371.00" r="2.65" fill="#a1a1a1" stroke="#1a1a1a" stroke-opacity="0.8" stroke-width="0.6"/>
<circle cx="437.10" cy="386.60" r="2.65" fill="#6363c7" stroke="#1a1a1a" stroke-opacity="0.8" stroke-width="0.6"/>
<circle cx="736.00" cy="292.40" r="2.65" fill="#a1a1a1" stroke="#1a1a1a" stroke-opacity="0.8" stroke-width="0.6"/>
<circle cx="736.00" cy="305.90" r="2.65" fill="#a1a1a1" stroke="#1a1a1a" stroke-opacity="0.8" stroke-width="0.6"/>
<circle cx="883.80" cy="373.40" r="2.65" fill="#63c763" stroke="#1a1a1a" stroke-opacity="0.8" stroke-width="0.6"/>
<circle cx="734.20" cy="387.60" r="2.65" fill="#c7c729" stroke="#1a1a1a" stroke-opacity="0.8" stroke-width="0.6"/>
<circle cx="734.20" cy="400.80" r="2.65" fill="#a1a1a1" stroke="#1a1a1a" stroke-opacity="0.8" stroke-width="0.6"/>
<circle cx="734.20" cy="414.40" r="2.65" fill="#a1a1a1" stroke="#1a1a1a" stroke-opacity="0.8" stroke-width="0.6"/>
<circle cx="734.20" cy="428.60" r="2.65" fill="#a1a1a1" stroke="#1a1a1a" stroke-opacity="0.8" stroke-width="0.6"/>
<circle cx="734.20" cy="442.50" r="2.65" fill="#a1a1a1" stroke="#1a1a1a" stroke-opacity="0.8" stroke-width="0.6"/>
<circle cx="734.20" cy="455.70" r="2.65" fill="#6363c7" stroke="#1a1a1a" stroke-opacity="0.8" stroke-width="0.6"/>
<circle cx="983.70" cy="388.90" r="2.65" fill="#63c763" stroke="#1a1a1a" stroke-opacity="0.8" stroke-width="0.6"/>
<circle cx="983.70" cy="402.90" r="2.65" fill="#63c763" stroke="#1a1a1a" stroke-opacity="0.8" stroke-width="0.6"/>
<circle cx="983.70" cy="416.60" r="2.65" fill="#6363c7" stroke="#1a1a1a" stroke-opacity="0.8" stroke-width="0.6"/>
<circle cx="983.70" cy="430.50" r="2.65" fill="#a1a1a1" stroke="#1a1a1a" stroke-opacity="0.8" stroke-width="0.6"/>
<circle cx="621.90" cy="486.60" r="2.65" fill="#6363c7" stroke="#1a1a1a" stroke-opacity="0.8" stroke-width="0.6"/>
<circle cx="528.50" cy="532.70" r="2.65" fill="#a1a1a1" stroke="#1a1a1a" stroke-opacity="0.8" stroke-width="0.6"/>
<circle cx="528.50" cy="546.50" r="2.65" fill="#c7c729" stroke="#1a1a1a" stroke-opacity="0.8" stroke-width="0.6"/>
<path d="M1035.6,755.2 L1035.6,771.2 L1039.6,767.4 L1042.3,773.2 L1045.0,771.9 L1042.4,766.3 L1046.9,766.3 Z" fill="#fff" stroke="#000" stroke-width="1.1" stroke-linejoin="round"/>
</svg>
</body></html>
